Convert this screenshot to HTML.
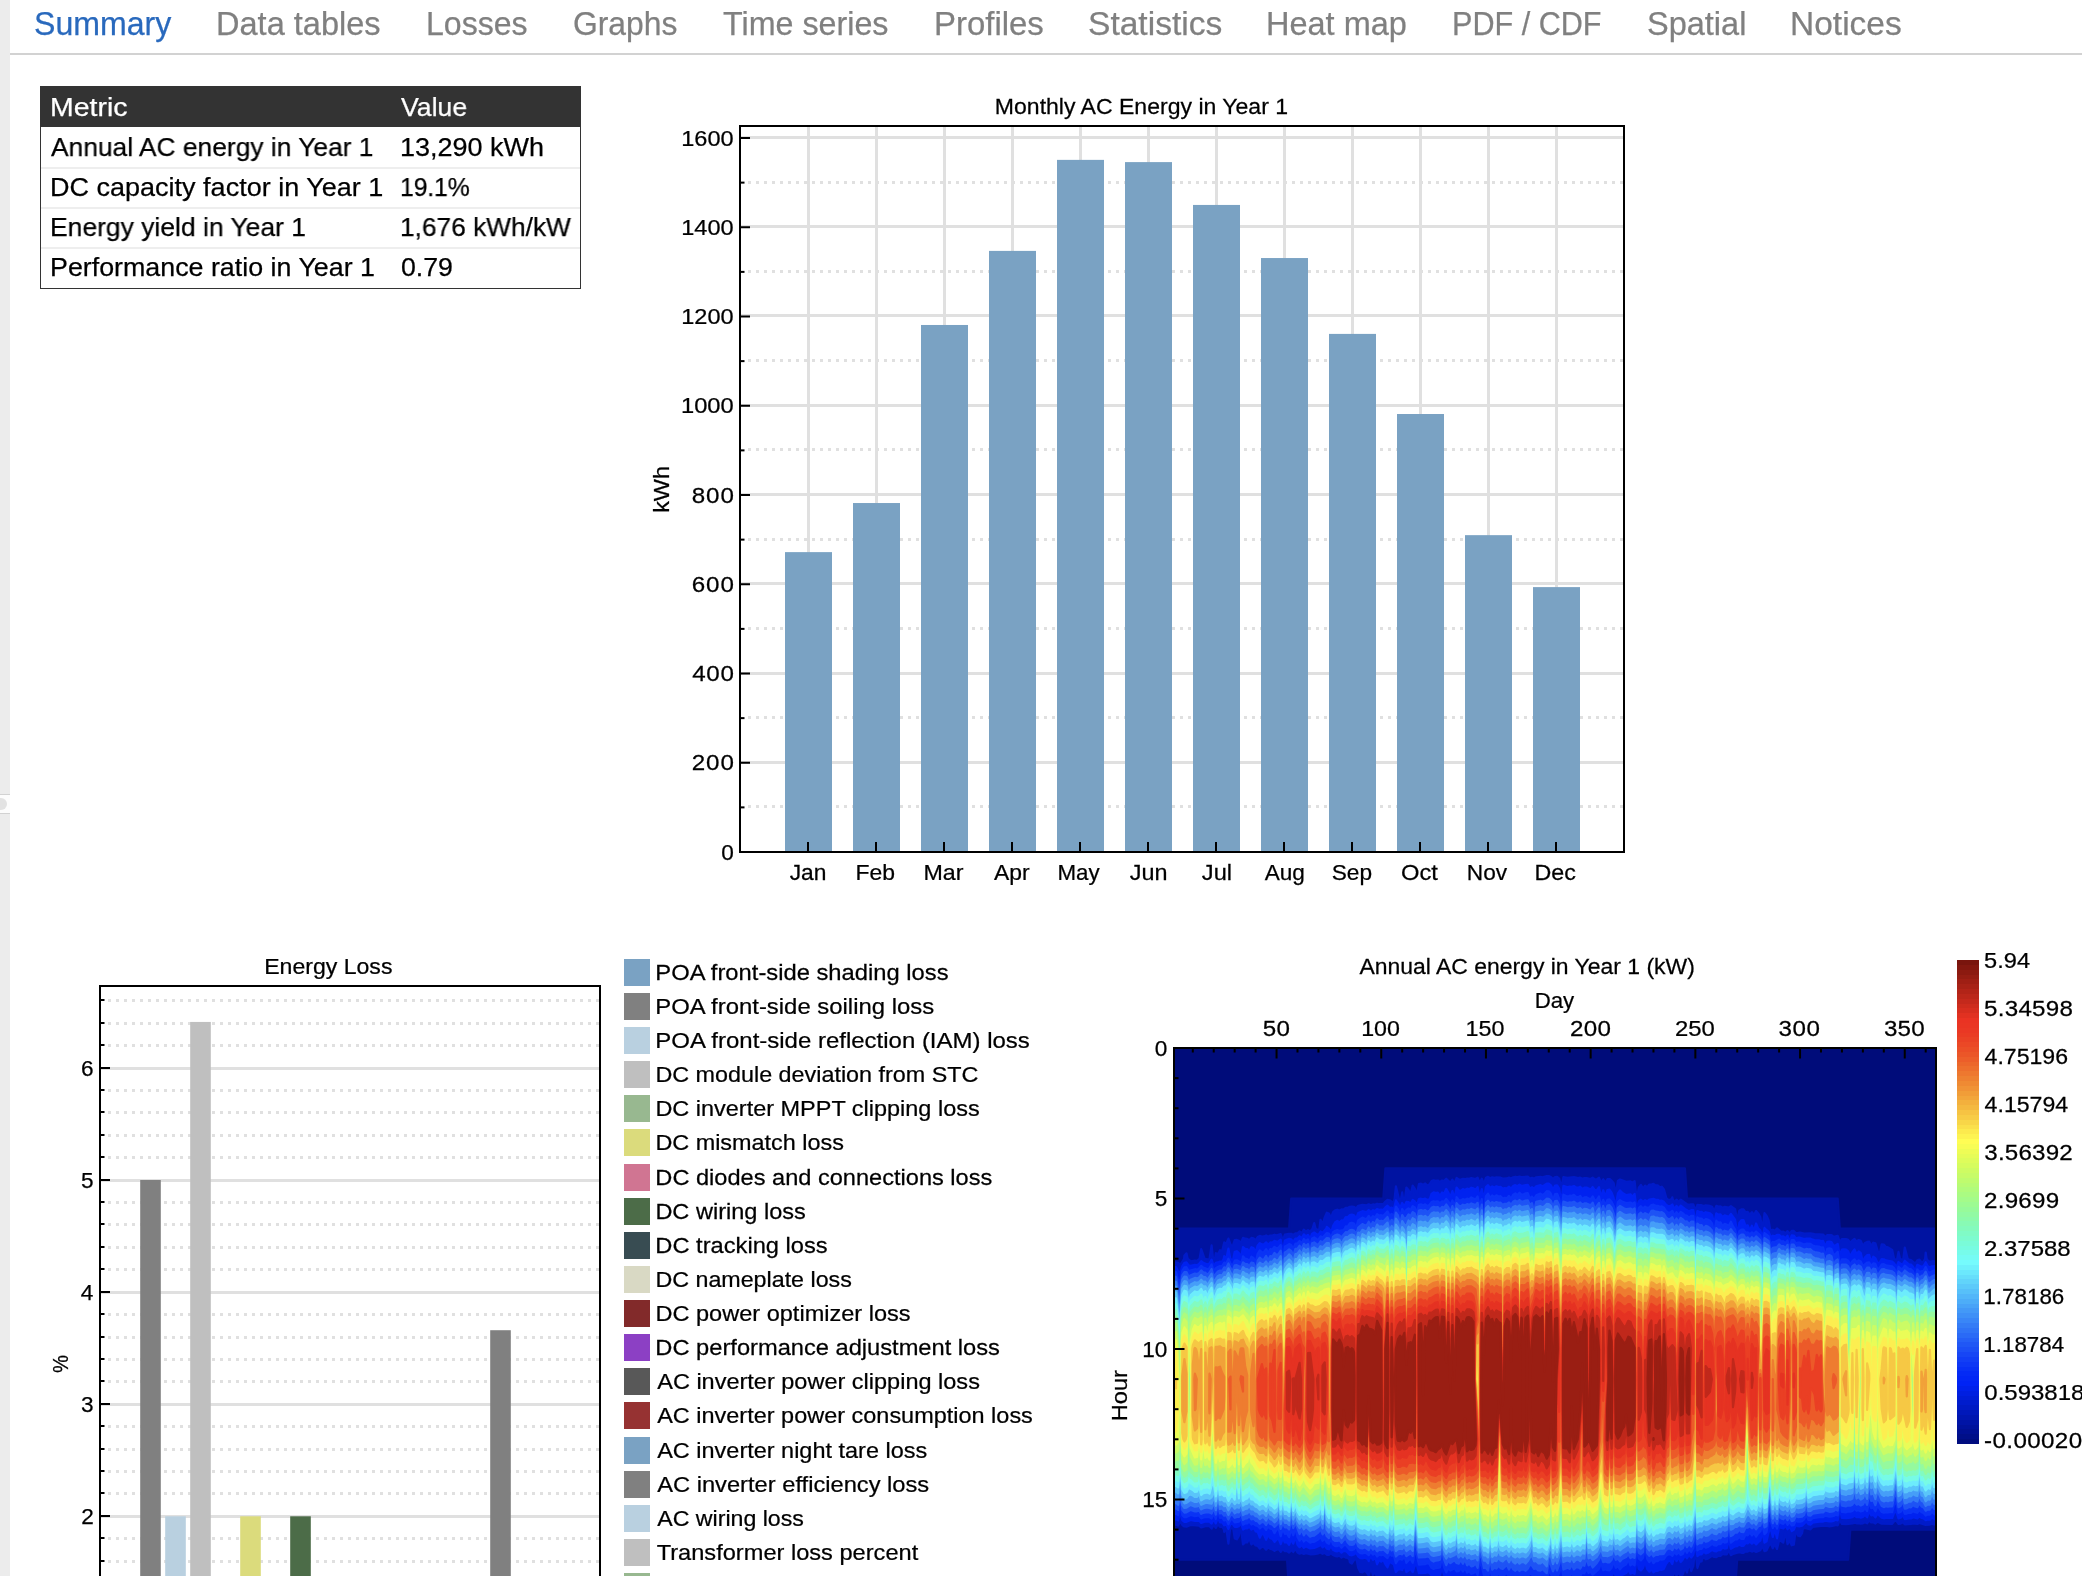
<!DOCTYPE html>
<html lang="en">
<head>
<meta charset="utf-8">
<title>Summary</title>
<style>
html,body{margin:0;padding:0;background:#fff}
body{width:2082px;height:1576px;overflow:hidden;position:relative;font-family:'Liberation Sans', 'DejaVu Sans', sans-serif;color:#000}
.strip{position:absolute;left:0;top:0;width:10px;height:1576px;background:#ececec}
.sash{position:absolute;left:0;top:794px;width:10px;height:18px;background:#fcfcfc;border-top:1px solid #d2d2d2;border-bottom:1px solid #d2d2d2;box-sizing:content-box;overflow:hidden}
.sash i{position:absolute;left:-5.8px;top:2.8px;width:12.5px;height:12.5px;border-radius:50%;background:#e2e2e2}
nav{position:absolute;left:10px;top:0;width:2072px;height:53px;border-bottom:2px solid #d2d2d2}
nav a{position:absolute;-webkit-text-stroke:.25px #808080;transform-origin:0 0;font-size:32.8px;line-height:1;color:#808080;white-space:pre;text-decoration:none}
nav a.on{color:#2969bd;-webkit-text-stroke-color:#2969bd}
table.m{position:absolute;left:40px;top:86px;width:541px;height:203px;border-collapse:separate;border-spacing:0;border:1px solid #333;box-sizing:border-box;table-layout:fixed;background:#fff}
table.m th,table.m td{padding:0;margin:0;font-weight:normal;text-align:left;line-height:0;font-size:0}
table.m th{background:#333;height:40px;box-shadow:0 -1px 0 #333,-1px 0 0 #333,1px 0 0 #333}
table.m td{height:38px;border-bottom:2px solid #eee}
table.m tr.r1 td{height:40px}
table.m tr.r4 td{height:39px;border-bottom:0}
table.m col.a{width:351px}
.c{position:absolute;-webkit-text-stroke:.25px #000;transform-origin:0 0;font-size:26.7px;line-height:1;white-space:pre}
.h{color:#fff;-webkit-text-stroke-color:#fff}
svg{position:absolute;left:0;top:0;will-change:transform}
nav,.c{will-change:transform}
svg text{font-family:'Liberation Sans', 'DejaVu Sans', sans-serif;white-space:pre;stroke:#000;stroke-width:.25px}
</style>
</head>
<body>
<div class="strip"><div class="sash"><i></i></div></div>
<nav>
<a class=on style="left:24.43px;top:7.83px;transform:scaleX(0.9787)">Summary</a>
<a style="left:206.07px;top:7.83px;transform:scaleX(0.9920)">Data tables</a>
<a style="left:415.91px;top:7.83px;transform:scaleX(0.9780)">Losses</a>
<a style="left:562.74px;top:7.83px;transform:scaleX(0.9705)">Graphs</a>
<a style="left:713.06px;top:7.83px;transform:scaleX(0.9832)">Time series</a>
<a style="left:923.54px;top:7.83px;transform:scaleX(1.0038)">Profiles</a>
<a style="left:1078.36px;top:7.83px;transform:scaleX(1.0233)">Statistics</a>
<a style="left:1255.78px;top:7.83px;transform:scaleX(0.9906)">Heat map</a>
<a style="left:1441.74px;top:7.83px;transform:scaleX(0.9325)">PDF / CDF</a>
<a style="left:1636.71px;top:7.83px;transform:scaleX(0.9912)">Spatial</a>
<a style="left:1779.79px;top:7.83px;transform:scaleX(1.0218)">Notices</a>
</nav>
<table class="m"><colgroup><col class="a"><col></colgroup>
<thead><tr class="r0"><th><span class="c h" style="left:8.5px;top:6.5px;transform:scaleX(1.0667)">Metric</span></th><th><span class="c h" style="left:359.55px;top:6.5px;transform:scaleX(0.9969)">Value</span></th></tr></thead>
<tbody><tr class="r1"><td><span class="c" style="left:9.9px;top:46.7px;transform:scaleX(0.9879)">Annual AC energy in Year 1</span></td><td><span class="c" style="left:358.58px;top:46.7px;transform:scaleX(1.0119)">13,290 kWh</span></td></tr>
<tr class="r2"><td><span class="c" style="left:8.62px;top:86.7px;transform:scaleX(1.0121)">DC capacity factor in Year 1</span></td><td><span class="c" style="left:358.74px;top:86.7px;letter-spacing:-0.2px;transform:scaleX(0.9300)">19.1%</span></td></tr>
<tr class="r3"><td><span class="c" style="left:8.67px;top:126.7px;transform:scaleX(0.9916)">Energy yield in Year 1</span></td><td><span class="c" style="left:358.63px;top:126.7px;transform:scaleX(0.9848)">1,676 kWh/kW</span></td></tr>
<tr class="r4"><td><span class="c" style="left:8.64px;top:166.7px;transform:scaleX(1.0047)">Performance ratio in Year 1</span></td><td><span class="c" style="left:359.5px;top:166.7px">0.79</span></td></tr>
</tbody></table>
<svg width="2082" height="1576" viewBox="0 0 2082 1576">
<g id="monthly">
<g fill="#e0e0e0"><rect x="741.0" y="761" width="882.0" height="3"/><rect x="741.0" y="672" width="882.0" height="3"/><rect x="741.0" y="582" width="882.0" height="3"/><rect x="741.0" y="493" width="882.0" height="3"/><rect x="741.0" y="404" width="882.0" height="3"/><rect x="741.0" y="314" width="882.0" height="3"/><rect x="741.0" y="225" width="882.0" height="3"/><rect x="741.0" y="136" width="882.0" height="3"/><rect x="807" y="127.0" width="3" height="724.0"/><rect x="875" y="127.0" width="3" height="724.0"/><rect x="943" y="127.0" width="3" height="724.0"/><rect x="1011" y="127.0" width="3" height="724.0"/><rect x="1079" y="127.0" width="3" height="724.0"/><rect x="1147" y="127.0" width="3" height="724.0"/><rect x="1215" y="127.0" width="3" height="724.0"/><rect x="1283" y="127.0" width="3" height="724.0"/><rect x="1351" y="127.0" width="3" height="724.0"/><rect x="1419" y="127.0" width="3" height="724.0"/><rect x="1487" y="127.0" width="3" height="724.0"/><rect x="1555" y="127.0" width="3" height="724.0"/></g>
<path d="M748 806.5H1623.0M748 717.5H1623.0M748 628.5H1623.0M748 539.5H1623.0M748 449.5H1623.0M748 360.5H1623.0M748 271.5H1623.0M748 182.5H1623.0" stroke="#e0e0e0" stroke-width="3" stroke-dasharray="3 5" fill="none"/>
<g fill="#7aa2c3"><rect x="785" y="552.12" width="47" height="299.88"/><rect x="853" y="503.03" width="47" height="348.97"/><rect x="921" y="324.98" width="47" height="527.02"/><rect x="989" y="250.9" width="47" height="601.1"/><rect x="1057" y="159.87" width="47" height="692.13"/><rect x="1125" y="162.1" width="47" height="689.9"/><rect x="1193" y="204.94" width="47" height="647.06"/><rect x="1261" y="258.04" width="47" height="593.96"/><rect x="1329" y="333.9" width="47" height="518.1"/><rect x="1397" y="414.01" width="47" height="437.99"/><rect x="1465" y="535.16" width="47" height="316.84"/><rect x="1533" y="587.11" width="47" height="264.89"/></g>
<g fill="#000"><rect x="739" y="125" width="2" height="728"/><rect x="1623" y="125" width="2" height="728"/><rect x="739" y="125" width="886" height="2"/><rect x="739" y="851" width="886" height="2"/><rect x="741" y="761.75" width="9" height="2"/><rect x="741" y="672.5" width="9" height="2"/><rect x="741" y="583.25" width="9" height="2"/><rect x="741" y="494" width="9" height="2"/><rect x="741" y="404.75" width="9" height="2"/><rect x="741" y="315.5" width="9" height="2"/><rect x="741" y="226.25" width="9" height="2"/><rect x="741" y="137" width="9" height="2"/><rect x="741" y="806.38" width="3.5" height="2"/><rect x="741" y="717.12" width="3.5" height="2"/><rect x="741" y="627.88" width="3.5" height="2"/><rect x="741" y="538.62" width="3.5" height="2"/><rect x="741" y="449.38" width="3.5" height="2"/><rect x="741" y="360.12" width="3.5" height="2"/><rect x="741" y="270.88" width="3.5" height="2"/><rect x="741" y="181.62" width="3.5" height="2"/><rect x="807" y="842" width="2" height="9"/><rect x="875" y="842" width="2" height="9"/><rect x="943" y="842" width="2" height="9"/><rect x="1011" y="842" width="2" height="9"/><rect x="1079" y="842" width="2" height="9"/><rect x="1147" y="842" width="2" height="9"/><rect x="1215" y="842" width="2" height="9"/><rect x="1283" y="842" width="2" height="9"/><rect x="1351" y="842" width="2" height="9"/><rect x="1419" y="842" width="2" height="9"/><rect x="1487" y="842" width="2" height="9"/><rect x="1555" y="842" width="2" height="9"/></g>
<g><text transform="translate(994.82 113.9) scale(1.0198 1)" font-size="22.6">Monthly AC Energy in Year 1</text><text transform="translate(721.15 859.6)" font-size="22.6">0</text><text transform="translate(691.73 770.35) scale(1.0700 1)" font-size="22.6" letter-spacing="0.86">200</text><text transform="translate(692.26 681.1) scale(1.0700 1)" font-size="22.6" letter-spacing="0.61">400</text><text transform="translate(691.73 591.85) scale(1.0700 1)" font-size="22.6" letter-spacing="0.86">600</text><text transform="translate(691.73 502.6) scale(1.0700 1)" font-size="22.6" letter-spacing="0.86">800</text><text transform="translate(680.96 413.35) scale(1.0492 1)" font-size="22.6">1000</text><text transform="translate(681.27 324.1) scale(1.0429 1)" font-size="22.6">1200</text><text transform="translate(681.27 234.85) scale(1.0429 1)" font-size="22.6">1400</text><text transform="translate(681.27 145.6) scale(1.0429 1)" font-size="22.6">1600</text><text transform="translate(789.65 879.9) scale(1.0101 1)" font-size="22.6">Jan</text><text transform="translate(855.42 879.9) scale(1.0152 1)" font-size="22.6">Feb</text><text transform="translate(923.4 879.9) scale(1.0286 1)" font-size="22.6">Mar</text><text transform="translate(993.9 879.9) scale(1.0129 1)" font-size="22.6">Apr</text><text transform="translate(1057.47 879.9) scale(0.9878 1)" font-size="22.6">May</text><text transform="translate(1129.84 879.9) scale(1.0360 1)" font-size="22.6">Jun</text><text transform="translate(1201.84 879.9) scale(1.0459 1)" font-size="22.6">Jul</text><text transform="translate(1264.7 879.9)" font-size="22.6">Aug</text><text transform="translate(1331.7 879.9) scale(1.0039 1)" font-size="22.6">Sep</text><text transform="translate(1400.95 879.9) scale(1.0500 1)" font-size="22.6">Oct</text><text transform="translate(1466.84 879.9) scale(1.0039 1)" font-size="22.6">Nov</text><text transform="translate(1534.5 879.9) scale(1.0305 1)" font-size="22.6">Dec</text><text transform="translate(669.2 512.85) rotate(-90) scale(1.0343 1)" font-size="22.6">kWh</text></g>
</g>
<g id="loss">
<g fill="#e0e0e0"><rect x="101.0" y="1067" width="498.0" height="3"/><rect x="101.0" y="1179" width="498.0" height="3"/><rect x="101.0" y="1291" width="498.0" height="3"/><rect x="101.0" y="1403" width="498.0" height="3"/><rect x="101.0" y="1515" width="498.0" height="3"/></g>
<path d="M108 1583.5H599.0M108 1561.5H599.0M108 1538.5H599.0M108 1493.5H599.0M108 1471.5H599.0M108 1449.5H599.0M108 1426.5H599.0M108 1381.5H599.0M108 1359.5H599.0M108 1337.5H599.0M108 1314.5H599.0M108 1269.5H599.0M108 1247.5H599.0M108 1224.5H599.0M108 1202.5H599.0M108 1157.5H599.0M108 1135.5H599.0M108 1112.5H599.0M108 1090.5H599.0M108 1045.5H599.0M108 1023.5H599.0M108 1000.5H599.0" stroke="#e0e0e0" stroke-width="3" stroke-dasharray="3 5" fill="none"/>
<rect x="140.2" y="1180" width="20.6" height="406" fill="#808080"/><rect x="165.2" y="1516.3" width="20.6" height="69.7" fill="#b9d0e0"/><rect x="190.2" y="1021.94" width="20.6" height="564.06" fill="#bfbfbf"/><rect x="240.2" y="1516.3" width="20.6" height="69.7" fill="#dbdb7c"/><rect x="290.2" y="1516.3" width="20.6" height="69.7" fill="#4c6c48"/><rect x="490.2" y="1330.21" width="20.6" height="255.79" fill="#808080"/>
<g fill="#000"><rect x="99" y="985" width="2" height="596"/><rect x="599" y="985" width="2" height="596"/><rect x="99" y="985" width="502" height="2"/><rect x="101" y="1067" width="9" height="2"/><rect x="101" y="1179" width="9" height="2"/><rect x="101" y="1291" width="9" height="2"/><rect x="101" y="1403" width="9" height="2"/><rect x="101" y="1515" width="9" height="2"/><rect x="101" y="1582" width="3.5" height="2"/><rect x="101" y="1560" width="3.5" height="2"/><rect x="101" y="1537" width="3.5" height="2"/><rect x="101" y="1492" width="3.5" height="2"/><rect x="101" y="1470" width="3.5" height="2"/><rect x="101" y="1448" width="3.5" height="2"/><rect x="101" y="1425" width="3.5" height="2"/><rect x="101" y="1380" width="3.5" height="2"/><rect x="101" y="1358" width="3.5" height="2"/><rect x="101" y="1336" width="3.5" height="2"/><rect x="101" y="1313" width="3.5" height="2"/><rect x="101" y="1268" width="3.5" height="2"/><rect x="101" y="1246" width="3.5" height="2"/><rect x="101" y="1223" width="3.5" height="2"/><rect x="101" y="1201" width="3.5" height="2"/><rect x="101" y="1156" width="3.5" height="2"/><rect x="101" y="1134" width="3.5" height="2"/><rect x="101" y="1111" width="3.5" height="2"/><rect x="101" y="1089" width="3.5" height="2"/><rect x="101" y="1044" width="3.5" height="2"/><rect x="101" y="1022" width="3.5" height="2"/><rect x="101" y="999" width="3.5" height="2"/></g>
<g><text transform="translate(264.21 974.2) scale(1.0211 1)" font-size="22.6">Energy Loss</text><text transform="translate(81.05 1075.8)" font-size="22.6">6</text><text transform="translate(81.05 1187.9)" font-size="22.6">5</text><text transform="translate(80.8 1300)" font-size="22.6">4</text><text transform="translate(81.05 1412.1)" font-size="22.6">3</text><text transform="translate(81.3 1524.2)" font-size="22.6">2</text><text transform="translate(67.5 1372.97) rotate(-90) scale(0.8973 1)" font-size="22.6">%</text></g>
</g>
<g id="legend">
<rect x="624" y="959" width="26" height="27" fill="#7aa2c3"/><rect x="624" y="993" width="26" height="27" fill="#808080"/><rect x="624" y="1027" width="26" height="27" fill="#b9d0e0"/><rect x="624" y="1061" width="26" height="27" fill="#bfbfbf"/><rect x="624" y="1095" width="26" height="27" fill="#98b890"/><rect x="624" y="1129" width="26" height="27" fill="#dbdb7c"/><rect x="624" y="1164" width="26" height="27" fill="#d07592"/><rect x="624" y="1198" width="26" height="27" fill="#4c6c48"/><rect x="624" y="1232" width="26" height="27" fill="#384c52"/><rect x="624" y="1266" width="26" height="27" fill="#d9d9c4"/><rect x="624" y="1300" width="26" height="27" fill="#822a2a"/><rect x="624" y="1334" width="26" height="27" fill="#8c40c4"/><rect x="624" y="1368" width="26" height="27" fill="#585858"/><rect x="624" y="1402" width="26" height="27" fill="#963232"/><rect x="624" y="1437" width="26" height="27" fill="#7aa2c3"/><rect x="624" y="1471" width="26" height="27" fill="#808080"/><rect x="624" y="1505" width="26" height="27" fill="#b9d0e0"/><rect x="624" y="1539" width="26" height="27" fill="#bfbfbf"/><rect x="624" y="1573" width="26" height="27" fill="#98b890"/>
<g><text transform="translate(655.36 979.9) scale(1.0516 1)" font-size="22.6">POA front-side shading loss</text><text transform="translate(655.35 1013.9) scale(1.0568 1)" font-size="22.6">POA front-side soiling loss</text><text transform="translate(655.34 1047.9) scale(1.0612 1)" font-size="22.6">POA front-side reflection (IAM) loss</text><text transform="translate(655.39 1081.9) scale(1.0332 1)" font-size="22.6">DC module deviation from STC</text><text transform="translate(655.38 1115.9) scale(1.0389 1)" font-size="22.6">DC inverter MPPT clipping loss</text><text transform="translate(655.39 1149.9) scale(1.0351 1)" font-size="22.6">DC mismatch loss</text><text transform="translate(655.37 1184.9) scale(1.0439 1)" font-size="22.6">DC diodes and connections loss</text><text transform="translate(655.38 1218.9) scale(1.0420 1)" font-size="22.6">DC wiring loss</text><text transform="translate(655.37 1252.9) scale(1.0481 1)" font-size="22.6">DC tracking loss</text><text transform="translate(655.4 1286.9) scale(1.0295 1)" font-size="22.6">DC nameplate loss</text><text transform="translate(655.38 1320.9) scale(1.0427 1)" font-size="22.6">DC power optimizer loss</text><text transform="translate(655.37 1354.9) scale(1.0481 1)" font-size="22.6">DC performance adjustment loss</text><text transform="translate(657.2 1388.9) scale(1.0410 1)" font-size="22.6">AC inverter power clipping loss</text><text transform="translate(657.2 1422.9) scale(1.0391 1)" font-size="22.6">AC inverter power consumption loss</text><text transform="translate(657.2 1457.9) scale(1.0392 1)" font-size="22.6">AC inverter night tare loss</text><text transform="translate(657.2 1491.9) scale(1.0485 1)" font-size="22.6">AC inverter efficiency loss</text><text transform="translate(657.2 1525.9) scale(1.0250 1)" font-size="22.6">AC wiring loss</text><text transform="translate(656.68 1559.9) scale(1.0450 1)" font-size="22.6">Transformer loss percent</text></g>
</g>
<g id="heatmap">
<clipPath id="hc"><rect x="1174.0" y="1048.0" width="762.0" height="528.0"/></clipPath>
<g clip-path="url(#hc)" stroke-width="2.2" stroke-linejoin="round"><rect x="1174.0" y="1048.0" width="762.0" height="528.0" fill="#000c7a" stroke="none"/>
<path fill="#0013a1" stroke="#0013a1" d="M1383.3 1198.5l2.1-30.1 299.5 0 2.1 30.1 150.7 0.1 2.1 30 96.4 0 0 301-85.9 0-2.1 30-111 0.1-2.1 30-71.2 0.1-2.1 30-259.6 0-2.1-30-111-0.1-2.1-30-113.1-0.1 0-331 115.2 0 2.1-30z"/>
<path fill="#001bc9" stroke="#001bc9" d="M1394.6 1198.5l1.3-12.2 3 12.2 1.2 1.9 1-1.9 1.1-6.1 0.9 6.1 1.2 2 0.7-2 1.4-11 2.1 2.5 2.1 4.7 2.1-9.1 2.1 3 2 6.4 2.1-10.9 2.1-0.4 2.1 1 2.1-1.2 2.1 2 2.1-1 2.1-3.4 2.1-0.8 2.1 0.5 2.1-0.3 2.1 1.6 2.1-1.6 2.1 0.5 2.1-2.3 4.2 4.1 2-3.1 2.1 3.9 2.1-5.6 2.1 1.4 2.1 0.4 2.1-1 2.1 0.4 2.1-0.7 2.1 0.4 2.1-0.8 4.2 0.9 2.1-1.3 2.1 5.3 2.1-4.3 2.1 5.1 2.1-6.1 2-0.9 2.1 1.4 2.1-0.8 2.1 0.5 2.1-0.5 4.2 0.3 2.1 0.8 4.2-0.1 2.1-0.9 2.1 1 2.1-1.3 2.1-0.5 2.1 0.6 2.1-0.8 2 0.7 6.3-0.6 2.1 1.9 2.1-0.7 2.1 0.8 2.1-1.3 4.2-0.5 2.1 0.5 4.2-1.3 2.1 0 2.1 0.9 2.1 2.2 2.1-2.1 2-0.1 2.1 1.7 2.1 8.9 2.1-10.3 4.2 0.6 6.3-0.6 4.2 0.9 2.1-0.5 2.1 1.1 2.1-0.6 2.1-0.1 4.1 1 2.1-1.3 2.1 1.6 2.1 0 2.1-1.6 2.1 5.1 2.1-3.5 2.1 3.4 2.1-3.5 2.1-0.2 2.1 1.6 2.1 2.7 2.1 10.4 2.1-12.8 2.1-1.4 6.2 2.3 4.2-0.4 2.1 1.2 2.1-1.5 2.1 17.5 2.1-10.9 2.1-2.8 2.1 3.6 2.1-2.9 2.1 1.9 2.1-3 2.1 0.1 2.1-0.7 2.1 1.4 2.1 0 2.1 2 2-0.6 2.1 2.7 2.6 9.1 1.6 1.1 2.1 0.3 1.8-1.4 0.3-1.2 0.2 1.2 1.9 3.9 2.1-2.8 2.1 2.2 2.1-2.1 6.3 4.5 2.1 0.7 2.1-0.6 2.1 0 2.1 6.3 2-5.8 2.1 0.4 2.1 0 2.1 0.8 2.1-0.7 4.2 0.6 2.1 0.9 2.1 4.3 2.1-5.2 2.1 0.7 2.1-0.2 2.1 1.3 2.1-0.8 4.2 0.7 2-1.4 4.2 2.9 2.1 10.8 2.1-9.2 2.1-1.4 2.1 0 2.1 3 2.1-0.4 2.1 2.7 2.1-2.5 2.1 2.8 2.1-3.9 2.1 2.4 2.1 3.7 2.1 12.2 2.1-16.1 2 2.5 2.1 4.5 1.4 8.4 0.7 1.6 2.1-0.5 2.1 1 2.1-2.3 4.2 3.5 2.1-0.2 2.1 1.5 2.1-2.1 2.1 2.7 2.1-2.9 2.1 0 2.1 2.4 4.1-0.6 4.2 0.9 6.3-0.2 4.2 0.7 8.4 0.4 2.1 2.7 2.1-2.2 4.2 0 2.1 1.8 4.1-1 2.1 6.4 2.1-3.1 2.1-0.1 2.1 0.1 2.1 0.8 2.1 2.8 2.1-2.3 2.1-1.4 2.1 2.6 2.1-1.6 2.1 0.8 2.1 5.2 2.1-3.1 2.1-1 2.1-0.2 2 4.3 2.1-3.3 2.1 0.6 2.1 7.1 2.1 4.1 2.1-10.2 2.1 0.3 2.1 2.3 2.1 0.5 4.2 2.6 1.9 8.7 2.3 1.4 0.8-1.4 1.3-6.8 1.5 6.8 2.7 1.2 0.6-1.2 1.5-11.2 2.9 11.2 1.2 1 2.1 0.4 4.2 3.6 2.1-3.5 2.1-0.6 2.1 2.6 2.1-0.7 1.5-2.8 0.6-6.2 0.9 6.2 1.2 1.9 2.1 1.1 2.1-0.5 4.2 0.1 0 263.2-2.1-0.1-2.1-0.8-2.1 1-4.2 0.3-6.3-1.9-2.1 1-4.2-0.5-2.1 0.5-6.2 0.3-2.1-2-2.1 1.4-2.1 0.3-2.1-3.2-2.1 0.2-2.1 2.8-10.5-0.1-4.2-2.1-2.1 1.9-2.1-1.3-2.1 0.2-2-2.1-2.1 3.1-2.1-1.1-2.1 1-2.1 0.3-2.1-0.4-2.1 0.1-2.1-0.7-2.1 0.8-6.3 0.8-4.2-0.2-2.1-4.1-2.1 5.4-2.1-0.4-2 0.8-4.2 0.6-2.1-0.4-6.3 0.1-8.4 1-2.1 2.3-6.3-1.3-1.5 1.6-0.6 3.6-2.1 3.1-2-0.6-2.1-6.2-2.1 15.3-2.1 0.5-2.1-4.8-2.1 3.7-2.1-13.1-2.1 11.5-2.1-1.6-2.1-0.4-2.1 8.4-2.1-5.1-2.1 4.4-2.1-5.3-2.1 3.1-2.1 4.4-2 0.7-2.1-5.3-2.1 4.3-4.2 1.8-2.1-1.2-2.1 0.8-2.1-1-2.1 1-2.1-0.3-2.1 1.5-2.1 0-2.1-0.7-6.3 1.8-2.1 1.3-2-5-2.1 4.1-2.1 0.2-2.1-0.5-2.1 2-2.1-0.2-2.1 1.4-2.1-0.2-2.1-1.2-4.2 2.9-2.1 0.6-2.1-2.1-1.8 2.5-0.3 1.8-2.1 0.3-2.1 6.2-0.9-8.3-1.1-4.9-1.4 4.9-0.7 6.4-2.1 5-2.1-8.2-2.1 9.6-2.1-4.6-2.1 6.6-2.1 1.4-2.1-3.2-2.1 2.8-2.1-3.5-2.1 4.9-2.1-1.8-2.1 0.5-2.1 1.3-2.1 2.4-2.1 1-2-0.2-2.1 0.7-2.1-0.1-2.1 0.8-2.1-1.5-2.1 1.2-2.1-1.3-2.1-3.5-2.1 3-2.1 1.2-2.1-0.8-2.1-6.1-2.1 8.5-2.1-0.5-2.1 0.4-2.1-2-2.1 1.7-2 0.4-2.1 1-2.1 1.8-2.1-2.6-2.1 1.6-2.1-2-4.2 4-4.2-0.9-2.1 1-2.1-3.3-2.1 4.8-2.1-1.5-4.2 3.3-2.1-2.6-2 1.6-2.1 0.6-4.2-1.1-1.3 1.9-0.8 4.2-2.1-2.7-2.1-0.4-2.1 4.3-2.1-5.5-2.1 3.6-2.1-2.2-4.2 4.6-1.1-5.9-1-2.2-1.5 2.2-2.7 7.2-2-1-2.1 2.3-4.2-7.4-2.1 10-2.1-2.8-2.1-4-2.1 3.8-2.1-1.3-2.1-3.1-2.1 0-2.1 2.9-2.1-4.8-2.1 4.4-2.1 2-2.1-2.2-2.1-0.5-2 3.1-2.1-4.3-2.1 3.2-2.1-2.3-2.1-4.9-2.1 4.5-1-4.8-1.1-1.5-2.6 1.5-1.6 4.8-4.2-4.1-2.1 3.2-2.1-3.1-2.1 4-1.1-4.8-1-1.6-0.7 1.6-1.4 6.9-2.1-6.3-2-0.6-2.1-4.3-2.1-0.4-2.1 4.9-2.1-3.5-2.1 1.7-2.1 0.4-2.1-2.3-2.1 1.1-2.1-2.5-2.1 1.8-2.1-2.2-2.1 1.3-2.1 2.3-2.1-4.5-2.1 1.4-2 0.5-2.1-1.8-2.1 2.9-4.2-6.8-2.1 3-2.1 0.4-2.1-0.2-2.1 0.8-4.2-2.1-2.1-0.3-8.4 0.5-2.1-4.2-2 0.5-2.1 3.1-2.1-1.5-4.2 1.5-2.1-3.2-2.1 2.3-2.1-1.1-2.1 0.4-2.1 1.2-2.1-3.8-4.2-1.3-2.1 2.8-2.1-1.5-2.1-2.3-2.1 1-2-1.1-2.1 2.3-2.1-4.8-2.1 2.6-2.1-7.2-2.1 7.9-2.1-3.1-2.1-1.7-2.1 1.7-2.1-0.4-2.1-4.3-1.6-8-0.5-0.8-1.8 0.8-2.4 3.8-2.1-1.3-0.4-2.5-1.7-1.9-2-0.2-2.1-1.3-2.1 1.3-2.1-2.1-2.1 0.9-2.1-0.3-2.1-1-2.1-2-2.1 1.8-2.1-0.1-2.1-1.9-2.1 0.9-2.1-1.3-2.1 0.8-4.2 0.8-4.1 0.2-4.2-1-2.1 0.7-2.1-1.3-2.1 1-2.1-1.2-2.1-3.7-2.1 3.2-2.1-2-2.1 2.6-2.1-1.6-2.1 0.1-2.1-2.1-2.1 2.9-2.1-2.8-2 0.5-2.1 1.3-2.1-1.6-2.1-0.3-2.1-1.8-2.1 2.5-2.1-2.4-2.1-0.7-2.1 2.1-2.1-2.9-2.1-0.3-2.1-2.9-2.1 1.9-2.1-6-2.1 3.9-2.1 0-2.1 2-2-15.9-1 1.1-1.1 6.3-2.1 3.4-2.1-0.9-1.3-8.8-0.8-1.2-2.1-0.1-0.5 1.3-1.6 14-2.1-14.7-1.4 0.7-0.7 2.4-0.2-2.4-1.9-3-2.1 0.2-2.1-2.5-2.1 3.6-2.1-3.1-2.1 3.8-2.1-2.4-4.1-0.1-4.2 1.4-2.1-1.8-8.4-0.7-4.2 1.6-2.1-0.1-2.1-1.5-2.1-3.5-2.1 4-2.1-0.9-2.1 0.1 0-262.7 4.2 0.8 2.1 2.3 3.9-6.4 0.3-3.1 2.1-2.3 1.2 5.4 3 2.6 4.2-0.7 2.1 0.2 2.6-2.1 1.6-9.6 3.4 9.6 2.8 0.7 2.1-0.4 2.1-13.7 1.5 13.4 0.6 1.8 1.3-1.8 0.8-5.6 2.1 1.1 2.1-4 2.1 1.1 2.1-8.9 2.1 1.2 2.1-5 2.1 5.8 2.1 2.3 2.1-6.5 2.1-0.3 2.1 0.9 2.1 2.2 2-5.2 2.1 0.9 2.1 0.1 2.1 1.4 2.1-2.3 2.1 0.5 2.1 2 2.1-3.4 2.1-1.1 2.1 0.6 2.1-0.1 2.1-1 2.1 1.3 2.1-1.2 2.1 0.1 2.1-0.9 2.1 0.5 4.1-1.1 2.1 6 2.1-5.5 4.2-0.8 2.1 0 2.1 1.1 2.1-1.6 2.1 0 2.1-1.9 2.1 1.8 2.1-3.6 2.1 1.9 2.1-1.4 2.1 1.5 2.4-3 1.7-5.5 1.4 5.5 2.8 1.6 1-1.6 1.1-8.8 2.1 4.9 2.1-7.3 2.1-4.7 2.1 0.9 2.1 4.2 2.1-5.6 2.1-1.8 2.1-0.7 2.1 0.9 2.1-1.2 2.1 0.2 2.1-1.8 2 0.1 2.1-1.1 2.1-0.2 2.1 0.2 2.1 1.6 2.1-2.6 4.2-0.9 4.2 0.4 2.1-1 2.1 1 2.1-0.9 2.1 0.4 2.1-1.1 2.1 0.5 4.1 0 2.1-2.7 2.1-1.6 2.1 0.4 2.1 1.3 2.1 0.2z"/>
<path fill="#0022f0" stroke="#0022f0" d="M1430 1198.5l1.5-4.7 2.1-1.5 2.1 0.8 2.1-0.5 2.1 3.2 2.1-3.3 2.1 1.1 2.1-4.7 2.1 3.6 2.1 4.7 2-6.2 2.1 7.7 2.1-11.2 2.1 2.8 2.1 0.8 2.1-2 2.1 0.9 2.1-1.4 2.1 0.8 2.1-1.7 2.1 0.6 2.1 1.4 2.1-2.6 2.1 10.5 2.1-8.6 2.1 10.6 2-12.6 2.1-1.8 2.1 2.9 2.1-1.7 2.1 1 2.1-1.1 2.1 0.8 2.1-0.2 2.1 1.6 2.1-0.5 2.1 0.3 2.1-1.6 2.1 1.9 2.1-2.6 2.1-0.9 2.1 1.1 2.1-1.6 2 1.4 4.2-1 2.1-0.1 2.1 3.7 2.1-1.4 2.1 1.6 2.1-2.5 4.2-1.2 2.1 1.2 4.2-2.7 2.1 0.1 2.1 1.6 2.1 4.5 2.1-4.2 2-0.3 2.1 3.4 2.1 13.5 2.1-16.3 4.2 1.3 2.1-0.6 2.1 0.2 2.1-0.8 2.1 1.4 2.1 0.3 2.1-1 2.1 2.2 2.1-1.2 2.1-0.1 4.1 2 2.1-2.6 2.1 3.2 2.1 0 2.1-3.1 2.1 10.2 2.1-7.1 2.1 6.7 2.1-6.8 2.1-0.5 2.1 3.1 2.1 5.5 2.1 7.6 2.1-12.4 2.1-2.9 2.1 2.1 4.1 2.6 4.2-0.9 2.1 2.5 2.1-3 2.1 15 2.1-7.4 2.1-1.7 2.1 2.1 2.1-1.7 2.1 1.2 2.1-1.8 4.2-0.7 2.1 1 2.1 0 2.1 1.1 2-0.3 2.1 1.2 2.1 2.8 2.1 1.5 2.1 0.1 2.1-1.7 2.1 4.5 2.1-3.1 2.1 2.6 2.1-2.8 4.2 3.2 4.2 2.5 2.1-1.3 2.1 0 2.1 12.5 2-11.6 2.1 1 2.1-0.2 2.1 1.7 2.1-1.3 4.2 1.2 2.1 1.7 2.1 8.6 2.1-10.4 2.1 1.4 2.1-0.3 2.1 2.5 2.1-1.5 4.2 1.3 2-2.7 4.2 5.7 2.1 12.7 1.2-3.8 0.9-5.7 2.1-2.8 2.1 0 2.1 6 2.1-0.8 1.4 3.3 0.7 0.7 0.8-0.7 1.3-2.9 1.2 2.9 0.9 0.8 0.6-0.8 1.5-5.1 2.2 5.1 2 1.8 2.1 6.5 2.1-9 0.3 0.7 3.8 2.9 2.1 5.8 2.1-1.6 2.1 0.7 2.1-1.6 2.1 0 2.1 1.9 2.1-0.3 2.1 1.8 2.1-2.5 2.1 5.8 2.1-6.1 2.1 0.1 2.1 2.9 2.1-0.7 2 0 4.2 1.3 2.1-0.5 4.2 0.2 2.1 1 2.1 0.4 4.2 0.3 2.1 0.6 2.1-0.1 2.1 5.6 2.1-4.6 2.1-0.4 2.1 0.6 2.1 3.7 2-0.5 2.1-1.5 2.1 11.9 2.1-6.1 2.1-0.2 2.1 0.3 2.1 1.6 2.1 5.4 2.1-4.5 2.1-2.8 2.1 5.1 2.1-3.2 2.1 1.8 1.3 5.6 0.8 1.6 1.5-1.6 0.6-1.5 2.1-2 2.1-0.4 1 3.9 1 1.6 1.4-1.6 0.7-2 2.1 1.4 2.1 4.6 2.1 0.2 2.1-3.8 2.1 0.2 2.1 1.1 6.3 1.2 2.1 2 2.1 3.7 2.1-5.3 2.1 1.9 2.1 0.6 2.1-3.8 4.1 3.7 2.1 0.2 2.1 2.1 2.1 4.3 2.1-6.2 4.2 1.9 2.1-0.6 2.1-3.9 2.1 4 2.1 1 2.1-0.9 4.2-0.3 0 253.4-2.1-0.2-2.1-1.6-2.1 2-2.1-0.1-2.1 0.7-2.1-1.7-2.1-0.5-2.1-1.7-2.1 2.1-4.2-1.1-2.1 1.2-2.1-0.2-4.1 0.8-2.1-4-2.1 2.7-2.1 0.6-2.1-6.4-2.1 0.4-2.1 5.6-6.3-0.1-2.1 0.4-2.1-0.5-4.2-4.2-2.1 3.8-2.1-2.5-2.1 0.4-2-4.3-2.1 6.3-2.1-2.3-2.1 2-2.1 0.6-2.1-0.8-2.1 0.3-2.1-1.5-2.1 1.6-2.1 0.4-4.2 0.6-4.2-0.3-2.1-8.7-2.1 11.2-2.1-0.7-2 1.2-2.1 0.4-2.1 0.2-4.2-0.8-2.1 0.9-2.1-0.1-8.4 1.1-2.1 2.1-2.1-0.5-2.1-2.8-4.2 4.3-2.1 0.6-2-0.1-2.1-1.2-2.1 4.9-2.1 1.1-0.4-1.4-1.7-2.3-2.1 2-2.1-3.8-2.1 3-4.2-1.4-2.1 11.2-2.1-9.2-2.1 7.9-2.1-8.8-1 1.4-1.1 3-2.1 8.8-2 1.3-2.1-10.6-2.1 8.6-2.1 1.5-2.1 2.2-2.1-2.6-2.1 1.8-2.1-2.1-2.1 2-2.1-0.5-2.1 2.9-2.1-0.1-2.1-1.3-2.1 1.7-2.1 0.2-4.2 2.4-2-9.1-2.1 8.5-2.1 0.4-2.1-1-2.1 2.5-2.1-0.3-2.1 1.6-2.1-0.2-2.1-1.4-4.2 3-2.1 0.6-2.1-2-2.1 3-2.1 0-2.1 1.7-2-11.3-2.1 10-2.1 2.7-2.1-2.7-2.1 3.5-2.1-2.8-2.1 4-2.1 2.5-0.9-2.3-1.2-1.4-1.4 1.4-0.7 1.5-0.5-1.5-1.6-1.8-1 1.8-1.1 4.4-2.1-3.6-2.1 0.8-2.1 2.8-2.1 4.8-2.1 0.9-2-0.4-2.1 1.5-2.1-0.1-2.1 1.5-2.1-3.1-2.1 2.5-2.1-2.6-2.1-7.4-2.1 6.3-2.1 2.5-2.1-1.7-2.1-11-2.1 16-2.1-1-2.1 0.9-2.1-4.1-2.1 3.5-4.1 1.9-2.1 2.1-2.1-2.8-2.1 1.6-2.1-4.2-2.1 4.2-2.1 2.2-2.1-0.1-2.1-0.8-2.1 0.9-2.1-5.3-2.1 5.5-2.1 0.1-4.2 3.7-2.1-3-2 1.6-2.1-1.9-2.1 2.2-2.1-0.8-2.1 3.4-2.1-1.1-2.1 0-2.1 1.6-2.1-2.8-2.1 2.2-2.1-0.8-4.2 1.5-2.1-7.9-2.1 5.5-2.1 3.1-2-1.6-2.1 2.2-4.2-5.1-2.1 6.6-4.2-3.3-2.1 1.5-2.1-0.5-2.1-1.3-4.2 0-2.1-1.6-2.1 2.3-2.1 1.2-2.1-1-2.1-0.2-2 1.4-2.1-1.9-2.1 1.4-2.1-1-2.1-2.3-2.1 2.2-2.1-3.4-4.2 3.3-4.2-1.9-2.1 1.6-2.1-1-2.1 1.5-2.1-5.4-2.1 6.2-2.1-2.2-2-0.1-2.1-6.5-2.1-2.3-2.1 8.8-2.1-3.7-2.1 1.9-2.1 0.5-2.1-2.5-2.1 1.3-2.1-3.6-2.1 2.7-2.1-2.8-2.1 2.1-2.1 1.3-2.1-3.8-2.1 1.4-2 0.7-2.1-2-2.1 3.5-2.1-4.5-2.1-6.6-2.1 6.7-2.1 0.5-2.1-0.1-2.1 0.9-2.1-1-2.1-2.5-2.1-0.6-2.1 0.7-6.3 0.2-2.1-8.6-2 0.9-2.1 6.6-2.1-3.3-4.2 3.3-2.1-6.8-2.1 4.7-2.1-1.2-2.1 0.9-2.1 2.4-2.1-7.8-4.2-2.5-2.1 5.6-2.1-3-2.1-4.6-2.1 1.9-2-2-2.1 4.6-1.2-4.6-0.9-1.5-2.1 1.6-2.1-3.4-1.8 3.3-0.3 1.5-0.6-1.5-1.5-1.3-2.1-0.8-2.1 0.8-2.1-0.2-2.1-1.7-2.1-3.9-2.1 1.9-2.1 0.8-2.1-0.3-2.1-2.3-2-1.5-2.1-0.3-2.1 1.8-2.1-2.5-2.1 1.1-2.1-0.2-2.1-1.2-2.1-4-2.1 3.4-2.1-0.7-2.1-3.1-2.1 1.8-2.1-2.7-2.1 1.7-4.2 1.7-4.1 0.4-4.2-2.1-2.1 1.5-2.1-2.8-2.1 2.2-2.1-2.5-2.1-7.9-2.1 6.9-2.1-4.3-2.1 5.5-2.1-2.6-2.1 0.1-2.1-4.1-2.1 5.8-2.1-5.6-2 1.1-2.1 2.4-2.1-3.1-2.1-0.7-2.1-3.5-2.1 5-2.1-4.8-2.1-1.3-2.1 4.1-2.1-5.8-2.1-0.5-0.7-1.8-1.4-1.2-2.1 1.1-2.1-2.9-2.1 1.7-2.1 0-2.1 1.2-2-6.1-2.1 2.8-2.1 0.8-2.1-0.1-2.1-3-2.1 0-2.1 5.1-2.1-4.8-2.1 1.1-2.1-3.2-2.1 0.3-2.1-5-2.1 6.1-2.1-4.3-2.1 4.4-2.1-2-4.1-0.1-4.2 1.4-2.1-2.3-4.2 0.2-4.2-0.8-4.2 1.8-2.1 0-2.1-1.7-2.1-7.5-2.1 7.8-2.1-1.2-2.1 0.1 0-252.3 2.1 0.1 2.1 4.3 2.1 1.6 2.1-6.8 2.1-3.4 2.1-0.4 2.1 2.9 2.1 0.6 4.2-1 2.1 0.3 2.1-1.3 2.1-2.7 2.1 1.6 4.1 1.7 2.1-1 2.1-3.9 2.1 6.2 2.1-2.9 2.1-0.5 2.1-0.9 2.1 0.3 1.6-3.1 0.5-2.6 2.1 2.5 2.1-9.9 1.9 10 2.3 1.8 0.7-1.8 1.4-6.9 2.1-0.6 2.1 1.8 2.1 4.3 2-10.2 2.1 1.8 2.1 0.1 2.1 2.8 2.1-4.6 2.1 0.9 2.1 4 2.1-6.7 2.1-2.3 2.1 1.3 2.1-0.2 2.1-1.9 2.1 2.6 2.1-2.5 2.1 0.1 2.1-1.7 2.1 1 2-0.6 2.1-1.6 2.1 12 2.1-11.1 4.2-1.6 2.1 0.5 2.1 2.4 2.1-3.3 2.1-0.1 2.1-2.2 2.1 2.2 2.1-4.1 2.1 2.1 2.1-1.6 2.1 3.8 2-5 2.1-1.1 2.1 1.6 2.1 1 2.1-3.6 2.1 1.2 3.7-4.1 0.5-1.7 2.1 1.7 2.1 2.8 1.4-2.8 0.7-2.7 2.1-3.7 2.1-1.4 2.1 1.8 2.1-2.2 2.1 0.3 2.1-3.6 2 0.2 2.1-2.2 2.1-0.5 2.1 0.6 2.1 3.1 2.1-5.2 4.2-1.9 4.2 0.8 2.1-1.9 2.1 2 2.1-1.9 2.1 0.9 2.1-2.2 2.1 1 2-0.3 2.1 0.4 2.1-2.6 2.1-1.8 2.1 2.4 2.1-0.3 2.1 1.7 2.1-9 2.1 3.1 2.1 4.7 2.1-5.2 2.1 3.5 2.1-4.6 2.1 0.3 2.1 1.6 2.1-3.8 2.1 1.5 2 3.8 2.1-6.3 2.1-0.3 2.1 0.7 2.1-0.8 2.1 1.3 2.1-0.6z"/>
<path fill="#0a33f5" stroke="#0a33f5" d="M1456.4 1198.5l0.2-1.4 2.1 2.9 2.1 0.5 2.1-1.4 2.1 0.6 2.1-1.1 2.1 0.7 2.1-1.9 4.2 2.1 2.1-3.1 2.1 10 2.1-7.4 2.1 27.5 1.7-28 0.3-2.2 2.1-2.7 2.1 4.3 2.1-2.5 2.1 1.5 2.1-1.6 2.1 1.2 2.1-0.3 2.1 2.3 2.1-0.7 2.1 0.5 2.1-2.5 2.1 2.8 2.1-3.9 2.1-1.3 2.1 1.7 2.1-2.4 2 2.1 2.1-0.4 2.1-1.1 2.1-0.2 2.1 5.5 2.1-2 2.1 2.5 2.1-3.9 4.2-1.7 2.1 1.7 2.1-1.6 2.1-2.4 2.1 0.1 2.1 2.5 2.1 6 2.1-5.6 2-0.4 2.1 4.9 2.1 12.2 2.1-16.2 4.2 2 2.1-1 2.1 0.2 2.1-1.1 2.1 2 2.1 0.6 2.1-1.5 2.1 3 2.1-1.5 2.1-0.2 4.1 2.2 2.1-3.1 2.1 4.2 2.1-0.6 2.1-3.5 2.1 9 2.1-5.5 2.1 5.2 2.1-5.3 2.1-0.4 2.1 2.3 2.1 4.3 2.1 8.7 2.1-12.7 2.1-1.9 2.1 1.5 4.1 1.4 4.2-0.5 2.1 1.3 2.1-1.5 2.1 16.6 2.1-11 2.1-1.7 2.1 2.2 2.1-1.8 2.1 1.3 2.1-0.5 2.1-2.3 2.1-0.4 2.1 1.1 2.1 0 2.1 1 2-0.4 2.1 1.3 2.1 3.2 2.1 1.7 2.1 0 2.1-1.8 2.1 4.8 2.1-3.4 2.1 3 2.1-3.4 2.1 1.4 2.1 2.1 2.1 0.4 2.1 2.1 2.1-1.9 2.1 0 2.1 17 2-15.6 2.1 1.4 2.1-0.2 2.1 2.5 2.1-2 2.1 0.6 2.1 1.2 2.1 2.6 2.1 9.8 2.1-12.5 2.1 2.1 2.1-0.5 2.1 3.9 2.1-2.4 4.2 2 2-4.1 2.1 4.7 2.1 3 2.1 9.5 2.1-7.7 2.1-1.6 2.1 0.1 2.1 3.2 2.1-0.6 2.1 2.1 2.1-2 2.1 1.8 2.1-2.7 4.2 3.8 2.1 9.2 2.1-11.3 4.1 3 2.1 8.2 2.1-2.6 2.1 0.2 4.2-2.4 2.1 1.9 2.1-0.3 2.1 2 2.1-2.9 2.1 8.8 2.1-9.1 2.1 0.1 2.1 3.4 2.1-0.9 2 0.1 4.2 1.7 2.1-0.7 4.2 0.2 2.1 1.6 2.1 0.6 4.2 0.5 2.1 0.9 2.1-0.2 2.1 8.6 2.1-7.1 2.1-0.5 2.1 0.8 2.1 5.7 2-0.8 2.1-2.3 2.1 13.9 2.1-6.2 4.2 0 2.1 1.3 2.1 3.8 2.1-3.5 2.1-1.7 2.1 2.9 2.1-1.8 2.1 1.1 2.1 4.7 4.2-3.7 2.1-0.1 2 3.7 2.1-2.8 2.1 0.5 2.1 5.5 2.1-1.3 2.1-3.7 2.1-0.2 2.1 1.2 6.3 1.1 2.1 1.9 2.1 6.3 2.1-7.9 2.1 1.9 2.1 0.5 2.1-3.5 4.1 3.5 2.1 0.1 2.1 2 2.1 7.2 2.1-9.1 2.1 2.6 4.2-1.2 2.1-3.8 2.1 4.9 2.1 0.9 2.1-1.4 2.1-0.7 2.1 0 0 243.7-2.1-0.2-2.1-2.4-2.1 2.9-2.1-0.2-2.1 1.1-2.1-2.5-2.1-0.8-2.1-2.5-2.1 3.1-2.1-0.5-2.1-1.1-2.1 1.7-2.1-0.3-2.1 1-2 0.2-2.1-6-2.1 4.2-2.1 0.8-2.1-9.6-2.1 0.6-2.1 8.4-2.1-0.2-2.1 0.5-2.1-0.4-2.1 0.6-2.1-0.7-4.2-6.4-2.1 5.7-2.1-3.8-2.1 0.6-2-6.3-2.1 9.3-2.1-3.4-2.1 3.1-2.1 0.7-2.1-1.2-2.1 0.5-2.1-2.2-2.1 2.3-2.1 0.8-2.1-0.2-2.1 0.8-4.2-0.5-2-12.3-0.1-7.7 0 7.7-2.1 16-2.1-1-2 1.5-2.1 0.5-2.1 0.1-4.2-1-2.1 1.5-2.1-0.1-8.4 1.1-2.1 2.1-2.1-0.3-2.1-5.5-2.1 4.8-2.1 1.9-2.1 0.6-2 0-2.1-1.2-2.1 4.6-2.1 0.4-2.1-3.6-2.1 2.9-2.1-3.7-2.1 2.8-2.1-0.8-2.1-1.8-2.1 7.4-2.1-5.3-2.1 4.6-2.1-7-2.1-1.1-2.1 12.3-2 2-2.1-9.4-2.1 6.5-2.1 2.2-2.1 3.2-2.1-3.8-2.1 2.6-2.1-3.1-2.1 3-2.1-0.8-2.1 4.4-2.1-0.1-2.1-2-2.1 2.5-2.1 0-4.2 3.1-2-13.1-2.1 12.7-2.1 0.5-2.1-1.3-2.1 2.8-2.1-0.3-2.1 1.9-2.1-0.4-2.1-1.4-4.2 3.1-2.1 0.6-2.1-2-2.1 3.2-2.1-0.2-2.1 1.7-2-15.5-2.1 13.2-2.1 4-2.1-2.8-2.1 3.6-2.1-3.9-2.1 5.1-2.1 1.1-2.1-2.9-2.1 2.3-2.1-2.4-2.1 3.8-2.1-1.7-2.1 0.3-2.1 1.4-2.1 3.2-2.1 0.5-2-0.4-2.1 1.9-2.1-0.2-2.1 2.3-2.1-4.2-2.1 3.2-2.1-3.2-2.1-12.1-2.1 11.2-2.1 2.3-2.1-1.7-2.1-10-2.1 16.7-2.1-1.5-2.1 1.4-2.1-5.9-2.1 4.9-4.1 2.6-2.1 2.4-2.1-3.2-2.1 1.8-2.1-6.6-2.1 6.6-2.1 2.4-2.1-0.1-2.1-0.9-2.1 0.9-2.1-7.5-2.1 6.2-6.3 5.9-2.1-3.4-2 1.6-2.1-4.3-2.1 4.7-2.1-0.9-2.1 3.6-2.1-1.3-2.1 0.1-2.1 1.9-2.1-3.9-2.1 3.3-2.1-1-4.2 1.6-2.1-11.7-2.1 7.9-2.1 4.7-2-3.2-2.1 3.9-2.1-4.5-2.1-3.2-2.1 9.4-4.2-3.8-2.1 1.7-2.1-0.4-2.1-1.7-2.1 0.2-4.2-2.8-2.1 3.1-2.1 1.6-2.1-1.1-2.1-0.1-2 1.4-2.1-2-2.1 1.7-2.1-1.2-2.1-3.1-2.1 3.1-2.1-3.9-4.2 3.6-2.1-0.9-2.1-1.7-2.1 2.2-2.1-0.9-2.1 1.8-2.1-7.9-2.1 8.7-2.1-2.5-2 0.1-2.1-8.8-2.1-4.1-2.1 12.7-2.1-4-2.1 2.2-2.1 0.5-2.1-2.7-2.1 1.5-2.1-4.7-2.1 3.6-2.1-3.4-2.1 3-2.1 0.3-2.1-3.2-4.1 2.4-2.1-2.3-2.1 4.1-2.1-5.1-2.1-9.7-2.1 9.8-2.1 0.6-2.1 0.1-2.1 0.9-2.1-1.1-2.1-3.9-2.1-0.9-2.1 1.1-6.3 0.4-2.1-9.3-2-5.3-1.3 9.7-0.8 3.1-2.1-4-1.6 0.9-2.6 3.2-0.8-3.2-1.3-3-2.1 3-2.1-0.7-2.1 0.6-2.1 3.6-2.1-7.9-2.1 0.5-2.1-1.9-2.1 4.2-4.2-3.5-2.1 0.7-2-0.7-2.1 1.9-2.1-3.4-2.1 1.6-2.1-3.4-2.1 3.9-2.1-1.7-2.1-0.9-2.1 0.8-2.1-0.3-2.1-1.6-2.1-5.3-2.1 3.1-2.1 0.8-2.1-0.3-4.1-4.9-2.1 0.6-2.1 2.3-2.1-2.8-2.1 1.1-2.1 0-2.1-1.4-2.1-6-2.1 5.1-2.1-1.3-2.1-4.3-2.1 2.7-2.1-4.2-2.1 2.6-4.2 2.6-2.1 0-2 0.7-4.2-3.3-2.1 2.3-2.1-4.2-2.1 3.2-2.1-3.7-2.1-9.2-2.1 7.6-2.1-6.4-2.1 8.3-2.1-3.7-2.1 0.3-2.1-5.3-2.1 7.8-2.1-7.9-2.1 1.2-2 3.6-2.1-4.1-2.1-0.4-2.1-2.3-2.1 3.4-2.1-2.8-2.1-0.6-2.1 2-2.1-2.6-2.1-0.3-2.1-1.9-2.1 0.9-2.1-3.2-2.1 2.1-2.1 0.1-2.1 1.2-2-6.5-2.1 3.4-4.2 0.8-2.1-3.1-2.1 0.2-2.1 4.8-2.1-4.7-2.1 0.9-2.1-3-2.1 0.4-2.1-7.5-2.1 8.7-2.1-5.5-2.1 5-2.1-1.5-2.1-0.3-4.1 0.6-2.1 1-2.1-2.9-4.2 0.6-4.2-1.1-4.2 2.1-2.1 0.1-2.1-2.1-2.1-11.4-2.1 11.5-2.1-1.5-2.1 0.2 0-242 2.1 0.1 2.1 8.1 2.1 0.8 2.1-10.1 2.1-3.4 2.1-0.2 2.1 3.8 6.3-1.8 2.1 0.4 2.1-1.2 2.1-2.6 2.1 1.7 2.1 0.7 2 1.5 2.1-1.7 2.1-3.7 2.1 6.9 2.1-3 2.1-1.3 2.1-0.9 2.1 0.4 2.1-3.8 2.1 0.7 2.1-4.6 2.1 4.9 2.1 2.3 2.1-5.3 2.1-0.3 2.1 1 2.1 1.5 1.6-4.1 0.4-2.4 1.9 2.4 2.3 0.3 2.1 1.8 1.4-2.1 0.7-2.1 2.1 1.3 2.1 4.5 2.1-8.6 2.1-3.4 2.1 1.9 2.1-0.3 2.1-2.9 2.1 3.9 2.1-3.8 2.1 0.3 2.1-2.7 2.1 1.7 2-1 2.1-2.4 2.1 16.6 2.1-15.2 2.1-0.9 2.1-1.5 2.1 1 2.1 3.6 2.1-5 2.1-0.2 2.1-2.6 2.1 2.8 2.1-4.7 2.1 2.2 2.1-1.8 2.1 6.2 2-7.1 2.1-1.1 2.1 1.6 2.1 0.9 2.1-3.6 2.1 1.2 4.2-4.5 2.1 0.5 2.1 4.2 2.1-5.6 2.1-1.4 2.1-0.7 2.1 0.9 4.2-0.9 1.1-1.4 1-2.2 2 0.3 2.1-3.3 2.1-0.7 2.1 0.8 2.1 4.7 2.1-7.8 4.2-2.8 2.1 0.9 2.1 0.3 2.1-2.9 2.1 3 2.1-2.8 2.1 1.4 2.1-3.4 2.1 1.5 2-0.4 2.1 0.5 4.2-4.4 2.1 4.5 2.1-2 2.1 3.2 2.1-10.5 2.1 3 2.1 6.5 2.1-7 2.1 3.5 2.1-2.6 2.1-1.6 2.1 1.7 2.1-3.9 2.1 1.4 2 5.7 2.1-8.4 2.1-0.4 2.1 0.8 2.1-0.9 2.1 1.6 2.1-0.9 2.1-2.9 2.1-0.9 2.1 0.5 2.1-0.3 2.1 2 2.1-2.1 2.1 0.6 2.1-3 2.1 2.5 2.1 3.8 2-4.8 2.1 5.4z"/>
<path fill="#1e53f5" stroke="#1e53f5" d="M1358 1228.6l0.2-1 4.2-3.6 2.1 1.1 2.1 0.5 2.1-3.9 2.1 4 2.1-3.7 2.1 1.8 2.1-4.5 2.1 1.9 2-0.5 2.1 0.7 4.2-4.4 2.1 6.5 2.1-3.7 2.1 4.8 2.1-12.1 2.1 3 2.1 8.2 2.1-8.7 2.1 3.6 2.1-0.8 2.1-3.4 2.1 1.8 2.1-4.1 2.1 1.4 2 7.5 2.1-10.5 2.1-0.4 2.1 1 2.1-1 2.1 1.7 2.1-1 2.1-3 2.1-1 2.1 0.5 2.1-0.3 2.1 2.5 2.1-2.6 2.1 0.7 2.1-3.1 2.1 2.6 2.1 5.5 2-6.5 2.1 6.9 2.1-9.8 2.1 2.4 2.1 0.7 2.1-1.6 2.1 0.7 2.1-1.3 2.1 0.7 2.1-1.4 4.2 1.7 2.1-2.3 2.1 12.1 2.1-10.3 2.1 29.3 2.1-31.2 2-2 2.1 3.1 2.1-1.7 2.1 1.1 2.1-1.2 2.1 0.8 2.1-0.1 2.1 2 2.1-0.9 2.1 0.1 2.1-1.5 2.1 2.2 2.1-3 2.1-1 2.1 1.3 2.1-1.9 2 1.7 2.1-0.4 2.1-0.8 2.1-0.2 2.1 4.6 2.1-1.7 2.1 8.5 2.1-9.8 4.2-1.2 2.1 1.2 2.1-1.1 2.1-2.1 2.1 0.1 2.1 2 2.1 5.9 2.1-5.5 2-0.3 2.1 4.3 2.1 14.4 2.1-18 4.2 1.4 2.1-0.7 2.1 0.2 2.1-0.8 2.1 1.5 2.1 0.5 2.1-1.2 2.1 2.1 2.1-1.2 2.1 0 4.1 1.8 2.1-2.5 2.1 6.2 4.2-6 2.1 10.1 2.1-7.2 2.1 6.6 2.1-6.8 2.1-0.4 2.1 2.5 2.1 5.9 2.1 10.1 2.1-15.8 2.1-1.9 4.2 2.5 2 0.5 4.2-0.5 2.1 1.4 2.1-1.5 2.1 20.6 2.1-14.6 2.1-1.7 2.1 2.2 2.1-1.7 4.2 2.1 2.1-4.4 2.1-0.3 2.1 1.1 2.1 0.1 2.1 0.8 2-0.4 2.1 1.4 2.1 3.7 2.1 1.8 2.1-0.2 2.1-1.8 2.1 5 2.1-3.6 2.1 3.5 2.1-4.2 2.1 1.5 2.1 2.4 2.1-0.3 2.1 2.9 2.1-2.6 2.1 0 2.1 19.7 2-17.9 2.1 1.9 2.1-0.2 2.1 3.4 2.1-2.8 2.1 0.8 2.1 1.6 2.1 2.3 2.1 10.2 2.1-12.5 2.1 1.8 2.1-0.3 2.1 2.7 2.1-1.7 4.2 1.4 2-3 2.1 3.3 2.1 2 2.1 10.9 2.1-9.1 2.1-1.6 2.1 0 2.1 3.6 2.1-0.9 2.1 2.3 2.1-2.4 2.1 1.9 2.1-2.7 4.2 3.8 2.1 11.9 2.1-14 4.1 2.8 2.1 10.6 2.1-3.7 4.2-0.6 2.1-2.9 2.1 1.9 2.1-0.2 2.1 2.2 2.1-3.4 2.1 11.9 2.1-12.2 2.1 0.2 2.1 3.9 2.1-1.1 2 0.2 4.2 2.1 2.1-0.9 2.1 0.4 2.1-0.1 2.1 2.1 2.1 0.8 4.2 0.7 2.1 1.2 2.1-0.3 2.1 9.7 2.1-7.6 2.1-0.8 2.1 1.1 2.1 9.2 2-4.4 2.1-1.6 2.1 15.2 2.1-9.9 4.2-0.1 2.1 1.9 2.1 4.9 2.1-5.1 2.1-1.7 2.1 2.7 2.1-1.8 2.1 1.2 2.1 5.4 2.1-0.8 2.1-3.5 2.1-0.1 2 4.4 2.1-3.4 2.1 0.4 2.1 6.8 4.2-6.4 2.1-0.4 2.1 1.1 6.3 1.2 2.1 1.8 2.1 8.7 2.1-10.4 2.1 1.9 2.1 0.4 2.1-3.2 4.1 3.3 2.1 0 2.1 1.9 2.1 10 2.1-11.9 2.1 4.3 2.1-2.2 2.1-0.6 2.1-3.7 2.1 5.8 2.1 0.7 2.1-1.7 2.1-1 2.1-0.1 0 233.9-2.1-0.3-2.1-3.2-2.1 3.9-2.1-0.2-2.1 1.3-2.1-3.3-2.1-0.9-2.1-3.5-2.1 4.2-2.1-0.7-2.1-1.5-2.1 2.3-2.1-0.3-2.1 1.3-2 0.3-2.1-8.1-2.1 5.6-2.1 1.1-2.1-12.4-2.1 1.8-2.1 9.7-2.1-0.1-2.1 0.6-2.1-0.5-2.1 0.8-2.1-1-4.2-8.3-2.1 7.4-2.1-5-2.1 0.7-2-9.5-1 8.1-1.1 5.4-2.1-4.5-2.1 4.1-2.1 1-2.1-1.6-2.1 0.7-2.1-2.9-2.1 3-2.1 1-2.1-0.4-2.1 1-4.2-0.7-1-6.1-1.1-49.9-0.6 49.9-1.5 11.2-2.1-1.4-2 1.9-2.1 0.5-2.1 0.1-4.2-1.3-2.1 2-2.1-0.1-8.4 1.2-2.1 2-2.1-0.1-2.1-8-2.1 7.3-2.1 1.8-2.1 0.4-2 0.1-2.1-1.1-2.1 4.5-2.1 0.6-2.1-4.6-2.1 3.7-2.1-3.4-2.1 2.5-2.1-0.8-2.1-3.1-2.1 8.4-2.1-6-2.1 5.5-2.1-9.4-2.1-6.4-2.1 18.7-2 1.2-2.1-8.5-2.1 6.8-2.1 0.6-2.1 3-2.1-2.7-2.1 1.7-2.1-2.2-2.1 1.5-2.1-0.1-2.1 4.6-2.1-0.1-2.1-2.6-2.1 3.2-2.1-0.2-2.1 2.4-2.1 1.3-2-14-2.1 13.9-2.1 0.6-2.1-1.6-2.1 3.2-2.1-0.4-2.1 2.2-2.1-0.5-2.1-1.6-4.2 3.3-2.1 0.6-2.1-2.1-2.1 3.4-2.1-0.3-2.1 1.7-2-19-2.1 15.8-2.1 5.2-2.1-2.9-2.1 3.6-2.1-5-2.1 6.2-2.1 1.1-2.1-3.4-2.1 2.6-2.1-2.3-2.1 3.7-2.1-1.8-2.1 0.3-2.1 1.5-2.1 3.7-2.1 0.4-2-0.4-2.1 1.2-2.1-0.1-2.1 1.6-2.1-3.4-2.1 2.7-2.1-2.6-2.1-21.1-2.1 20.2-2.1 2-2.1-1.4-2.1-13.3-2.1 18.4-2.1-1.1-2.1 1.1-2.1-3.8-2.1 2.9-4.1 2-2.1 2.3-2.1-2.8-2.1 1.2-2.1-5.9-2.1 6-2.1 2.5-2.1-0.1-2.1-0.9-2.1 0.8-2.1-7.1-2.1 4.5-2.1 3.3-4.2 4.6-2.1-3.9-2 1.7-2.1-7.5-2.1 8-2.1-1.1-2.1 4-2.1-1.6-2.1 0.2-2.1 2.2-2.1-5-2.1 4.4-2.1-1.2-4.2 1.8-2.1-13.7-2.1 8.5-2.1 6.2-2-4.8-2.1 5.6-2.1-6.2-2.1-4.1-2.1 12.2-4.2-4.3-2.1 1.8-2.1-0.2-2.1-2.1-2.1 0.4-2.1-3.2-2.1-0.8-2.1 3.9-2.1 2.1-2.1-1.2-2.1-0.2-2 1.6-2.1-2.3-2.1 2.1-2.1-1.4-2.1-3.9-2.1 4-2.1-4.5-4.2 3.9-2.1-0.8-2.1-2.4-2.1 2.9-2.1-0.9-2.1 2.1-2.1-10.3-2.1 11.1-2.1-2.7-2 0.1-2.1-9.7-2.1-4.4-2.1 13.9-2.1-4.3-2.1 2.4-2.1 0.5-2.1-2.9-2.1 1.8-2.1-5.8-2.1 4.3-2.1-4-2.1 3.9-2.1-0.7-2.1-2.6-4.1 2.8-2.1-2.6-2.1 4.6-2.1-5.5-2.1-11.1-2.1 11.1-2.1 0.8-2.1 0.1-2.1 1-2.1-1.3-2.1-3.2-2.1-0.6-2.1 0.7-6.3 0.3-2.1-9.2-2-16.3-2.1 24.1-2.1-2.7-4.2 2.8-2.1-4.7-2.1 2.9-2.1-0.6-2.1 0.6-2.1 2.1-2.1-8.1-2.1 2.1-2.1-3.5-2.1 6.1-4.2-3.6-2.1 0.7-2-0.6-2.1 1.8-2.1-3.4-2.1 1.7-2.1-3.6-2.1 4.1-2.1-1.6-2.1-1-2.1 0.9-2.1-0.4-2.1-1.6-2.1-6.7-2.1 4.3-2.1 0.8-2.1-0.2-2.1-2.2-2-4-2.1 1.6-2.1 2.8-2.1-3.2-2.1 1.3-2.1 0-2.1-1.4-2.1-8.2-2.1 6.8-2.1-1.9-2.1-5.5-2.1 3.6-2.1-5.4-2.1 3.3-4.2 3.4-2.1 0.1-2 0.9-4.2-4.5-2.1 3.2-2.1-5.7-2.1 4.4-4.2-11.1-2.1 5.2-2.1-8.2-2.1 9.5-2.1-2.3-2.1 0.1-2.1-4.7-2.1 6.3-2.1-8.6-2 4.7-2.1 1.9-2.1-2.3-2.1-0.6-2.1-3-2.1 4.1-2.1-2.7-2.1-0.5-2.1 1.9-2.1-2.6-2.1-0.4-2.1-2-2.1 0.7-2.1-3.5-2.1 2.4-2.1 0.2-2.1 1.3-2-6.8-2.1 3.9-2.1 0-2.1 0.8-2.1-3-2.1 0.3-2.1 4.5-2.1-4.6-2.1 0.7-2.1-2.7-2.1 0.5-2.1-10-2.1 11.1-2.1-6.6-2.1 5.6-2.1-1.1-2.1-0.4-4.1 0.7-2.1 1.1-2.1-3.4-2.1 0.8-2.1 0.1-4.2-1.5-4.2 2.5-2.1 0.2-2.1-2.5-2.1-15.4-2.1 15.3-2.1-1.7-2.1 0.2 0-231.7 2.1 0.1 2.1 11.8 2.1 0.1 2.1-13.4 2.1-3.4 2.1 0 2.1 4.6 2.1-1.4 4.2-1.6 2.1 0.4 2.1-1.1 2.1-2.5 2.1 1.9 2.1 0.4 2 2.1 2.1-2.3 2.1-3.5 2.1 7.5 4.2-5 2.1-1 2.1 0.5 2.1-3.6 2.1 0.6 2.1-4.5 2.1 4.6 2.1 3.1 2.1-5.9 2.1-0.2 4.2 2.2 2-5 2.1 1.5 2.1 0.2 2.1 2.2 2.1-3.6 2.1 0.5 2.1 7.5 2.1-9.9 2.1-3.1 2.1 1.9 2.1-0.2 2.1-3.4 2.1 4.5 2.1-4.3 2.1 0.3 2.1-3.5 2.1 2.2 2-1.3 2.1-3.2 2.1 19 2.1-17.2 2.1-1.1 2.1-2 2.1 1.5 2.1 4.8 2.1-6.7 2.1-0.3 2.1-2.9 2.1 3.3 2.1-5.2 2.1 2.2 2.1-1.9 2.1 8.5 2-9.3 2.1-0.9 2.1 1.5 2.1 0.9 2.1-3.6 2.1 1.1 4.2-4.3 2.1 0.3 2.1 5.7 2.1-7.4 2.1-1.3 2.1-0.7 2.1 0.7 2.1 1.9 4.2-5 2 0.2 2.1-2 2.1-0.5 2.1 0.6 2.1 3.7z"/>
<path fill="#3278f6" stroke="#3278f6" d="M1368.1 1228.6l0.6-1.1 2.1 3.7 2.1-3.3 2.1 1.8 2.1-5.1 2.1 2.3 2-0.6 2.1 0.8 4.2-4.5 2.1 8.2 2.1-4.9 2.1 5.5 2.1-12.9 2.1 3.1 2.1 8.7 2.1-9.2 2.1 3.5 2.1 1.2 2.1-5.3 2.1 1.8 2.1-4.1 2.1 1.3 2 9.3 2.1-12.5 2.1-0.5 2.1 1.1 2.1-1 2.1 1.9 2.1-1.2 2.1-3.1 2.1-1.1 2.1 0.5 2.1-0.4 2.1 3 2.1-3 2.1 0.7 2.1-3.1 2.1 2.7 2.1 7.1 2-8.1 2.1 8.4 2.1-11.6 2.1 2.7 2.1 0.8 2.1-1.8 2.1 0.7 2.1-1.4 2.1 0.8 2.1-1.5 4.2 1.9 2.1-2.4 2.1 14.9 2.1-13 2.1 29.3 2-31.4 2.1-2.1 2.1 3.3 2.1-1.9 2.1 1.3 2.1-1.4 2.1 1 2.1-0.2 2.1 2.7 2.1-1.5 2.1 0.1 2.1-1.6 2.1 2.7 2.1-3.7 2.1-1 2.1 1.3 2.1-1.8 2 1.7 6.3-1.4 2.1 5.4 2.1-2 2.1 15.2 2.1-17.1 4.2-1.1 2.1 1.2 2.1-1 2.1-2.4 2.1 0.3 2.1 1.8 2.1 7.7 2.1-7 2-0.4 2.1 5.4 2.1 16.6 2.1-21.1 2.1 0.4 2.1 1 2.1-0.8 2.1 0.3 2.1-0.9 2.1 1.6 2.1 0.7 2.1-1.3 2.1 2.2 2.1-1.5 2.1 0.1 4.1 1.9 2.1-2.7 2.1 9.1 2.1-5.9 2.1-2.9 2.1 12.1 2.1-8.8 2.1 8 2.1-8.4 2.1-0.5 2.1 2.8 4.2 16.9 2.1-16.8 2.1-1.9 4.2 2.7 2 0.4 4.2-0.6 2.1 1.6 2.1-1.6 2.1 22.9 2.1-16.4 2.1-1.7 2.1 2.3 2.1-1.8 2.1 1.4 2.1 2.1 2.1-6.4 2.1-0.3 2.1 1.2 2.1 0 2.1 0.8 2-0.5 2.1 1.5 2.1 4.2 2.1 1.9 2.1-0.4 2.1-1.8 2.1 5.3 2.1-3.9 2.1 3.9 2.1-4.9 2.1 1.6 2.1 2.7 2.1-1 2.1 3 2.1-2.6 2.1 0 2.1 22.4 2-20.3 2.1 1.7 2.1-0.3 2.1 2.6 2.1-2 2.1 0.7 2.1 1.1 2.1 2.3 2.1 12.5 2.1-14.8 2.1 1.7 2.1-0.4 2.1 2.9 2.1-1.9 2.1 1 2.1 0.4 2-3 2.1 3.1 2.1 2.2 2.1 12.3 2.1-10.5 2.1-1.7 2.1 0 2.1 3.9 2.1-1.1 2.1 2.5 2.1-2.8 2.1 1.9 2.1-2.6 4.2 3.7 2.1 15.3 2.1-17.4 4.1 2.7 2.1 13.1 2.1-4.9 2.1-0.6 2.1 0.2 2.1-4.3 2.1 1.9 2.1-0.2 2.1 2.4 2.1-3.8 2.1 12.5 2.1-12.9 2.1 0.3 2.1 4.4 2.1-1.2 2 0.2 2.1 0.9 2.1 1.6 2.1-1.2 2.1 0.6 2.1-0.1 2.1 2.6 2.1 1 4.2 0.8 2.1 1 2.1-0.2 2.1 10.4 2.1-8.5 2.1-0.6 2.1 0.9 2.1 15.1 2-11.4 2.1-1.4 2.1 19.2 2.1-13.6 2.1-0.4 2.1 0.2 2.1 2.5 2.1 5.9 2.1-6.7 2.1-1.6 2.1 2.6 2.1-1.9 2.1 1.4 2.1 6.1 2.1-0.1 2.1-5 2.1 0 2 5 2.1-3.9 2.1 0.4 2.1 8.1 4.2-7.9 2.1-0.6 2.1 1 4.2 0.5 2.1 0.7 2.1 1.7 2.1 11.2 2.1-12.8 2.1 1.8 2.1 0.3 2.1-3 4.1 3.2 2.1-0.1 2.1 1.8 1.6 8.6 0.5 6.9 0.4-6.9 1.7-10.4 2.1 5.9 2.1-3.8 2.1-0.6 2.1-3.6 2.1 6.7 2.1 0.6 2.1-2.2 2.1-1.3 2.1-0.1 0 224.1-2.1-0.4-2.1-4-2.1 5-2.1-0.4-2.1 1.7-2.1-4.1-2.1-1.2-2.1-5.6-2.1 6.5-2.1-0.9-2.1-1.7-2.1 2.7-2.1-0.4-2.1 1.6-2 0.4-2.1-9.9-2.1 6.8-2.1 1.4-2.1-15-2.1 4-2.1 9.9-2.1-0.2-2.1 0.8-2.1-0.7-2.1 1-2.1-1.2-4.2-9.6-2.1 8.5-2.1-5.9-2.1 1.2-2-13.8-2.1 18.2-2.1-5.6-2.1 5.2-2.1 1.1-2.1-2.6-2.1 1.6-2.1-10.7-2.1 10.8-2.1 1.1-2.1-0.5-2.1 1.1-4.2-0.8-1.6-30.1-0.5-34.7-0.4 34.7-0.9 30.1-0.8 6.3-2.1-1.7-2 2.3-2.1 0.5-2.1 0.1-4.2-1.6-2.1 2.6-4.2 0.1-6.3 1-2.1 1.9-2.1 0.1-2.1-10.6-2.1 9.9-2.1 1.6-4.1 0.6-2.1-1.1-2.1 4.4-2.1 0.7-2.1-5.4-2.1 4.5-2.1-3.2-2.1 2.2-2.1-0.8-2.1-4.3-2.1 9.3-2.1-6.7-2.1 6.4-2.1-11.9-2.1-8.6-2.1 23.4-2 1-2.1-9.5-2.1 7.9-2.1-0.5-2.1 4.1-2.1-2.7-2.1 1.8-2.1-2.6-2.1-0.2-2.1 1.6-2.1 4.1-2.1-0.1-2.1-1.8-2.1 2.2-2.1-0.1-2.1 2-2.1 1-2-14.9-2.1 15.1-2.1 0.7-2.1-1.7-2.1 3.4-2.1-0.5-2.1 2.4-2.1-0.5-2.1-1.8-4.2 3.5-2.1 0.5-2.1-2-2.1 3.6-2.1-0.5-2.1 1.8-2-22-2.1 17.7-2.1 6.4-2.1-2.9-2.1 3.7-2.1-6.2-2.1 7.4-2.1 1.1-2.1-4-2.1 2.9-2.1-2.3-2.1 3.7-2.1-1.9-2.1 0.4-2.1 1.5-2.1 4.2-2.1 0.2-2-0.4-2.1 1.4-2.1-0.2-2.1 1.8-2.1-4-2.1 3.1-2.1-3-2.1-20.8-2.1 19.8-2.1 2.1-2.1-1.4-2.1-16.5-2.1 21.9-2.1-0.9-2.1 1.1-2.1-3.7-2.1 2.5-4.1 2.3-2.1 1.8-2.1-2.3-2.1 1.2-2.1-7.4-2.1 7.5-4.2 1.7-2.1-0.7-2.1 0.4-2.1-7.5-2.1 4.7-2.1 3.6-4.2 3.3-2.1-2.9-2 1.1-2.1-16.3-2.1 16.7-2.1-0.8-2.1 3.3-2.1-1.7-2.1 0.3-2.1 2.3-2.1-4.9-2.1 4.5-2.1-1.4-4.2 1.8-2.1-13.9-2.1 8.7-2.1 6.4-2-5.5-2.1 6.4-2.1-8.1-2.1 0.1-1 3.5-1.1 6.6-4.2-4.8-2.1 2-2.1-0.2-2.1-2.3-2.1 0.4-2.1-5.8-2.1 1.8-2.1 3.7-2.1 2.5-2.1-1.4-2.1-0.1-2 1.6-2.1-2.4-2.1 2.3-2.1-1.5-2.1-4-2.1 4.2-2.1-4.2-2.6 1.6-1.6 1.8-2.1-0.9-2.1-2.9-2.1 3.5-2.1-1-2.1 2.4-2.1-11-2.1 11.8-2.1-2.9-2 0.2-4.2-14.5-2.1 14.2-2.1-3.3-2.1 1.7-2.1 0.5-2.1-2.1-2.1 1.3-2.1-4.6-2.1 3.5-2.1-2.4-2.1 2.5-2.1-4.8-2.1 2.5-4.1 1.9-2.1-1.8-2.1 3.3-2.1-3.9-2.1-15-2.1 15-6.3 1.3-2.1-0.8-2.1-3.1-2.1-0.8-2.1 0.7-6.3 0.4-2.1-11.1-2-15.2-2.1 24.7-2.1-2.7-4.2 2.9-2.1-4.8-2.1 3-2.1-0.6-2.1 0.6-2.1 1.9-2.1-9.6-2.1 3.7-2.1-5.1-2.1 8.1-4.2-3.8-2.1 0.7-2-0.6-2.1 1.9-2.1-3.5-2.1 1.8-2.1-3.7-2.1 4.2-4.2-2.6-2.1 1-2.1-0.5-2.1-1.7-2.1-8-2.1 5.5-2.1 0.8-2.1-0.2-2.1-2.1-2-5.3-4.2 5.9-2.1-3.5-2.1 1.3-2.1 0.2-2.1-1.6-2.1-9.3-2.1 7.6-2.3-3.1-1.9-17.7-2.1 16.5-2.1-5.5-2.1 3.9-4.2 2.8-2.1 0.1-2 1.1-4.2-4-2.1 2.5-2.1-4.1-2.1 3-2.1-3.4-2.1-6.5-2.1 5.6-2.1-12.9-2.1 14.1-2.1-2.3-2.1 0.1-2.1-6.2-2.1 7.4-2.1-11.8-2 8.2-2.1 1.8-2.1-2.3-2.1-0.7-2.1-3.6-2.1 4.8-2.1-2.7-2.1-0.5-2.1 1.8-2.1-2.5-2.1-0.4-2.1-2.2-2.1 0.5-2.1-3.7-2.1 2.7-2.1 0.3-2.1 1.3-2-7.1-2.1 4.4-2.1-0.4-2.1 1.3-2.1-3.1-2.1 0.6-2.1 4.2-2.1-4.6-2.1 0.6-2.1-2.5-2.1 0.5-2.1-11.6-2.1 12.8-2.1-7.8-2.1 6.2-4.2-1.1-4.1 0.7-2.1 1.2-2.1-4-2.1 1.1-2.1 0.2-4.2-1.8-4.2 2.8-2.1 0.3-2.1-2.9-0.9-5.6-1.2-14-1.2 14-0.9 5.3-2.1-2-2.1 0.3 0-221.3 2.1 0.1 2.1 14.4 2.1 2.1 0.7-9.6 1.4-8.9 2.1-3.3 2.1 0.2 2.1 5.5 2.1-2.5 4.2-1.9 2.1 0.5 2.1-1 2.1-2.4 2.1 2.1 2.1 0.1 2 2.7 4.2-6.2 2.1 8.2 4.2-5.9 2.1-0.9 2.1 0.5 2.1-3.4 2.1 0.5 2.1-4.4 4.2 8.3 2.1-6.6 2.1-0.2 4.2 2 2-4.7 2.1 1.7 2.1 0.3 2.1 2.4 2.1-3.8 2.1 0.3 2.1 10.9 2.1-13.6 2.1-2.6 2.1 1.4 2.1-0.1 2.1-2.5 2.1 4.3 2.1-4.2 2.1 0.3 2.1-3 2.1 1.9 2-1 2.1-3.7 2.1 21.4 2.1-19.1 2.1-1.4 2.1-2.6 2.1 2 2.1 5.8 2.1-8.1 2.1-0.4 2.1-3.2 2.1 3.8 2.1-5.8 2.1 2.3 2.1-2.1 2.1 10.5 2-11 2.1-0.9 2.1 1.6 2.1 0.8 2.1-3.6 2.1 1.1 4.2-4.2 2.1 0.2 2.1 7.1 2.1-9.3 2.1-1.2 2.1-0.6 2.1 0.6 2.1 4.3 2.1-4.4 2.1-2.7 2 0.2 2.1-2 2.1-0.6 2.1 0.7 2.1 4.7 2.1-7.5 2.1 0.7 2.1-3.4 4.2 2z"/>
<path fill="#469ef8" stroke="#469ef8" d="M1387.3 1228.6l0.2-0.3 2.1 8.8 2.1-5.9 2.1 6.2 2.1-12.8 2.1 3 2.1 7.3 2.1-7.8 2.1 3.1 2.1 14.6 1.4-16.2 0.7-2 2.1 1.9 2.1-4.3 2.1 1.2 2 9.8 2.1-13.2 2.1-0.4 2.1 1.1 2.1-1 2.1 2 2.1-1.4 2.1-3.1 2.1-1.1 2.1 0.4 2.1-0.4 2.1 3.5 2.1-3.5 2.1 0.7 2.1-3.1 2.1 2.8 2.1 8.7 2-9.6 2.1 9.7 2.1-13.2 2.1 2.8 2.1 1 2.1-2 2.1 0.7 2.1-1.4 2.1 0.7 2.1-1.5 4.2 2 2.1-2.5 2.1 17.6 2.1-15.5 2.1 29.3 2-31.6 2.1-2.3 2.1 3.5 2.1-1.9 2.1 1.4 2.1-1.5 2.1 1 2.1-0.1 2.1 3.3 2.1-2.1 2.1 0 2.1-1.5 2.1 3.1 2.1-4.3 2.1-1.1 2.1 1.4 2.1-1.7 2 1.6 6.3-1.5 2.1 6.4 2.1-2.4 2.1 18.1 2.1-20.6 4.2-0.9 2.1 1 2.1-0.9 2.1-2.5 2.1 0.4 2.1 1.6 2.1 9.4 2.1-8.5 2-0.4 2.1 6.4 2.1 17.1 2.1-22.5 2.1 0.3 2.1 1.2 2.1-0.9 2.1 0.3 2.1-0.9 2.1 1.8 2.1 0.9 2.1-1.6 2.1 2.3 2.1-1.6 2.1 0.2 4.1 2 2.1-3.1 2.1 12.1 2.1-8.5 2.1-3.1 2.1 14 2.1-10.4 2.1 9.5 2.1-10 2.1-0.5 2.1 3.1 2.1 9 2.1 6.3 2.1-15.5 2.1-1.9 4.2 2.9 2 0.4 4.2-0.7 2.1 1.8 2.1-1.7 2.1 25.2 2.1-18.1 2.1-1.7 2.1 2.3 2.1-1.9 2.1 1.4 2.1 4.1 2.1-9.1 2.1-0.2 2.1 1.3 2.1 0 2.1 0.7 2-0.6 2.1 1.5 2.1 4.5 2.1 1.6 2.1-0.5 2.1-1.4 2.1 4.3 2.1-3.2 2.1 3.4 2.1-4.4 2.1 1.3 2.1 2.3 2.1-1 2.1 2.7 2.1-2.4 2.1 0.1 2.1 25.8 2-23.7 2.1 1.7 2.1-0.4 2.1 2.6 2.1-2 2.1 0.7 2.1 1.1 2.1 2.4 2.1 14.9 2.1-17.3 2.1 1.8 2.1-0.4 2.1 3 2.1-2.2 2.1 1.1 2.1 0.3 2-3 2.1 3.1 2.1 2.2 2.1 13.9 2.1-12 2.1-1.8 2.1 0.1 2.1 4.2 2.1-1.5 2.1 2.7 2.1-3.1 2.1 2 2.1-2.6 2.1 1.5 2.1 2.2 1.3 8.8 0.8 14.6 0.7-14.6 1.4-10.9 4.1 2.4 2.1 16.1 2.1-6.4 2.1-1.1 2.1 0.9 2.1-5.8 2.1 1.9 2.1-0.3 2.1 2.7 2.1-4.2 2.1 12.1 2.1-12.5 2.1 0.3 2.1 4.9 2.1-1.4 2 0.3 4.2 2.7 2.1-1.2 2.1 0.6 2.1-0.1 2.1 2.5 2.1 0.8 4.2 0.5 2.1 0.9 2.1-0.1 2.1 12.5 2.1-10.3 2.1-0.5 2.1 0.8 2.1 21.9 2-18.4 2.1-1.2 2.1 24.1 2.1-18.2 2.1-0.5 2.1 0.2 2.1 3.2 2.1 6.9 2.1-8.3 2.1-1.6 2.1 2.5 2.1-2 2.1 1.5 2.1 6.9 2.1 0.6 2.1-6.4 2.1 0.1 2 5.5 2.1-4.4 2.1 0.4 2.1 9.3 2.1-5.7 2.1-3.5 2.1-1 2.1 1 4.2 0.5 2.1 0.8 2.1 1.5 1.2 6.3 0.9 9.3 0.8-9.3 1.3-7.9 2.1 1.8 2.1 0.2 2.1-2.7 4.1 3 2.1-0.3 2.1 1.8 0.8 4.1 1.3 18.9 1.2-18.9 0.9-5.9 2.1 8 2.1-5.9 2.1-0.5 2.1-3.5 2.1 7.7 2.1 0.4 2.1-2.7 2.1-1.6 2.1-0.2 0 214.3-2.1-0.4-2.1-5.5-2.1 6.7-2.1-0.5-2.1 2.1-2.1-4.9-2.1-0.9-2.1-9.7-2.1 10.2-2.1-0.6-2.1-1.4-2.1 2.3-2.1-0.4-2.1 1.7-2 0.4-2.1-11.8-2.1 8.6-2.1 1.4-2.1-17.8-2.1 6.3-2.1 10.3-2.1-0.2-2.1 0.8-2.1-0.6-2.1 0.9-2.1-1.4-2.1-4.2-2.1-6.9-2.1 9.9-2.1-6.9-2.1 1.7-2-18.3-2.1 23.4-2.1-7.2-2.1 7.1-2.1 1-2.1-5.5-2.1 4.5-2.1-22.4-2.1 22.3-2.1 0.9-2.1-0.3-2.1 1.3-4.2-0.9-1.3-24.6-0.8-42.2-0.6 42.2-1.5 31.5-2.1-1.9-2 2.6-2.1 0.4-2.1 0.2-2.1-0.6-2.1-1.3-2.1 3.2-4.2 0.1-6.3 1-2.1 1.8-2.1 0.4-2.1-12.5-2.1 11.6-2.1 1.6-4.1 0.6-2.1-1.1-2.1 4.3-2.1 0.8-2.1-6.3-2.1 5.3-2.1-3-2.1 2.1-2.1-1-2.1-5.5-2.1 10.3-2.1-7.4-2.1 7.4-2.1-14.4-2.1-5.4-2.1 22.5-2 1-2.1-10.6-2.1 9.1-2.1-1.7-2.1 5.2-2.1-2.6-2.1 1.8-2.1-3-2.1-2-2.1 3.4-2.1 4.5-2.1-0.1-2.1-1.9-2.1 1.9-2.1 0.2-2.1 2-2.1 0.3-2-16.7-2.1 17.4-2.1 0.6-2.1-1.7-2.1 3-2.1-0.5-2.1 2.3-2.1-0.6-2.1-1.5-4.2 3.1-2.1 0.5-2.1-1.8-2.1 3.5-2.1-0.5-2.1 1.7-2-24.9-2.1 19.9-2.1 7.4-2.1-3-2.1 3.8-2.1-7.3-2.1 8.5-2.1 1.1-2.1-4.5-2.1 3-2.1-2.2-2.1 3.7-2.1-1.9-2.1 0.3-2.1 1.6-2.1 4.8-2.1 0-2-0.5-2.1 1.5-2.1-0.2-2.1 2-2.1-4.7-2.1 3.7-2.1-3.5-2.1-18.7-2.1 17.6-2.1 2.2-2.1-1.4-2.1-19.3-2.1 25.1-2.1-0.8-2.1 1.1-2.1-3.6-2.1 2.1-4.1 2.6-2.1 1.8-2.1-2.2-2.1 1.1-2.1-9-2.1 9.2-2.1-0.4-2.1 2-2.1-0.6-2.1 0.1-2.1-8.5-4.2 9.7-4.2 3.3-2.1-2.9-2 1-2.1-24.6-2.1 25.2-2.1-0.9-2.1 2.9-2.1-1.4-2.1 0.3-2.1 1.8-2.1-4.9-2.1 4.6-2.1-1-4.2 1.2-2.1-15.7-2.1 10.4-2.1 6.2-2-5.4-2.1 6.1-2.1-11.1-2.1 5.4-2.1 7.3-4.2-3.5-2.1 1.3-2.1 0-2.1-1.7-2.1 0.4-2.1-12.8-2.1 8.5-2.1 3.7-2.1 2-2.1-0.9-2.1-0.1-2 1.1-2.1-1.7-2.1 1.7-2.1-1.1-2.1-3.7-2.1 3.9-2.1-3.5-4.2 2.8-2.1-0.6-2.1-5-2.1 5.3-2.1-0.6-2.1 1.8-2.1-13-2.1 13.6-2.1-2.1-2 0.2-2.1-7.3-2.1-9.6-2.1 16.6-2.1-3.1-2.1 1.7-2.1 0.5-2.1-2.1-2.1 1.3-2.1-5.2-2.1 4-2.1-2.1-2.1 2.4-2.1-11.5-2.1 9-4.1 2-2.1-1.8-2.1 3.4-2.1-3.9-2.1-19.1-2.1 19.1-6.3 1.3-2.1-0.9-2.1-3.1-2.1-1-2.1 0.7-6.3 0.5-2.6-17.7-1.5-7.5-2.1 23.3-2.1-2.7-4.2 3-2.1-4.8-2.1 3-2.1-0.6-2.1 0.7-2.1 1.7-2.1-11.1-2.1 5.3-2.1-6.7-2.1 10-4.2-3.9-2.1 0.7-2-0.5-2.1 1.8-2.1-3.5-2.1 1.8-2.1-3.7-2.1 4.3-4.2-2.6-2.1 1-2.1-0.5-2.1-1.7-2.1-9.2-2.1 6.4-2.1 1-2.1-0.3-2.1-2-2-6-4.2 6.8-2.1-3.8-2.1 1.4-2.1 0.2-2.1-1.6-2.1-10.3-2.1 8.5-2.1-2.9-2.1-26.5-2.1 25.7-2.1-7-2.1 5.4-4.2 2.6-4.1 1.3-4.2-3.8-2.1 2.2-2.1-3.8-2.1 3-2.1-3.4-2.1-6.7-2.1 5.9-2.1-17.5-2.1 18.6-2.1-2.3-2.1 0.2-2.1-7.7-2.1 8.5-2.1-15-2 11.6-2.1 1.9-2.1-2.4-2.1-0.7-2.1-4.4-2.1 5.6-2.1-2.7-2.1-0.4-2.1 1.7-2.1-2.5-2.1-0.5-2.1-2.3-2.1 0.3-2.1-4-2.1 3.1-2.1 0.3-2.1 1.5-2-7.5-2.1 4.9-2.1-0.8-2.1 1.7-2.1-3-2.1 0.7-2.1 3.9-2.1-4.6-2.1 0.5-2.1-2.3-2.1 0.7-2.1-12-2.1 13.2-2.1-9.3-2.1 7.1-4.2-0.8-2 0.2-4.2 1.8-2.1-4.4-2.1 1.4-2.1 0.2-4.2-2.1-4.2 3-2.1 0.4-2.2-3.8-2-23.2-2.1 23.3-2.1-2.4-2.1 0.4 0-210.9 2.1 0.1 2.1 17.2 2.1 3.9 1.5-19.1 0.6-4.3 2.1-3.3 2.1 0.3 2.1 6.4 2.1-3.4 4.2-2.3 2.1 0.6 2.1-0.9 2.1-2.2 2.1 2.2 2.1-0.2 2 3.4 4.2-6.8 2.1 8.9 2.1-2.8 2.1-3.9 2.1-0.9 2.1 0.5 2.1-3 2.1 0.2 2.1-4.2 4.2 8.8 2.1-7.2 2.1-0.1 4.2 1.8 2-4.5 2.1 1.8 2.1 0.4 2.1 2.7 2.1-4 2.1 0 2.1 14.4 2.1-17.2 2.1-2.6 2.1 1.2 2.1 0 2.1-2.3 2.1 5 2.1-5 2.1 0.3 2.1-2.9 2.1 1.8 2-0.7 2.1-3.5 2.1 24 2.1-21.5 4.2-4.3 2.1 2 2.1 7.1 2.1-9.4 2.1-0.4 2.1-3.6 2.1 4.3 2.1-6.3 2.1 2.5 2.1-2.3 2.1 9.6 2-10 2.1-0.7 2.1 1.5 2.1 0.8 2.1-3.7 2.1 1.1 4.2-4.1 2.1 0.1 2.1 8.6 2.1-11.1 2.1-1.1 2.1-0.6 2.1 0.5 2.1 6.7 2.1-6.5 2.1-2.8 2 0.2 2.1-1.9 2.1-0.6 2.1 0.7 2.1 5.7 2.1-8.7 2.1 3.9 2.1-6.8 2.1 1 2.1 2.3 2.1-5.3 2.1 3.4 2.1-3 2.1 1.7 2.1-4.7 2.1 2.1 2-0.4 2.1 0.7z"/>
<path fill="#5ac5fa" stroke="#5ac5fa" d="M1418.8 1228.6l0.1-0.8 2.1-0.5 2.1 1.2 2.1-1 2.1 2 2.1-1.4 2.1-3.2 2.1-1.2 2.1 0.4 2.1-0.4 2.1 4 2.1-4 2.1 0.7 2.1-3.1 2.1 2.9 2.1 9.6 2-10.5 2.1 10.3 2.1-14 2.1 3 2.1 1.1 2.1-2.2 2.1 0.7 2.1-1.5 2.1 0.8 2.1-1.6 4.2 2.2 2.1-2.6 2.1 19.8 2.1-17.7 2.1 29.4 2-31.8 2.1-2.4 2.1 3.7 2.1-2 2.1 1.5 2.1-1.7 2.1 1.1 2.1-0.1 2.1 3.9 2.1-2.5 2.1-0.1 2.1-1.6 2.1 3.6 2.1-4.9 2.1-1.2 2.1 1.5 2.1-1.7 2 1.6 6.3-1.6 2.1 7.3 2.1-2.7 2.1 19 2.1-22 4.2-0.9 2.1 1 2.1-0.8 2.1-2.7 2.1 0.4 2.1 1.5 2.1 11.2 2.1-10 2-0.6 2.1 7.6 2.1 17.3 2.1-23.7 2.1 0.3 2.1 1.2 2.1-0.9 2.1 0.4 2.1-1 2.1 2 2.1 1 2.1-1.7 2.1 2.3 2.1-1.8 2.1 0.3 4.1 2.1 2.1-3.3 1.6 9.5 0.5 11.5 0.9-11.5 1.2-5.7 2.1-3.2 2.1 16.3 2.1-12.4 2.1 10.2 2.1-10.8 2.1-0.6 2.1 3.4 2.1 9.8 2.1 4 2.1-14.1 2.1-1.9 4.2 3 2 0.4 4.2-0.7 2.1 1.8 2.1-1.6 2.1 27.4 2.1-20.9 2.1-1.3 2.1 2.1 2.1-1.7 2.1 1.2 2.1 8.4 2.1-13.3 2.1-0.1 2.1 1.2 4.2 0.5 2-0.4 2.1 1.2 2.1 4.2 2.1 1.5 2.1-0.5 2.1-1.3 2.1 4.1 2.1-3 2.1 3.6 2.1-4.9 2.1 1.3 2.1 2.4 2.1-1.1 2.1 2.5 2.1-2.2 2.1 0 1.7 21.3 0.4 9.6 0.4-9.6 1.6-18.9 2.1 1.6 2.1-0.4 2.1 2.7 2.1-2 2.1 0.7 2.1 1 2.1 2.5 2.1 16.1 2.1-18.5 2.1 1.8 2.1-0.5 2.1 3.2 2.1-2.4 2.1 1.1 2.1 0.3 2-3 2.1 3 2.1 2.3 2.1 13.4 2.1-11.6 2.1-1.7 2.1 0 2.1 4.5 2.1-1.7 2.1 2.9 2.1-3.5 2.1 2 2.1-2.5 2.1 1.4 2.1 2.2 0.5 4 1.6 27.6 1.3-27.6 0.8-6.1 4.1 2.3 2.1 19.1 2.1-7.8 2.1-1.4 2.1 1.5 2.1-7.7 2.1 2 2.1-0.3 2.1 3.2 2.1-5 2.1 11.9 2.1-12.3 2.1 0.4 2.1 5.1 2.1-1.2 2 0.4 4.2 2.3 2.1-1.1 4.2 0.6 2.1 2.3 2.1 0.8 2.1-0.1 4.2 1.3 2.1-0.1 2.1 14.7 2.1-12.1 2.1-0.4 2.1 0.8 2.1 20.6 2-17.4 2.1-1 1.5 14.8 0.6 15.6 1-15.6 1.1-8.6 2.1-0.6 2.1 0.1 2.1 3.9 2.1 8.5 2.1-10.5 2.1-1.5 2.1 2.4 2.1-2.1 2.1 1.7 2.1 7.5 2.1 2 2.1-8.5 2.1 0.2 2 6.4 2.1-5.2 2.1 0.3 2.1 12.3 1.9-8.3 2.3-4 2.1-1.2 2.1 1 2.1 0.4 2.1-0.1 2.1 1 2.1 1.3 2.1 19.9 2.1-21.5 2.1 1.8 2.1 0 2.1-2.3 2 1.1 2.1 1.7 2.1-0.4 2.1 1.8 2.1 29.9 2.1-31.7 2.1 11.1 2.1-8.8 2.1-0.6 2.1-3.6 2.1 9.8 2.1-1.5 4.2-4.2 2.1-0.3 0 203.3-2.1 0.2-2.1-6.7-2.1 8-2.1-0.7-2.1 2.6-2.1-5.1-2.1-0.6-2.1-13.9-2.1 14-2.1-0.3-2.1-1.1-2.1 1.9-2.1-0.5-2.1 1.7-2 0.1-2.1-13.3-2.1 10.5-2.1 1.3-2.1-20.6-4.2 19.3-2.1-0.1-2.1 0.8-2.1-0.7-2.1 1-2.1-1.7-2.1-4-2.1-8.7-2.1 11.4-2.1-8-2.1 2.2-2-18.4-2.1 24.3-2.1-8.8-2.1 8.9-2.1 1-2.1-8.5-2.1 7.5-1.7-18.3-0.4-35.4-0.5 35.4-1.6 18.1-2.1 0.6-2.1 0-2.1 1.4-4.2-1.1-1-19-1.1-49.7-0.8 49.7-1.3 26.4-2.1-1.8-2 2.6-4.2 0.5-2.1-0.6-2.1-1.7-2.1 4.2-4.2 0-6.3 1.1-2.1 1.8-2.1 0.5-2.1-14.1-2.1 13.2-2.1 1.4-4.1 0.6-2.1-1-2.1 4.2-2.1 0.9-2.1-7.1-2.1 6.1-2.1-2.8-2.1 1.8-2.1-1-2.1-6.4-2.1 10.9-2.1-8.2-2.1 8.4-1.4-9.8-0.7-7.8-2.1-1.4-2.1 21.7-2 0.8-2.1-11.6-2.1 10.2-2.1-2.8-2.1 6.3-2.1-2.6-2.1 1.8-4.2-7.1-4.2 10-2.1-0.1-2.1-2-2.1 1.7-2.1 0.5-2.1 2-2.1-0.5-2-18.4-2.1 19.8-2.1 0.6-2.1-1.9-2.1 2.9-2.1-0.5-2.1 2.4-2.1-0.7-2.1-1.4-4.2 3-2.1 0.4-2.1-1.5-2.1 3.2-2.1-0.6-2.1 1.5-2-28-2.1 22.5-2.1 8-2.1-2.7-2.1 3.5-2.1-7.8-2.1 8.9-2.1 1.1-2.1-4.8-2.1 3.1-2.1-2.1-2.1 3.7-2.1-2.1-2.1 0.3-2.1 1.7-2.1 5.3-4.1-0.6-2.1 1.5-2.1-0.3-2.1 2.3-2.1-5.4-2.1 4.2-2.1-3.9-2.1-16.5-2.1 15.3-2.1 2.3-2.1-1.3-2.1-22.2-2.1 28.2-2.1-0.5-2.1 1.1-2.1-3.6-8.3 6.4-2.1-2.2-2.1 1.1-2.1-10.5-2.1 10.7-2.1-1.5-2.1 3.2-2.1-0.7-2.1 0-2.1-9.7-4.2 11.2-4.2 3.5-2.1-3.1-2 0.9-2.1-24.4-2.1 25.1-2.1-0.9-2.1 2.9-2.1-1.6-2.1 0.5-2.1 1.9-2.1-5.5-2.1 5.3-2.1-1.1-4.2 1.2-2.1-18.3-2.1 12.1-2.1 7.2-2-6.5-2.1 7.2-2.1-15.5-2.1 10.7-2.1 6.4-4.2-3.6-2.1 1.4-2.1 0.1-2.1-1.9-2.1 0.5-2.1-20.3-2.1 15.2-2.1 4.2-2.1 2.3-2.1-1-2.1 0-2 1-2.1-1.7-2.1 1.9-2.1-1.2-2.1-4.3-2.1 4.5-2.1-3.7-4.2 2.9-2.1-0.6-2.1-7.4-2.1 7.7-2.1-0.6-2.1 2-2.1-16.1-2.1 16.6-2.1-2.2-2 0.3-2.1-7.4-2.1-12.3-2.1 19.3-2.1-3.1-2.1 1.7-2.1 0.5-2.1-2.2-2.1 1.5-2.1-5.9-2.1 4.4-2.1-1.7-2.1 2.3-2.1-18.2-2.1 15.6-2.1 0.7-2 1.3-2.1-1.9-2.1 3.6-2.1-3.9-2.1-20.1-2.1 20-6.3 1.3-2.1-0.8-2.1-3.3-2.1-1.1-4.2 1.1-4.2 0.3-2.1-15.1-2-9.2-2.1 22-2.1-2.7-2.1 1.3-2.1 1.9-2.1-4.8-2.1 2.9-2.1-0.5-2.1 0.7-2.1 1.6-2.1-13.6-0.5 2.8-1.6 5-2.1-8.1-2.1 11.7-4.2-4-2.1 0.7-2-0.5-2.1 1.8-2.1-3.5-2.1 1.9-2.1-3.9-2.1 4.5-4.2-2.6-2.1 1.1-2.1-0.6-2.1-1.7-2.1-10-2.1 7.1-2.1 0.9-2.1-0.2-2.1-1.8-2-6.5-4.2 7.5-2.1-3.5-2.1 1.1-2.1 0.4-2.1-1.4-2.1-12.1-2.1 9.9-2.1-3.6-2.1-24.6-2.1 24.5-2.1-8.4-2.1 6.9-4.2 2.3-4.1 1.7-4.2-3.8-2.1 1.9-2.1-3.4-2.1 3-2.1-3.4-2.1-7-2.1 6.3-1.7-15.7-0.4-6.7-0.3 6.7-1.8 16.7-2.1-2.3-2.1 0.1-2.1-9.1-2.1 9.5-2.1-16.7-2 13.6-2.1 1.9-2.1-2.4-2.1-0.8-2.1-5.1-2.1 6.3-2.1-2.6-2.1-0.3-2.1 1.5-2.1-2.4-2.1-0.6-2.1-2.4-2.1 0.1-2.1-4.2-2.1 3.3-2.1 0.5-2.1 1.5-1.6-6.1-0.4-31.1-0.7 31.1-1.4 3.6-2.1-1.1-2.1 2.2-2.1-3.1-2.1 0.9-2.1 3.6-2.1-4.5-2.1 0.4-2.1-2.1-2.1 0.8-2.1-12.4-2.1 13.5-2.1-11-2.1 7.1-2.1 1.4-2.1-0.9-2 0.3-2.1 0.8-2.1 1.3-2.1-6.6-2.1 3.1-2.1 0.2-2.1-1.6-2.1-1-2.1 0.8-2.1 2.8-2.1 0.6-2.1-3.8-2.1-28.5-2.1 27.1-2.1-1.9-2.1 0.3 0-199.5 2.1 0 2.1 19.3 2.1 5.8 2.1-28.2 2.1-3.4 2.1 0.5 2.1 8.7 2.1-5.8 4.2-2.6 2.1 0.6 2.1-0.8 2.1-2.1 2.1 2.3 2.1-0.3 2 4.2 2.1-4.5 2.1-3 2.1 10.4 4.2-8.4 2.1-0.8 2.1 0.5 2.1-2.8 2.1 0.1 2.1-4.1 2.1 3.7 2.1 5.7 2.1-7.9 2.1-0.1 4.2 1.6 2-4.2 2.1 2 2.1 0.5 2.1 3 2.1-4.4 2.1-0.1 1.6 11.1 0.5 11.2 0.4-11.2 1.7-14.2 2.1-2.5 2.1 1 2.1 0.2 2.1-2.2 2.1 5.6 2.1-5.8 2.1 0.4 2.1-2.9 2.1 1.7 2-0.4 2.1-3.4 2.1 25.5 2.1-22.5 2.1-3.1 2.1-2.2 2.1 2 2.1 9.1 2.1-11.3 2.1-0.5 2.1-3.3 2.1 4.3 2.1-6.3 2.1 2.6 2.1-2.6 2.1 8.9 2-9 2.1-0.7 2.1 1.5 2.1 0.7 2.1-3.6 2.1 1 4.2-3.9 2.1 0 2.1 10 2.1-13 4.2-1.5 2.1 0.4 2.1 9.1 2.1-8.5 2.1-2.9 2 0.1 2.1-1.8 2.1-0.7 2.1 0.8 2.1 6.7 2.1-10 2.1 7.2 2.1-10.2 2.1 1 2.1 3.6 2.1-6.4 2.1 3.2 2.1-2.9 2.1 1.7 2.1-4.8 2.1 2.2 2-0.4 2.1 0.8 2.1-1.4 2.1-2.3 2.1 10.5 2.1-7.5 2.1 7.4 2.1-13 2.1 2.4 2.1 6.7 2.1-7.1 2.1 2.5 1.9 23.9 0.2 12.8 0.1-12.8 2-26.7 2.1 1.5 2.1-3.5 2.1 0.9 2 10.7z"/>
<path fill="#6decfc" stroke="#6decfc" d="M1445 1228.6l1.2-1.7 2.1 2.9 2.1 10.4 2-11.2 2.1 10.7 2.1-14.6 2.1 3.1 2.1 1.2 2.1-2.3 2.1 0.7 2.1-1.6 2.1 0.8 2.1-1.6 4.2 2.3 2.1-2.6 2.1 22 2.1-19.8 2.1 29.4 2-32 2.1-2.6 2.1 4 2.1-2.1 2.1 1.6 2.1-1.8 2.1 1.2 2.1-0.2 2.1 4.6 2.1-3.1 2.1-0.2 2.1-1.6 2.1 4.1 2.1-5.5 2.1-1.3 2.1 1.6 2.1-1.7 2 1.6 6.3-1.7 2.1 8.2 2.1-3 2.1 20 2.1-23.6 4.2-0.7 2.1 0.9 2.1-0.7 2.1-3 2.1 0.6 2.1 1.3 2.1 12.7 2.1-11.3 2-0.6 2.1 8.6 2.1 17.7 2.1-25 2.1 0.2 2.1 1.4 2.1-1.1 2.1 0.6 2.1-1.1 2.1 2.1 2.1 1.3 2.1-2 2.1 2.5 2.1-2.1 2.1 0.5 2.1 1.4 2 0.8 2.1-3.6 0.7 4 1.4 29.1 2.1-29 2.1-3.4 2.1 18.6 2.1-14.5 2.1 10.9 2.1-11.5 2.1-0.7 2.1 3.4 2.1 10.8 2.1 1.8 2.1-13.1 2.1-1.7 4.2 2.8 2 0.3 4.2-0.7 2.1 1.7 2.1-1.4 2.1 31 2.1-24.6 2.1-1.1 2.1 2.2 2.1-1.9 2.1 1.2 2.1 13 2.1-18.4 2.1 0 2.1 1.1 6.2 0.3 2.1 0.9 2.1 4.4 2.1 1.6 4.2-1.9 2.1 4.1 2.1-2.9 2.1 3.7 2.1-5.3 2.1 1.3 2.1 2.5 2.1-1.1 2.1 2.2 2.1-2.1 2.1 0.1 1.3 16.4 0.8 19.4 0.8-19.4 1.2-13.8 2.1 1.6 2.1-0.4 2.1 2.6 2.1-1.9 2.1 0.7 2.1 0.9 2.1 2.6 2.1 16.6 2.1-19 2.1 1.8 2.1-0.5 2.1 3.2 2.1-2.5 2.1 1.2 2.1 0.2 2-3.1 4.2 5.4 2.1 12.8 2.1-11 2.1-1.8 2.1 0.1 2.1 4.8 2.1-2.1 2.1 3.3 2.1-4 2.1 2.1 2.1-2.5 2.1 1.2 1.3 1.5 0.8 1.2 2.1 34.3 2.1-36.7 2 0.8 2.1 1.4 2.1 21.9 2.1-9.1 2.1-1.8 2.1 2.1 2.1-9.1 2.1 1.7 2.1-0.1 2.1 3.7 2.1-5.6 2.1 11.3 2.1-11.6 2.1 0.3 2.1 5.1 2.1-1 2 0.3 4.2 2.1 2.1-1 4.2 0.6 2.1 2.2 2.1 0.7 2.1-0.2 4.2 1.2 2.1 0 2.1 16.7 2.1-13.8 2.1-0.3 2.1 0.8 2.1 19.3 2-16.4 2.1-0.8 1 9.9 1.1 26.9 2.1-30.3 2.1-0.7 2.1 0.1 1.9 4 0.2 54.9 0.5-24.8 1.6-18.8 2.1-13.3 2.1-1.5 2.1 2.2 2.1-2.1 2.1 1.8 2.1 7.7 2.1 5.1 2.1-11.7 2.1 0.3 2 8.4 2.1-6.9 2.1 0.4 2.1 14.8 2.1-10.9 2.1-4.2 1.6-1.4 0.5-0.3 4.2 1.9 2.1-0.5 4.2 2.8 2.1 23.4 2.1-25.5 2.1 2.4 2.1-0.1 2.1-2.6 2 1.1 2.1 2.1 2.1 0.2 2.1 1 2.1 29.2 2.1-31.1 2.1 13.6 2.1-11.2 2.1-0.3 2.1-4.2 2.1 11.5 2.1-3.5 2.1-1.9 2.1-1.3 2.1-0.3 0 191.3-2.1 0.7-2.1-7.8-2.1 9.3-2.1-0.9-2.1 2.7-2.1-5-2.1-0.2-2.1-18.7-2.1 18.4-2.1 0.1-2.1-1-2.1 1.6-2.1-0.6-2.1 1.7-2-0.3-2.1-14.6-2.1 12.3-2.1 1.2-1.6-16-0.5-9.9-1.3 9.9-2.9 14.7-2.1-0.2-2.1 0.9-2.1-0.7-2.1 1-2.1-2-2.1-3.8-2.1-10.5-2.1 12.8-2.1-9-2.1 2.7-2-18.2-2.1 24.8-2.1-10.3-2.1 10.8-2.1 1-2.1-11.5-2.1 10.5-1.2-13-0.9-44.3-1 44.3-1.1 12.5-4.2 0.6-2.1 1.6-4.2-1.2-0.7-13.5-1.4-57.2-1.1 57.2-1 21.3-2.1-1.6-2 2.4-4.2 0.2-2.1-0.5-2.1-2-2.1 4.9-4.2 0-2.1 0.6-4.2 0.5-2.1 1.8-2.1 0.8-2.1-15.5-2.1 14.5-2.1 1.4-4.1 0.7-2.1-1.1-2.1 4.3-2.1 1-2.1-8.4-2.1 7.3-2.1-2.6-2.1 1.6-2.1-1-2.1-6.5-2.1 10.7-2.1-9.3-2.1 9.7-2.1-20.8-2.1 2.5-2.1 21-2 0.7-2.1-13.1-2.1 11.8-2.1-4-2.1 7.4-2.1-2.6-2.1 1.9-2.1-3.7-2.1-5.6-2.1 6.9-2.1 5.2-2.1-0.1-2.1-2-4.2 2.2-2.1 2-2.1-1.2-2-17.9-2.1 19.8-2.1 0.7-2.1-2.1-2.1 2.9-2.1-0.5-2.1 2.4-4.2-2-4.2 2.9-2.1 0.3-2.1-1.3-2.1 3.2-2.1-0.7-2.1 1.3-1.7-22.6-0.3-10.6-0.6 10.6-1.5 16.3-2.1 9-2.1-2.5-2.1 3.2-2.1-8.6-2.1 9.7-2.1 1-2.1-5.1-2.1 3.2-2.1-1.7-2.1 3.2-2.1-2.1-2.1 0.4-2.1 1.6-2.1 5.6-4.1-0.8-2.1 1.6-2.1-0.3-2.1 2.5-2.1-6.1-2.1 4.8-2.1-4.4-2.1-14.4-2.1 13.2-2.1 2.3-2.1-1.3-2.1-24.9-2.1 31.3-2.1-0.4-2.1 1.1-2.1-3.5-2.1 1.3-2 2.1-2.1 1-2.1 1.9-2.1-2.1-2.1 1-2.1-12.3-2.1 12.6-2.1-2.8-2.1 4.5-4.2-0.9-2.1-10.9-2.1 5.3-2.1 7.4-4.2 3.6-2.1-3.2-2 0.8-2.1-24.3-2.1 25.1-2.1-1-2.1 3-2.1-1.7-2.1 0.6-2.1 2-2.1-6.2-2.1 6.1-2.1-1.2-4.2 1.2-2.1-21.8-2.1 14.6-2.1 8.4-2-7.8-2.1 8.5-2.1-21.3-2.1 17.3-2.1 5.6-4.2-3.7-2.1 1.3-2.1 0.3-2.1-2.1-2.1 0.6-2.1-20.3-2.1 14.4-2.1 4.7-2.1 2.5-2.1-0.9-2.1-0.1-2 1-2.1-1.7-2.1 2-2.1-1.3-2.1-4.7-2.1 5.1-2.1-3.9-4.2 2.9-2.1-0.6-2.1-9.9-2.1 10.2-2.1-0.5-2.1 2-2.1-18.4-2.1 18.9-2.1-2.3-2 0.3-2.1-7.4-1.4-8.6-0.7-7.3-2.1 22.9-2.1-3.2-2.1 1.9-2.1 0.4-2.1-2.2-2.1 1.5-2.1-6.5-2.1 4.9-2.1-1.4-2.1 2.2-1.5-13.2-0.6-16.9-0.6 16.9-1.5 10.5-2.1 0.5-2 1.5-2.1-1.9-2.1 3.8-2.1-4.1-2.1-20.5-2.1 20.5-6.3 1.3-2.1-0.8-2.1-3.4-2.1-1.2-4.2 1.1-4.2 0.3-2.1-17.1-2-6.1-2.1 20.6-2.1-2.6-2.1 1.2-2.1 2-2.1-4.8-2.1 2.9-2.1-0.4-2.1 0.7-2.1 1.4-0.9-5.4-1.2-13-2.1 12.8-2.1-9.4-2.1 13.2-4.2-4.1-2.1 0.7-2-0.4-2.1 1.8-2.1-3.4-2.1 1.8-2.1-3.6-2.1 4.2-4.2-2.4-2.1 1-2.1-0.6-2.1-1.5-2.1-11.1-2.1 8.2-2.1 0.8-2.1-0.2-2.1-1.6-2-7.3-4.2 8.4-2.1-3.5-2.1 1.1-2.1 0.5-2.1-1.3-2.1-13.9-2.1 11.3-2.1-4.2-2.1-22.8-2.1 23.4-2.1-9.8-2.1 8.4-8.3 4.1-4.2-3.9-2.1 1.5-2.1-3-2.1 3-2.1-3.4-2.1-7.2-2.1 6.6-1.3-11.3-0.8-15.9-0.8 15.9-1.3 12.3-2.1-2.3-2.1 0.1-2.1-10.7-2.1 10.7-2.1-16.5-2 13.7-2.1 1.8-2.1-2.4-2.1-0.9-2.1-5.8-2.1 7.1-2.1-2.6-2.1-0.3-2.1 1.5-2.1-2.4-2.1-0.7-2.1-2.5-2.1-0.1-2.1-5.2-2.1 4.2-2.1 0.7-2.1 1.6-0.3-1.3-1.7-41.1-2.1 40-2.1-23.8-2.1 25-2.1-3.5-2.1 1.2-2.1 3.6-2.1-5.3-2.1 0.6-2.1-2.1-2.1 0.9-2.1-12.1-2.1 13.5-2.1-12.4-2.1 1.6-2.1 8-2.1-1.2-4.1 0.7-2.1 1.9-2.1-8.3-2.1 4.9-2.1 0.2-2.1-1.8-4.2-2.2-2.1 4.5-2.1 0.7-2.1-3.6-1.5-20-0.6-15.7-0.6 15.7-1.5 17.9-2.1-1.5-2.1 0.2 0-187.6 2.1-0.1 2.1 20.9 2.1 11 0.4-11.3 1.7-24 2.1-4.2 2.1 0.9 2.1 10.8 2.1-7.4 4.2-3.6 2.1 0.9 2.1-0.9 2.1-2.5 2.1 4.1 2.1-1.8 2 5.4 2.1-5.7 2.1-3.2 2.1 12.2 4.2-10.2 2.1-1 2.1 0.7 2.1-2.7 2.1-0.1 2.1-3.9 2.1 3.5 2.1 7.1 2.1-9.2 2.1 0 2.1 1 2.1 0.3 2-3.9 2.1 2.1 2.1 0.7 2.1 3.2 2.1-4.6 2.1-0.4 0.9 6.3 1.2 25.1 1-25.1 1.1-9.5 2.1-2.5 2.1 0.9 2.1 0.3 2.1-2.1 2.1 6.3 2.1-6.6 2.1 0.5 2.1-3 2.1 1.7 2-0.1 2.1-3.4 2.1 25.9 2.1-22.4 2.1-4.2 2.1-2 2.1 2 2.1 10.9 2.1-13.1 2.1-0.5 2.1-3.2 2.1 4.4 2.1-6.3 2.1 2.9 2.1-3 2.1 8 2-7.9 2.1-0.5 2.1 1.4 2.1 0.6 2.1-3.5 2.1 0.8 4.2-3.7 2.1-0.2 2.1 11.6 2.1-15 4.2-1.3 2.1 0.2 2.1 10.3 2.1-9.3 2.1-2.9 2 0.1 2.1-1.8 2.1-0.7 2.1 0.8 2.1 7.7 2.1-11.2 2.1 10.4 2.1-13.6 2.1 1.1 2.1 4.9 2.1-7.7 2.1 3.1 2.1-2.8 2.1 1.8 2.1-5 2.1 2.2 2-0.2 2.1 0.7 2.1-1.2 2.1-2.4 2.1 12.2 2.1-9.1 2.1 8.7 2.1-13.7 2.1 2 2.1 6.4 2.1-6.8 2.1 2.3 1.5 19.2 0.6 31.8 0.5-31.8 1.6-21.7 2.1 1.4 2.1-3.3 2.1 0.7 2 12.2 2.1-15.2 2.1-0.5 2.1 1.1 2.1-0.9 2.1 1.9 2.1-1.5 2.1-2.6 2.1-1.1 2.1 0.3 2.1-0.3 2.1 3.8 2.1-3.8 2.1 0.6z"/>
<path fill="#77fbe6" stroke="#77fbe6" d="M1487.2 1228.6l0.8-1.1 2.1 3.9 2.1-2 2.1 1.7 2.1-1.9 2.1 1.2 2.1-0.1 2.1 5.2 2.1-3.8 2.1-0.3 2.1-1.5 2.1 4.4 2.1-5.9 2.1-1.3 2.1 1.7 2.1-1.7 2 1.6 6.3-1.8 2.1 8.8 2.1-3.3 2.1 21.2 2.1-25 2.1-0.1 2.1-0.5 2.1 0.7 2.1-0.5 2.1-3.2 2.1 0.6 2.1 1.2 2.1 14.2 2.1-12.5 2-0.7 2.1 9.4 2.1 18.3 2.1-26.3 2.1 0.1 2.1 1.4 2.1-1.1 2.1 0.6 2.1-1.1 2.1 2.2 2.1 1.3 2.1-1.9 2.1 2.2 2.1-2.1 2.1 0.6 2.1 1.4 2 0.6 2.1-3.4 2.1 38.6 0.4-9.9 1.7-24.9 2.1-3 2.1 21 2.1-17.1 2.1 12 2.1-12.8 2.1-0.5 2.1 3.3 2.1 12.3 2.1-0.5 2.1-12.4 2.1-1.5 4.2 2.8 2 0.2 4.2-0.7 2.1 1.7 2.1-1.2 1.6 21.3 0.5 14.4 0.7-14.4 1.4-15 2.1-0.9 2.1 2.4 2.1-2.1 2.1 1.2 2.1 15.6 2.1-21.6 2.1 0.1 2.1 1.2 8.3 1 2.1 4.7 2.1 1.6 4.2-1.9 2.1 3.9 2.1-2.8 2.1 4 2.1-5.7 2.1 1.2 2.1 2.6 2.1-1.2 2.1 2.1 2.1-2 2.1 0 0.9 11.6 1.2 29.3 1.3-29.3 0.7-8.7 2.1 1.6 2.1-0.5 2.1 2.7 2.1-2 4.2 1.6 2.1 2.7 2.1 17 2.1-19.4 2.1 1.7 2.1-0.4 2.1 3.3 2.1-2.8 2.1 1.3 2.1 0.2 2-3.1 4.2 5.4 2.1 12.2 2.1-10.3 2.1-1.9 2.1 0 2.1 5.4 2.1-2.5 2.1 3.6 2.1-4.5 2.1 2.3 2.1-2.6 2.1 1.2 2.1 4.3 2.1 34.5 2.1-38.4 2 0.7 2.1 1.4 2.1 24.7 2.1-10.6 2.1-2.1 2.1 2.7 2.1-10.5 2.1 1.3 2.1 0 2.1 4.2 2.1-6.1 2.1 10.7 2.1-10.9 2.1 0.3 2.1 4.9 2.1-0.7 2 0.2 4.2 1.8 2.1-0.8 2.1 0.2 2.1 0.4 2.1 2.1 2.1 0.7 2.1-0.5 4.2 1.2 2.1 0 2.1 18.4 2.1-15.1 2.1-0.1 2.1 0.7 2.1 17.9 2-15.3 2.1-0.6 1.9 35.1 0.2 13.4 0.3-13.4 1.8-27.9 2.1-0.9 2.1 0.1 1.5 28.7 0.6 33.6 1.2-33.6 0.9-10.8 2.1-15.4 2.1-1.8 2.1 2.7 2.1-2.7 2.1 6.1 2.1 3.3 2.1 8 2.1-13.6 2.1 0.4 2 9.2 2.1-7.5 2.1 0.3 2.1 16.4 2.1-12.8 2.1-4 2.1-2.2 2.1 1.1 2.1 1.8 2.1-1.5 4.2 2.7 1.7 20.3 0.4 9.4 0.3-9.4 1.8-22.4 2.1 2.4 2.1-0.3 2.1-2.1 2 0.8 2.1 2.1 2.1 1 2.1-0.3 2.1 28.5 2.1-30.1 2.1 15.6 2.1-13.4 2.1 0 2.1-4.1 2.1 12.3 2.1-5.4 2.1-1.5 4.2-1 0 96.8-0.4 11.4 0.4 13.6 0 57.5-2.1 1.3-2.1-8.9-2.1 10.5-2.1-1.1-2.1 2.8-2.1-4.8-2.1 0.1-1.3-10.8-0.8-14.9-0.8 14.9-1.3 10.1-2.1 0.4-2.1-0.8-2.1 1.4-2.1-0.7-2.1 1.6-2-0.6-2.1-15.7-2.1 13.7-2.1 1.2-1.1-10.6-1-20.9-2.1 18.6-2.1 11.5-2.1-0.1-2.1 0.9-2.1-0.7-2.1 1-2.1-2.3-2.1-3.6-0.9-4.4-1.2-10.2-1 10.2-1.1 6.4-2.1-9.6-2.1 2.6-2-18-2.1 25.5-1.4-6.9-0.7-6.6-0.7 6.6-1.4 7.7-2.1 0.9-1.5-8.6-0.6-11.8-0.7 11.8-1.4 7.6-0.7-7.6-1.4-53.2-1.5 53.2-0.6 6.9-4.2 0.7-2.1 1.6-2.1-0.9-2.1-0.4-2.1-78.3-1.3 70.4-0.8 16.1-2.1-1.3-2 2.1-4.2 0-2.1-0.4-2.1-2.3-2.1 5.7-4.2-0.1-2.1 0.7-4.2 0.2-2.1 1.7-2.1 1-2.1-16.5-2.1 15.6-2.1 1.2-4.1 0.4-2.1-0.7-2.1 4.4-2.1 1.3-2.1-9.6-2.1 8.3-2.1-2.6-2.1 1.5-2.1-1.2-2.1-6-2.1 10.4-2.1-10.6-2.1 11.3-2.1-24.2-2.1 6.6-2.1 20.1-2 0.6-2.1-14.7-2.1 13.5-1.1-2.4-1-8.7-0.6 8.7-1.5 5.8-2.1-2.6-2.1 1.9-2.5-5.1-1.2-30.1-0.5-27.2-1.4 57.3-2.8 8-2.1-0.2-2.1-2-4.2 2.2-2.1 2-2.1-1.9-2-17.1-2.1 19.5-2.1 0.8-2.1-2.3-2.1 2.9-2.1-0.6-2.1 2.5-4.2-2-4.2 2.8-2.1 0.3-2.1-1.1-2.1 3.1-2.1-0.8-2.1 1.3-1.3-17.4-0.7-21.2-1.2 21.2-0.9 10.3-2.1 9.9-2.1-2.2-2.1 3-2.1-9.5-2.1 10.5-2.1 0.9-2.1-5.4-2.1 3.4-2.1-1.6-2.1 3-2.1-2.2-2.1 0.6-2.1 1.5-2.1 5.9-4.1-1-2.1 1.5-2.1-0.2-2.1 2.6-2.1-6.6-2.1 5.1-2.1-4.6-2.1-12.4-2.1 11.2-2.1 2.2-2.1-1.1-2.1-28.7-2.1 35.1-2.1-0.2-2.1 1.1-2.1-3.3-2.1 0.5-2 2.6-2.1 1.1-2.1 2-2.1-2.1-2.1 0.9-2.1-14.3-2.1 14.7-2.1-4-2.1 5.7-4.2-1.1-2.1-12.6-2.1 5.7-2.1 9-4.2 3.7-2.1-3.4-2 0.9-2.1-24.2-2.1 25-2.1-1-2.1 2.9-2.1-1.7-2.1 0.7-2.1 2.1-2.1-6.9-2.1 6.9-2.1-1.3-4.2 1.2-1.2-11.7-0.9-14.4-1.5 14.4-2.7 13-2-8.9-2.1 9.6-1.5-13.7-0.6-19.6-0.7 19.6-1.4 10.6-2.1 4.7-4.2-3.7-2.1 1.3-2.1 0.4-2.1-2.3-2.1 0.7-2.1-19.5-2.1 12.8-2.1 5.2-2.1 2.8-2.1-1-2.1 0-2 0.9-2.1-1.7-2.1 2.2-2.1-1.4-2.1-5.2-2.1 5.6-2.1-4.1-4.2 2.9-2.1-0.5-1.9-10.7-0.2-7-0.2 7-1.9 10.9-2.1-0.4-2.1 2.2-2.1-18.2-2.1 18.6-2.1-2.4-2 0.4-2.1-7.6-0.6-3.5-1.5-16.2-1 16.2-1.1 10.6-2.1-3.2-2.1 1.9-2.1 0.4-2.1-2.2-2.1 1.6-2.1-7.2-2.1 5.4-2.1-1.1-2.1 2.1-0.9-8.3-1.2-31-1.3 31-0.8 5.5-2.1 0.4-2 1.6-2.1-1.9-2.1 3.9-2.1-4.1-2.1-21.1-2.1 21-6.3 1.3-2.1-0.8-2.1-3.4-2.1-1.4-4.2 1.3-4.2 0.2-2.1-19.1-2-3.1-2.1 19.3-2.1-2.4-2.1 1.1-2.1 2.1-2.1-4.4-2.1 2.5-2.1-0.3-4.2 1.8-2.1-23.2-2.1 18.1-2.1-11.1-2.1 14.9-4.2-3.9-2.1 0.7-2-0.4-2.1 1.7-2.1-3.3-2.1 1.8-2.1-3.5-2.1 3.7-2.1-0.7-2.1-1.2-2.1 1-2.1-0.7-2.1-1.5-2.1-12.2-2.1 9.2-2.1 0.8-2.1-0.2-2.1-1.3-2-8.2-4.2 9.4-2.1-3.5-4.2 1.6-2.1-1.2-2.1-15.7-2.1 12.6-2.1-4.8-2.1-20.9-2.1 22.2-2.1-11.4-2.1 10.1-4.2 1.8-4.1 2.4-4.2-4-2.1 1.3-2.1-2.7-2.1 3-2.1-3.4-2.1-7.4-2.1 7-0.8-7-1.3-25-1.3 25-0.8 7.8-2.1-2.2-2.1 0.1-2.1-13.3-2.1 12.9-2.1-16.3-2 13.7-2.1 1.9-2.1-2.4-2.1-1.1-2.1-7.4-2.1 8.8-2.1-2.6-2.1-0.3-2.1 1.5-2.1-2.6-2.1-1-2.1-3-2.1-0.3-2.1-5.6-2.1 4.6-2.1 0.8-2.1 2-1.4-26.1-0.6-21-0.7 21-1.4 23.5-1.8-23.5-0.3-34.8-0.4 34.8-1.7 24.8-2.1-3.5-2.1 1.4-2.1 3.5-2.1-6.1-2.1 1.1-2.1-1.8-2.1 1-2.1-11.7-2.1 13-2.1-13.3-2.1-4-2.1 14.6-2.1-1.5-2 0.7-2.1-0.3-2.1 2.2-2.1-9.9-2.1 6.8-2.1 0.2-2.1-2-2.1-1.3-2.1-2.9-2.1 6.2-2.1 0.9-2.1-3.5-1.1-14.6-1-28.3-1.1 28.3-1 11.7-2.1-1.1-2.1 0.2 0-175.8 2.1-0.1 4.2 39.3 0.8-24.7 1.3-18.4 2.1-4.1 2.1 1.1 2.1 12.3 2.1-9 4.2-4.1 2.1 1 2.1-0.8 2.1-2.3 2.1 6.1 2.1-3.9 2 5.9 2.1-6.4 2.1-3.1 2.1 13.2 2.1-7.2 2.1-4 2.1-1 2.1 0.8 2.1-2.9 2.1 0.3 2.1-4.9 2.1 3.5 2.1 8.5 2.1-10.7 2.1 0.1 2.1 1.2 2.1 0 2-3.8 2.1 2.3 2.1 0.8 2.1 4.3 2.1-5.7 2.1-0.6 2.1 36.9 1.5-35.5 0.6-4.9 2.1-2.4 4.2 1.1 2.1-2 2.1 7 2.1-7.4 2.1 0.6 2.1-3 2.1 1.6 2 0.2 2.1-3.3 2.1 26.2 2.1-22.3 2.1-5.1 2.1-2 2.1 2.1 2.1 12.7 2.1-14.8 2.1-0.6 2.1-3.1 2.1 4.5 2.1-6.2 2.1 3.2 2.1-3.5 2.1 7.2 2-6.9 2.1-0.3 2.1 1.2 2.1 0.5 2.1-3.2 2.1 0.6 4.2-3.4 2.1-0.3 2.1 13 2.1-17 4.2-1.2 2.1 0.1 2.1 11.2 2.1-9.8 2.1-3.1 2 0.1 2.1-1.8 2.1-0.7 2.1 0.9 2.1 9.1 2.1-12.9 2.1 12.3 2.1-15.6 2.1 1.1 2.1 6.2 2.1-8.9 2.1 3 2.1-2.6 2.1 1.8 2.1-5.1 2.1 2.2 2-0.2 2.1 0.8 2.1-1.1 2.1-2.6 2.1 14 2.1-10.7 2.1 10 2.1-14.5 2.1 1.7 2.1 6 2.1-6.4 2.1 2 1.2 14.6 0.9 36.1 0.9-36.1 1.2-16.7 2.1 1.3 2.1-3.1 2.1 0.4 2 13.8 2.1-16.8 2.1-0.4 2.1 1 2.1-0.8 2.1 1.9 2.1-1.6 2.1-2.5 2.1-1 2.1 0.2 2.1-0.4 2.1 4.2 2.1-4.2 2.1 0.6 2.1-0.9 2.1 1 2.1 11.9 2-12.6 2.1 11.8 2.1-15.4 2.1 2.9 2.1 1.2 2.1-2.2 2.1 0.6 2.1-1.4 2.1 0.6 2.1-1.4 4.2 2.1 2.1-2.3 2.1 24.3 2.1-22.3 2.1 28.7 2-31.1zM1860.8 1338.4l-0.4 40.7 0.4 6.8 0.2-6.8zM1188.6 1386.6l0 32.2 0.3-9.6z"/>
<path fill="#82fbc1" stroke="#82fbc1" d="M1351.1 1258.7l0.8-0.3 2.1 0.9 2.1 10.5 2.1-14.6 2.1 13.6 2.1-17 2.1 1.2 2.1 7 2.1-9.7 2.1 2.9 2.1-2.5 2.1 1.9 2.1-5.3 2.1 2.2 2 0 2.1 0.7 2.1-0.9 2.1-2.7 2.1 16.5 2.1-13.2 2.1 11.8 2.1-15.7 2.1 1.5 2.1 5.6 2.1-6.1 2.1 1.8 0.8 9.9 1.3 40.5 1.2-40.5 0.9-11.7 2.1 1.2 2.1-2.9 2.1 0.2 2 15.8 2.1-18.8 2.1-0.5 2.1 1 2.1-0.8 2.1 2 4.2-4.1 2.1-1 4.2-0.3 2.1 4.6 2.1-4.6 2.1 0.6 2.1 1.6 2.1-1.4 2.1 13.4 2-14 2.1 12.9 2.1-16.5 2.1 2.8 2.1 1.4 2.1-2.3 2.1 0.6 2.1-1.5 2.1 0.6 2.1-1.2 4.2 2 2.1-2 2.1 27.7 2.1-25.9 2.1 27.5 2.1-29.9 2-2.5 2.1 3.8 2.1-1.9 2.1 1.7 2.1-2 2.1 1.2 2.1-0.1 2.1 6.2 2.1-4.7 2.1-0.5 2.1-1.2 2.1 4.7 2.1-6.4 2.1-1.2 2.1 1.6 2.1 0.1 4.1-0.5 4.2-1.4 2.1 9.6 2.1-3.6 2.1 21.5 2.1-26 2.1 0.1 2.1-0.4 2.1 0.5 2.1-0.2 2.1-3.3 4.2 1.5 2.1 15.9 2.1-14 2-0.7 2.1 10.4 2.1 19.8 2.1-28.7 2.1-0.1 2.1 1.5 2.1-1.1 2.1 0.7 2.1-1.1 2.1 2.2 2.1 1.5 2.1-2.1 2.1 2 2.1-2.1 2.1 0.7 2.1 1.4 2 0.5 2.1-3.5 1.5 23.7 0.6 20.5 0.7-20.5 1.4-19.8 2.1-2.8 2.1 24.9 2.1-21 2.1 13.2 2.1-14.1 2.1-0.6 2.1 3.5 2.1 13.8 2.1-2.8 2.1-11.8 2.1-1.4 4.2 2.8 2 0.2 2.1-0.7 2.1-0.1 2.1 1.8 2.1-1.1 1.2 16 0.9 24.5 1.2-24.5 0.9-9.7 2.1-0.7 2.1 2.6 2.1-2.3 2.1 1.2 2.1 14.1 2.1-20.6 2.1 0.2 2.1 1.2 4.2 0.1 4.1 0.6 2.1 5.1 2.1 1.6 4.2-1.9 2.1 3.8 2.1-2.7 2.1 4.1 2.1-6.1 2.1 1.2 2.1 2.7 2.1-1.3 2.1 1.9 2.1-1.9 2.1 0.1 2.1 48 2-44.8 2.1 1.5 2.1-0.6 2.1 2.7 2.1-1.9 4.4 1.8 1.9 2.8 2.1 17.2 2.1-20 2.1 2 2.1-0.5 2.1 3.7 2.1-3 2.1 1.3 2.1 0 2-3.3 4.2 5.6 2.1 11.4 2.1-9.5 2.1-2 2.1 0.1 2.1 5.7 2.1-2.8 2.1 3.8 2.1-4.9 2.1 2.4 2.1-2.5 2.1 1.1 2.1 5.8 2.1 34.7 2.1-40 2 0.6 2.1 1.4 1.7 19 0.4 10.4 2.1-14.1 2.1-2.5 2.1 3.4 2.1-12 2.1 1.1 2.1 0 2.1 4.7 2.1-6.7 2.1 10.1 2.1-10.1 2.1 0.3 2.1 4.7 2.1-0.4 2 0.2 4.2 1.5 2.1-0.8 2.1 0.2 2.1 0.5 2.1 2 2.1 0.6 2.1-0.6 4.2 1.1 2.1 0.1 2.1 19.9 2.1-16.2 2.1-0.1 2.1 0.7 2.1 16.6 2-14.3 2.1-0.4 1.6 30.2 0.5 42 0.8-42 1.3-21.3 2.1-1.1 2.1 0.1 1.2 22.3 0.4 30.1 0.5 7.7 0.8-7.7 1.3-32.9 2.1-16.9 2.1-1.7 2.1 2.4 2.1-2.7 2.1 11.7 2.1-3.3 2.1 11.1 2.1-15.5 2.1 0.5 2 10 2.1-8.2 2.1 0.2 2.1 19.6 2.1-16.2 2.1-4 2.1-2.5 2.1 1.1 2.1 2.6 2.1-2.4 4.2 2.6 1.2 14.4 0.9 23 0.8-23 1.3-16.5 2.1 2.4 2.1-0.4 2.1-1.8 2 0.6 4.2 4 2.1-1.8 2.1 27.8 2.1-29 2.1 18.9 2.1-17 2.1 0.3 2.1-4 2.1 13.3 2.1-7.4 2.1-1 4.2-0.4 0 82.9-0.6 19.4 0.6 23.1 0 41.8-2.1 1.9-2.1-10.9-2.1 12.7-2.1-1.4-2.1 2.9-2.1-4.7-2.1 0.5-0.7-5.7-1.4-26.9-1.5 26.9-0.6 4.6-2.1 0.7-2.1-0.6-2.1 1.1-2.1-0.8-2.1 1.6-2-0.9-2.1-16.7-2.1 15.1-2.1 1.1-0.6-5.2-1.5-34.6-0.1 4.5-2 22.4-2.1 11.4-2.1-0.1-2.1 0.9-2.1-0.6-2.1 0.9-2.1-2.5-2.1-3.8-2.1-18.4-2.1 20.5-2.1-9.8-2.1 0.2-2-15.9-2.1 26.2-2.1-17.5-2.1 18.6-2.1 0.8-0.6-3.2-1.5-28.7-1.7 28.7-0.4 2.2-2.1-63.9-2.1 63.1-2.1-0.1-2.1 0.8-2.1 1.7-2.1-1-2.1-0.4-2.1-89.9-1.6 87.5-0.5 11-2.1-1.2-2 2-6.3-0.6-2.1-2.6-2.1 6.5-4.2-0.3-2.1 0.8-4.2 0.1-4.2 2.8-2.1-17.6-2.1 16.6-2.1 1-4.1 0.3-2.1-0.4-2.1 4.3-2.1 1.1-2.1-10.1-2.1 9.1-2.1-2.4-2.1 1.3-2.1-1.2-2.1-5.6-2.1 9.4-2.1-11.1-2.1 12.2-2.1-27.4-2.1 11.1-2.1 19.1-2 0.5-2.1-16.2-2.1 15-2.1-24.9-1.9 27.5-0.2 1-2.1-2.7-2.1 2.1-2.1-4.9-1.3-25.6-0.8-33.5-0.5 3.4-0.4 30.1-1.2 25.6-0.9 4.5-1.2 3.2-2.1-0.2-2.1-2-2.1 0.8-4.2 3.3-2.1-2.6-2-16.2-2.1 19.3-2.1 0.8-2.1-2.5-2.1 2.8-2.1-0.5-2.1 2.5-4.2-1.9-4.2 2.6-2.1 0.3-2.1-1-2.1 3.2-2.1-0.9-2.1 1.1-0.9-12.1-1.1-32.2-1.8 32.2-0.3 4.2-2.1 11-2.1-2.1-2.1 2.9-2.1-10.5-2.1 11.4-2.1 0.9-2.1-5.8-2.1 3.5-2.1-1.3-2.1 2.7-2.1-2.3-2.1 0.7-2.1 1.6-2.1 6.3-4.1-1.2-2.1 1.4-2.1-0.3-2.1 2.8-2.1-7.1-2.1 5.5-2.1-4.9-2.1-10.5-2.1 9.3-2.1 2-2.1-0.9-1.5-19.3-0.6-14.4-0.5 14.4-1.6 25.6-2.1 0-2.1 1.1-2.1-2.8-2.1-4.2-2 6.7-2.1 1.1-2.1 2.2-2.1-2.2-2.1 0.9-2.1-16.2-2.1 16.7-2.1-25.6-2.1 27.4-4.2-1.6-2.1-14-2.1 5.4-2.1 11.3-4.2 3.8-2.1-3.5-2 0.8-2.1-24-2.1 25-2.1-1.1-2.1 2.9-2.1-1.9-2.1 0.8-2.1 2.3-2.1-7.7-2.1 7.8-2.1-1.4-4.2 1.1-0.7-6.6-1.4-23.7-2.1 20.8-2.1 11-2-9.6-2.1 10.3-1-8.8-1.1-32.5-1.2 32.5-0.9 6.6-2.1 3.9-4.2-3.9-2.1 1.3-2.1 0.6-2.1-2.4-2.1 0.7-2.1-18.6-2.3 11.8-1.9 5-2.1 3-2.1-0.9-2.1 0-2 0.8-2.1-1.6-2.1 2.3-2.1-1.5-2.1-5.8-2.1 6.2-2.1-4.2-4.2 2.9-2.1-0.5-1-5.7-1.1-35.2-1.1 35.2-1 5.9-2.1-0.4-2.1 2.3-2.1-18-2.1 18.4-2.1-2.4-2 0.4-2.1-7.7-2.1-23.5-2.1 30.5-2.1-3.2-2.1 2-2.1 0.4-2.1-2.2-2.1 1.6-2.1-8.1-2.1 6.2-2.1-0.9-2.1 2.1-2.1-38.5-2.1 35.5-2.1 0.4-2 1.8-2.1-2.1-2.1 4.1-2.1-4.1-2.1-21.7-2.1 21.6-6.3 1.3-2.1-0.8-2.1-3.5-2.1-1.5-4.2 1.4-4.2 0.2-2.1-21.2-2 0-2.1 18.1-2.1-2.2-2.1 1-2.1 2.1-2.1-4.1-2.1 2.3-2.1-0.2-4.2 1.4-2.1-27.9-2.1 23.3-2.1-12.8-2.1 16.7-4.2-3.9-2.1 0.6-2-0.2-2.1 1.5-2.1-3.1-2.1 1.7-2.1-3.4-2.1 3.1-2.1 0-2.1-1.3-2.1 1-2.1-0.8-2.1-1.4-2.1-13.4-2.1 10.2-2.1 0.8-2.1-0.2-2.1-1.1-2-9.1-2.1 6-2.1 4.5-2.1-3.5-4.2 1.6-2.1-1-2.1-18.6-2.1 15-2.1-5.5-2.1-19-2.1 21-2.1-13.8-2.1 12.6-4.2 1.6-4.1 2.8-4.2-4.1-2.1 1-2.1-2.3-2.1 2.9-2.1-3.4-2.1-7.4-2.1 7.1-2.1-34.8-2.1 35.6-2.1-2.2-2.1 0.1-2.1-15.9-2.1 15.1-2.1-16-2 13.4-2.1 2.1-2.1-2.8-2.1-1.3-2.1-8.5-2.1 10.2-2.1-3.1-2.1-0.1-2.1 1.4-2.1-2.6-2.1-1.3-2.1-3-2.1-0.6-2.1-5.8-2.1 5-2.1 0.8-2.1 2.1-1.1-20.5-0.9-30.5-1.1 30.5-1 18.1-1.4-18.1-0.3-30.1-0.4-8.6-0.5 8.6-0.3 30.1-1.3 19.5-2.1-3.6-2.1 1.6-2.1 3.2-2.1-6.6-2.1 1.4-2.1-1.4-2.1 1.1-2.1-11.4-2.1 12.6-4.2-26.2-0.4 9.8-1.7 13.7-2.1-1.6-2 0.8-2.1-0.8-2.1 2.6-2.1-11.5-2.1 8.6-2.1 0.2-2.1-2.2-2.1-1.4-2.1-4.8-2.1 7.9-2.1 1.1-2.1-3.5-0.7-9.1-1.1-30.1-0.3-52.3-0.3 52.3-1.3 30.1-0.5 5.6-2.1-0.7-2.1 0.1 0-163.9 2.1-0.2 3.8 38.7 0.4 29.5 0.2-29.5 1-30.1 0.9-12.7 2.1-4.1 2.1 1.3 2.1 13.8 2.1-10.6 4.2-4.6 2.1 1.1 2.1-0.6 2.1-2.2 2.1 8.1 2.1-6.1 2 6.6 2.1-7.1 2.1-2.9 2.1 14 2.1-8.9 2.1-3.4 2.1-0.9 2.1 0.8 2.1-2.5 2.1 1.1 2.1-6 2.1 3.4 2.1 9.3 2.1-11.3 2.1 0.1 2.1 1.3 2.1-0.3 2-4 2.1 2.9 2.1 1.1 2.1 4.6 2.1-6.2 2.1-1 2.1 39.7 2.1-43.9 2.1-2.6 4.2 1.1 2.1-1.9 2.1 8.7 2.1-9.3 2.1 0.8 2.1-3.1 2.1 1.6 2 0.5 2.1-3.3 2.1 26.6 2.1-22.2 2.1-6.2 2.1-1.8 2.1 2.1 2.1 13.8 2.1-15.9 2.1-0.6 2.1-2.9 2.1 4.5 2.1-6.2 2.1 3.5 2.1-3.9 2.1 6.3 2-5.8 2.1-0.1 2.1 1.1 2.1 0.4 2.1-3 2.1 0.4 4.2-3.2 2.1-0.3 2.1 14.3 2.1-18.9 4.2-1 2.1 0 2.1 12 2.1-10.3 2.1-3.1 2 0 2.1-1.7zM1860.8 1327.8l-0.5 21.2-0.1 30.1 0.6 12.7 0.5-12.7 0-30.1zM1913.1 1389.7l-0.5 19.5 0.5 8.5 0.4-8.5zM1188.6 1369.3l-0.4 39.9 0.4 22.8 0.7-22.8-0.1-30.1z"/>
<path fill="#95fa9e" stroke="#95fa9e" d="M1362 1258.7l0.4-2.5 2.1 1.2 2.1 6.9 2.1-9.5 2.1 2.8 2.1-2.4 2.1 1.9 2.1-5.4 2.1 2.3 2 0 2.1 0.8 2.1-0.8 2.1-2.9 1.1 7.6 1 12.1 2.1-16.2 2.1 14.1 2.1-17.5 2.1 1.2 2.1 5.2 2.1-5.7 2.1 1.5 2.1 50.1 2.1-51.5 2.1 1.2 2.1-2.8 2.1 0 1.1 8.3 0.9 10.6 0.8-10.6 1.3-11.4 2.1-0.5 2.1 1.1 2.1-0.8 2.1 2 4.2-4 2.1-1.1 4.2-0.3 2.1 4.9 2.1-5 2.1 0.6 2.1 4.1 2.1-3.7 2.1 15 2-15.6 2.1 14 2.1-17.6 2.1 2.8 2.1 1.5 2.1-2.4 2.1 0.5 2.1-1.4 2.1 0.5 2.1-1.1 4.2 2 2.1-1.8 1.4 17.7 0.7 14.3 0.6-14.3 1.5-16 2.1 26.3 2-28.7 2.1-2.5 2.1 3.8 2.1-1.9 2.1 1.8 2.1-2 2.1 1.1 2.1 0 2.1 7.1 2.1-5.7 4.2-1.6 2.1 5.1 2.1-6.9 2.1-1.2 2.1 1.6 2.1 2.3 2-2.3 4.2-0.9 2.1-0.8 2.1 10.3 2.1-3.9 2.1 19.4 2.1-24.5 8.4 0.4 2.1-3.5 4.2 1.3 2.1 17.6 2.1-15.5 2-0.7 2.1 11.4 2.1 22 2.1-31.8 2.1-0.2 2.1 1.5 2.1-1.2 2.1 0.8 2.1-1.1 4.2 4 2.1-2.2 2.1 1.8 2.1-2.2 4.2 2.3 2 0.3 2.1-3.5 1.2 18.6 0.9 30.5 1.1-30.5 1-14.6 2.1-2.7 1.6 17.3 0.5 19.9 0.7-19.9 1.4-13.3 2.1 14.4 2.1-15.5 2.1-0.6 2.1 3.6 2.1 16.1 2.1-5.9 2.1-11.2 2.1-1.3 4.2 2.8 2 0.1 2.1-0.7 2.1-0.1 2.1 1.9 2.1-1 0.8 10.7 1.3 35.7 2.1-40 2.1-0.5 2.1 2.6 2.1-2.4 2.1 1.1 2.1 12.7 2.1-19.7 2.1 0.3 2.1 1.2 4.2 0 2 0.9 2.1-0.3 2.1 5.3 2.1 1.6 4.2-1.9 2.1 3.8 2.1-2.7 2.1 4.8 2.1-7 2.1 1.3 2.1 2.6 2.1-1.3 2.1 1.7 2.1-1.7 2.1 0.1 1.5 31.9 0.6 23.3 0.6-23.3 1.4-28.2 2.1 1.7 2.1-0.8 2.1 4.2 2.1-3.2 4.2 1.6 2.1 3.1 2.1 17 2.1-19.7 2.1 2 2.1-0.6 2.1 3.6 2.1-2.5 2.1 0.7 2.1-0.1 2-3.1 4.2 5.2 2.1 10.6 2.1-8.7 2.1-2 2.1 0.1 2.1 6 2.1-3.1 2.1 4 2.1-5.2 2.1 2.4 2.1-2.4 2.1 1 2.1 7.3 0.5 9.1-0.8 30.1 0.3 10.3 2.1-14.7 2.1-41.5 2 0.5 2.1 1.3 1.2 14 0.9 20.2 2.1-17.1 2.1-3.3 2.1 4.7 2.1-14.2 2.1 0.8 2.1 0.1 2.1 5.3 2.1-7.3 2.1 9.5 2.1-9.5 2.1 0.4 2.1 4.5 4.1 0 2.1 0.9 2.1 0.4 2.1-0.7 2.1 0 2.1 0.7 2.1 1.8 2.1 0.6 2.1-0.7 4.2 1 2.1 0.1 2.1 21.6 2.1-16.9 2.1 0 2.1 0.9 2.1 14.4 2-12 2.1-0.1 1.3 24 0.6 60.2-0.3 30.1-1.6 66-2.1-0.9-2 1.7-6.3-0.7-2.1-2.9-2.1 7.3-2.1 0.1-2.1-0.5-2.1 0.8-4.2-0.1-4.2 2.9-2.1-17.3-2.1 16.3-2.1 0.9-6.2-0.1-2.1 4.3-2.1 1-2.1-10.7-2.1 9.9-2.1-2.2-2.1 1-2.1-1.2-2.1-5.2-2.1 8.5-2.1-11.7-2.1 13.1-1.6-20.1-0.5-12.4-1 12.4-1.1 5.1-2.1 17.7-2 0.3-2.1-17-2.1 16.1-1.8-22.2-0.3-43.2-0.4 43.2-1.7 25.7-2.1-2.7-2.1 2.1-2.1-5.3-1-19.8-1.1-37.6-1.1 7.5-0.2 30.1-0.8 17.3-2.1 10.9-2.1-0.2-2.1-2.4-2.1 0.6-4.2 4.2-2.1-3.9-2-14.8-2.1 19-2.1 0.9-2.1-2.9-2.1 3-2.1-0.6-2.1 2.6-4.2-1.9-4.2 2.6-2.1 0.2-2.1-0.8-2.1 3.2-2.1-1.1-2.1 1-1.7-36.9-0.3-15.9-0.5 15.9-1.6 27.9-2.1 12.3-2.1-1.9-2.1 2.7-2.1-11.5-2.1 12.4-2.1 0.9-2.1-6.3-2.1 3.7-2.1-1.1-2.1 2.6-2.1-2.6-2.1 0.9-2.1 1.6-2.1 6.7-4.1-1.4-2.1 1.4-2.1-0.3-2.1 2.9-2.1-7.6-2.1 6-2.1-5.3-2.1-8.7-2.1 7.5-2.1 1.9-2.1-0.7-1.1-13.9-1-25-0.8 25-1.3 20-2.1 0.3-2.1 1-2.1-2.3-2.1-8.9-2 10.8-2.1 1-2.1 2.1-2.1-1.9-2.1 0.7-2.1-18-2.1 18.6-2.1-32.3-2.1 33.9-2.1-0.8-2.1-2-2.1-14.2-2.1 5.2-2.1 13.2-4.2 4.3-2.1-4.1-2 0.8-2.1-23.6-2.1 24.8-2.1-1.4-2.1 3.4-2.1-2.3-2.1 1.1-2.1 2.5-2.1-9.5-2.1 9.7-2.1-1.5-4.2 1.1-2.1-34.7-2.1 22.9-2.1 13.4-2-9.5-2.1 10.2-2.1-42.6-1.8 38.7-0.3 2.6-2.1 3.1-4.2-4-2.1 1.3-2.1 0.7-2.1-2.6-2.1 0.8-2.1-17.8-4.2 15.6-2.1 3.4-2.1-1-2.1 0.1-2 0.7-2.1-1.6-2.1 2.4-2.1-1.5-2.1-7.1-2.1 7.6-2.1-4.7-4.2 3.2-2.1-0.5-1.6-30.8-0.5-22.3-0.4 22.3-1.5 30.1-0.2 0.9-2.1-0.4-2.1 2.5-2.1-17.8-2.1 18.1-2.1-2.5-2 0.5-2.1-7.6-2.1-28-2.1 34.8-2.1-3.5-2.1 2.2-2.1 0.5-2.1-2.5-2.1 1.9-2.1-9.2-2.1 6.9-2.1-0.7-2.1 2.3-2.1-37.6-2.1 34.3-2.1 0.2-2 2-2.1-2-2.1 4.4-2.1-4.3-2.1-22-2.1 21.8-6.3 1.4-2.1-0.8-2.1-3.3-2.1-1.6-2.1 0.4-2.1 1-4.2 0.1-2.1-23.9-0.3 1.4-1.7 2.3-2.1 16.9-2.1-1.9-2.1 0.9-2.1 2-2.1-3.7-2.1 2.1-2.1-0.1-4.2 1-1.5-19.5-0.6-12.7-0.6 12.7-1.5 15.3-2.1-14.4-2.1 18.5-4.2-3.9-2.1 0.6-2-0.2-2.1 1.5-2.1-3.1-2.1 1.7-2.1-3.3-2.1 2.6-2.1 0.5-2.1-1.3-2.1 1-4.2-2.2-2.1-15-2.1 11.7-2.1 0.8-2.1-0.2-2.1-1-2-9.8-2.1 6.6-2.1 4.7-2.1-3.4-4.2 1.7-2.1-1-1.1-8.4-1-13.3-2.1 17.7-2.1-6.6-2.1-16.6-2.1 19.8-2.1-16.2-2.1 14.9-4.2 1.4-4.1 3.2-4.2-4.1-2.1 0.7-2.1-2.2-2.1 3.1-2.1-3.6-2.1-7.2-2.1 7-2.1-34.8-2.1 35.5-2.1-2.5-2.1 0.1-2.1-17.9-2.1 16.3-2.1-14.8-2 12.7-2.1 2-2.1-2.8-2.1-1.4-2.1-9.3-2.1 11-2.1-2.9-2.1-0.1-2.1 1.3-2.1-2.6-2.1-1.5-2.1-3-2.1-0.8-2.1-6.1-2.1 5.3-2.1 0.9-2.1 2.1-2-49.3-2.1 47.2-1-12.7-0.4-30.1-0.7-12.5-0.7 12.5-0.4 30.1-1 14.1-2.1-3.5-2.1 1.8-2.1 2.7-2.1-7-2.1 1.8-2.1-1.1-2.1 1.1-2.1-11-2.1 12.2-1.6-11.1-2.6-25.3-1 25.3-1.1 8.5-2.1-1.9-2 1-2.1-1.3-2.1 2.9-2.1-14.4-0.7 5.2-1.4 6.6-2.1 0.2-2.1-2.4-2.1-1.6-1.1-2.8-0.8-30.1 0.9-30.1 0.3-30.1-1.4-22.7-0.6 52.8 0.4 30.1-0.5 30.1-1.4 5.8-2.1 1.3-2.1-3.4-1.5-33.8-0.3-60.2 0.2-30.1 1.1-30.1 0.5-7.1 2.1-4 2.1 1.5 1.4 9.6 0.7 17.2 0.8-17.2 1.3-6.5 4.2-5 2.1 1.1 2.1-0.5 2.1-2.1 2.1 10.2 2.1-8.3 2 7.2 2.1-7.8 2.1-2.6 2.1 14.9 2.1-10.7 2.1-2.7 2.1-0.9 2.1 0.8 2.1-2.2 2.1 2 2.1-6.8 2.1 2.9 2.1 10.1 2.1-11.8 2.1 0.2 2.1 1.3 2.1-0.7 2-3.5 2.1 3.1 2.1 1.2 2.1 4.8 2.1-6.3 2.1-1.4 2.1 42.2 2.1-46.9 2.1-2.8 4.2 1.3 2.1-2.2 2.1 10.3 2.1-11.1 2.1 1 2.1-3.5 4.1 2.5 2.1-3.5 2.1 27 2.7-24.4 1.5-4.9 2.1-1.7 2.1 2.2 2.1 14.7 2.1-16.8 2.1-0.7 2.1-2.7 2.1 4.7 2.1-6.2 2.1 3.7 2.1-4.3 2.1 5.4 2-4.6 2.1 0 2.1 1 2.1 0.2 2.1-2.8 2.1 0.3 4.2-2.9 2.1-0.3 2.1 15.5 2.1-20.8 6.3-1 2.1 12.9 2.1-10.7 2.1-3.2 2 0 2.1-1.5 2.1-0.8 2.1 0.9 2.1 11.7 2.1-16.2 2.1 14.7zM1785.4 1324.9l-0.4 24.1 0.4 10 0.3-10zM1798 1362.5l-0.4 16.6 0.4 20.3 0.3-20.3zM1823.1 1342.4l0 10.8 0.3-4.2zM1203.3 1352.8l-0.4 26.3 0.4 24.4 0.3-24.4zM1226.3 1369.8l-0.3 9.3 0.3 34.3zM1173.9 1318.9l0-2.3 2.1-0.3 3.1 32.7 0.7 30.1 0 30.1-0.3 30.1-1.4 29.2-4.2-0.2zM1841 1318.9l0.9-14.8 2.1-1.2 2.1 0 0.8 16 0.6 30.1 0.7 11.9 1.2-11.9 1.4-30.1 1.6-13.2 2.1-1.5 2.1 2.1 2.1-2.7 1.9 15.3-0.6 30.1-0.1 30.1 0.9 18.5 0.7-18.5 0-30.1-0.5-30.1 1.9-7.9 1.4 7.9 0.7 9.8 0.6-9.8 1.5-11.2 2.1 0.6 2 10.7 2.1-8.8 2.1 0.2 1.1 8.5 1 17.1 1.3-17.1 0.8-5.5 2.1-3.8 2.1-2.8 2.1 1 2.1 3.5 2.1-3.4 2.1 1.6 2.1 0.9 0.7 8.5 1.2 30.1 0.2 24.4 0.2-24.4 1-30.1 0.9-10.5 2.1 2.3 2.1-0.6 2.1-1.4 2 0.4 2.1 2 2.1 2.9 2.1-3.2 2.1 27.1 2.1-28 1.1 9 1 15.5 1.1-15.5 1-7.3 2.1 0.5 2.1-3.8 2.1 15.3 0.6-4.7 1.5-5.8 2.1-0.6 2.1 0.5 2.1-0.3 0 69.2-0.8 27.3 0.6 30.1-1 30.1-0.9 1-2.1-13.8-2.1 15.7-2.1-1.6-2.1 3.1-2.1-4.7-2.1 0.9-2.1-40.1-2.1 38.3-2.1 1.4-2.1-0.6-2.1 0.9-2.1-1-2.1 1.7-2-1.2-2.1-17.6-2.1 16-2.1 1.4-1.7-29.9-0.4-39.7-0.6 39.7-1.5 16.9-2.1 10.9-2.1-0.1-2.1 1.1-2.1-0.7-2.1 1.2-2.1-3.8-2.1-4.3-2.1-20.6-2.1 22.6-2.1-8.3-2.1-2.3-2-13.9-2.1 25.6-2.1-20-2.1 21.9-2.1 0.6-2.1-38.1-2.1 37.2-2.1-64.4-2.1 63.1-2.1-0.9-2.1 1.8-2.1 2.5-2.1-1.4-2.1-0.7-1.8-86.1 0.1-30.1zM1913.1 1378.3l-0.9 30.9 0.9 13.8 0.7-13.8z"/>
<path fill="#adfb7f" stroke="#adfb7f" d="M1376.1 1258.7l1-2.6 2.1 2.3 2 0.2 2.1 0.9 2.1-0.7 2.1-3.1 2.1 22.7 2.1-19 2.1 16.3 2.1-19.3 2.1 0.9 2.1 5.2 2.1-5.7 2.1 1.3 2.1 49.7 2.1-50.8 2.1 1.1 2.1-2.6 2.1-0.2 2 21.9 2.1-25 2.1-0.6 2.1 1.1 2.1-0.7 2.1 2 4.2-4 2.1-1.1 4.2-0.4 2.1 5.3 2.1-5.4 2.1 0.6 2.1 6.6 2.1-6.1 2.1 17.7 2-18.2 2.1 16.1 2.1-19.7 2.1 2.8 2.1 1.5 2.1-2.4 2.1 0.5 2.1-1.4 2.1 0.5 2.1-1 4.2 1.9 2.1-1.5 1 12.4 1.1 23.8 1.1-23.8 1-10.9 2.1 25.1 2-27.4 2.1-2.5 2.1 3.7 2.1-1.8 2.1 1.8 2.1-2.1 2.1 1.2 2.1 0 2.1 8 2.1-6.6 4.2-1.6 2.1 5.5 2.1-7.4 2.1-1.2 2.1 1.6 2.1 4.5 2-4.4 4.2-0.8 2.1-1 2.1 11.1 2.1-4.2 2.1 17.3 2.1-22.9 2.1 0.4 4.2-0.2 2.1 0.5 2.1-3.6 2.1 0.9 2.1 0 2.1 19.7 2.1-17.3 2-0.7 2.1 12.5 2.1 24.2 2.1-35 2.1-0.4 2.1 1.6 2.1-1.2 2.1 0.9 2.1-1.1 4.2 4.2 2.1-2.3 2.1 1.6 2.1-2.4 4.2 2.6 2 0.2 2.1-3.6 0.9 13.5 1.2 35 2.1-44.5 2.1-2.5 1.1 12 1 35.5 1.2-35.5 0.9-8 2.1 16.8 2.1-18 2.1-0.7 2.1 3.7 2.1 19.1 4.2-20.3 2.1-1 4.2 2.8 2 0 2.1-0.8 2.1 0 2.1 1.9 2.1-0.9 1.7 35.5 0.4 18.1 0.5-18.1 1.6-28.8 2.1-0.4 2.1 4.9 2.1-4.7 2.1 1.4 2.1 10.7 2.1-18.7 2.1 0.4 2.1 1.2 4.2-0.2 2 1.3 2.1-0.7 2.1 6.1 2.1 1.9 2.1-1.5 2.1-0.8 2.1 4.3 2.1-2.1 2.1 4.6 2.1-8.5 2.1 1.5 2.1 3.4 2.1-1.8 2.1 1.8 2.1-1.8 2.1 0.1 1.2 26.4 0.9 41 0.9-41 1.1-22.1 2.1 1.6 2.1-0.9 2.1 5.2 2.1-4.2 4.2 1.5 2.1 3.1 2.1 16.9 2.1-19.6 2.1 1.9 2.1-0.6 2.1 3.6 2.1-2 4.2-0.2 2-2.8 4.2 4.7 2.1 9.8 2.1-7.9 2.1-2 2.1 0.1 2.1 6.3 2.1-3.4 2.1 4.2 2.1-5.5 2.1 2.4 2.1-2.3 2.1 0.9 2.1 8.9 0.1 2.4-0.6 30.1 0.5 21.6 2.1-19.1 2.1-43.2 2 0.4 2.1 1.2 0.8 9 1.3 30 2.1-19.5 2.1-3.1 2.1 5 2.1-17 4.2 0.7 1.5 3.9 0.4 30.1-0.4 30.1 0.6 15.3 0.5-15.3-0.3-30.1 0.3-30.1 1.6-6 2.1 9.5 2.1-9.3 2.1 0.4 2.1 4.4 4.1 0.1 2.1 1 2.1 0.1 4.2-0.7 2.1 0.9 2.1 2.1 2.1 0.7 2.1-1.1 4.2 1.2 2.1 4.1 2.1 18.5 2.1-16.7 2.1 0.1 2.1 0.8 2.1 11.8 2-9.7 2.1 0.1 1 17.8 0.6 30.1 0.1 30.1-1.7 91-2.1-0.8-2 1.6-6.3-0.9-2.1-4.1-2.1 9-2.1 0.2-2.1-0.7-2.1 0.9-4.2-0.3-4.2 2.9-2.1-16.8-2.1 15.8-2.1 0.7-4.1-0.2-2.1 0.3-2.1 4.1-2.1 1-2.1-11.4-2.1 10.7-2.1-1.8-2.1 0.7-2.1-1.3-2.1-4.7-2.1 7.5-2.1-12.3-2.1 14-1.1-14.8-1-22.9-1.8 22.9-2.4 17.4-2 0.2-2.1-18.1-2.1 17.3-1.4-16.8-0.7-55.3-0.7 55.3-1.4 20.1-2.1-2.5-2.1 2-2.1-5.6-2.1-55.6-1.7 11.5 0 30.1-0.4 9-2.1 13.6-2.1-0.3-2.1-2.3-2.1 0.1-4.2 4.6-2.1-4.8-2-13-2.1 17.9-2.1 1.2-2.1-3.5-2.1 3.3-2.1-0.7-2.1 3.2-2.1-1.4-2.1-0.9-4.2 3-2.1 0.2-2.1-0.7-2.1 3.4-2.1-1.1-2.1 0.9-1.4-31.7-0.6-29.6-0.9 29.6-1.2 20.7-2.1 14.4-2.1-1.6-2.1 2.5-2.1-13.6-2.1 14.4-2.1 0.9-2.1-6.7-2.1 3.9-2.1-0.9-2.1 2.3-2.1-2.7-4.2 2.6-2.1 7.2-4.1-1.6-2.1 1.4-2.1-0.4-2.1 3.1-2.1-8.2-2.1 6.4-4.2-12.4-2.1 5.6-2.1 1.7-2.1-0.5-0.6-8.4-1.5-37.7-1.2 37.7-0.9 14.3-4.2 1.6-2.1-1.8-2.1-13.6-2 14.9-2.1 0.9-2.1 1.9-2.1-1.6-2.1 0.6-2.1-20.1-2.1 20.7-1.3-17.8-0.8-19.1-0.8 19.1-1.3 19.3-2.1-0.8-2.1-3.2-2.1-14.4-2.1 4.9-2.1 15-4.2 4.2-2.1-4.1-2 0.5-2.1-22.3-2.1 23.7-2.1-1.7-2.1 3.1-2.1-2.1-2.1 1.2-2.1 2.8-2.1-10.5-2.1 11-2.1-1.9-4.2 1.2-2.1-38.7-2.1 25.4-2.1 15.3-2-8.9-2.1 9.9-2.1-43.7-2.1 42.9-2.1 2.8-4.2-4.7-4.2 2.5-2.1-3.3-2.1 1.1-2.1-16.4-2.1 5.1-2.1 8.2-2.1 4.4-2.1-1.2-2.1 0.1-2 0.8-2.1-1.9-2.1 3.1-2.1-1.9-2.1-8.2-2.1 8.9-2.1-5.2-4.2 3.1-2.1-0.9-1.3-24.5-0.4-30.1-0.4-3-0.7 33.1-1.4 25-2.1-0.3-2.1 3.1-2.1-17.1-2.1 17.4-2.1-3-2 0.7-2.1-6.9-1.6-18.9-0.5-13.9-2.1 38.6-2.1-3.2-2.1 2.1-2.1 0.5-2.1-2.3-2.1 1.8-2.1-9.7-2.1 7.3-2.1-0.5-2.1 2.4-2.1-36.3-2.1 33.1-2.1 0-2 2.1-2.1-1.9-2.1 4.3-2.1-4-2.1-21.9-2.1 21.6-6.3 1.3-2.1-0.7-2.1-3-2.1-1.7-2.1 0.2-2.1 1.3-2.1-0.3-2.1 0.3-1.5-17.5-0.6-15.4-4.1 29.3-2.1-1.7-2.1 0.8-2.1 2.1-2.1-3.4-2.1 1.9-6.3 0.6-1.1-14.2-1-22.3-1.1 22.3-1 10.5-2.1-17.5-2.1 21.7-4.2-3.9-2.1 0.6-2-0.1-2.1 1.3-2.1-2.9-2.1 1.6-2.1-3.2-2.1 2.1-2.1 1.1-2.1-1.4-2.1 1-4.2-2.2-2.1-17.5-2.1 14-2.1 0.8-2.1-0.2-2.1-0.8-2-9.7-4.2 11.4-2.1-3.4-4.2 1.7-2.1-0.9-2.1-24.8-2.1 20.3-2.1-8.2-2.1-13.7-2.1 17.9-2.1-17.9-2.1 16.5-4.2 1.3-4.1 4.4-4.2-5.2-2.1-1.1-2.1-0.3-2.1 3.5-2.1-3.9-2.1-6.5-2.1 6.4-2.1-34.2-2.1 34.8-2.1-2.3-2.1 0-2.1-19.7-2.1 17.5-2.1-13.6-2 11.9-2.1 2-2.1-2.7-2.1-1.5-2.1-10.2-2.1 11.9-2.1-2.9-2.1 0-2.1 1.1-4.2-4.2-2.1-2.9-2.1-1.1-2.1-6.4-2.1 5.6-2.1 1-2.1 2.2-2-47.7-2.1 45.8-0.6-7.3-0.6-30.1-0.9-16.4-0.9 16.4-0.6 30.1-0.6 8.7-2.1-3.5-4.2 4.3-2.1-7.5-2.1 2.3-2.1-0.8-2.1 1.2-2.1-10.8-2.1 11.9-4.2-40.9-2.1 38.4-2.1-2.2-2 1.2-2.1-1.8-2.1 3.2-2.1-18.4-2.1 16.1-2.1 0.2-4.2-5.8-1.4-25.9 1.4-60.2-1.8-30.1 1.7-30.1 0.1-0.8 4.2-5.4 2.1 1.2 2.1-0.4 2.1-1.9 1.4 7.3 0.4 30.1-0.4 30.1 0.7 37.1 0.6-37.1-0.4-30.1 0.6-30.1 1.3-5.6 2 8.6 2.1-9.2 2.1-2.5 2.1 18.5 1.1-9.8 1-5.3 2.1-2.1 2.1-0.8 2.1 0.9 2.1-1.9 2.1 2.8 2.1-7.6 2.1 2.5 2.1 10.9 2.1-12.3 2.1 0.2 2.1 1.2 2.1-0.9 2-3 2.1 3.1 2.1 1.4 2.1 5.1 2.1-6.6 2.1-1.7 2.1 44.7 2.1-49.5 2.1-2.8 2.1 0.2 2.1 1 2.1-2 2.1 11.2 2.1-12.2 2.1 1.1 2.1-3.8 2.1 2.4 2 0.7 2.1-4 2.1 26.8 2.1-13 2-16.8 0.1-0.5 2.1-1.5 2.1 2.2 2.1 15.7 2.1-17.8 2.1-0.7 2.1-2.6 2.1 4.8 2.1-6.1 2.1 3.9 2.1-4.7 2.1 4.6 2-3.6 2.1 0.2 2.1 0.9 2.1 0.1 2.1-2.6 2.1 0 2.1-1.6 2.1-0.9 2.1-0.4 2.1 18.5 2.1-24.4 6.3-0.9 2.1 13.7 2.1-11.2 2.1-3.2 2 0 4.2-2.1 2.1 1 2.1 12.8 2.1-17.5 2.1 15.6 2.1-19.6 2.1 1.4 2.1 6.3 2.1-9.2 2.1 3.1 2.1-2.6 2.1 2.3zM1446.2 1264.5l-0.5 24.3 0.5 30.7 0.4-30.7zM1544.6 1310.8l-0.3 8.1 0.3 7.4 0.2-7.4zM1798 1353.7l-0.6 25.4 0.6 30.9 0.5-30.9zM1823.1 1334.3l-0.4 14.7 0.4 9.3 0.6-9.3zM1226.3 1360.2l-0.5 18.9 0.5 44.1 0.5-44.1zM1182.2 1318.9l0.1-1.4 2.1-4 2.1 1.7 0.6 3.7 1.3 30.1-0.7 60.2 0.3 30.1-1.5 30.1-2.1 1.6-2.1-3.9-1.2-27.8-0.3-30.1 0.2-60.2zM1841.4 1318.9l0.5-8.2 2.1-1.3 2.1-0.1 1.1 39.7 1 16 1.6-16 0.5-11.9 2.1-24.9 2.1-1.4 2.1 1.9 2.1-2.7 1.1 8.9-0.2 60.2 1.2 24.4 0.9-24.4 0.6-60.2 0.6-2.6 2.1 25.8 1.4-23.2 0.7-4.7 2.1 0.7 2 15.6 2.1-13.6 2.1 0.1 2.1 31.8 2.1-28.7 0.5-1.2 3.7-6 2.1 0.9 2.1 4.5 2.1-4.4 2.1 1.7 2.1 0.7 1.5 32.7 0.2 60.2-0.7 30.1-1 11.5-2.1 8.9-6.3 0.4-2.1 1.2-4.2-8.2-1.4-13.8-0.7-20.9-0.6 20.9-1.5 15.4-2.1-6.5-2.1-4.8-2-12.8-2.1 25.5-1.7-16.8-0.4-11.8-0.4 11.8-1.7 19.2-2.1-0.5-2.1-42.4-0.9 23.7-1.2 18.7-2.1-64.1-2.1 62.6-2.1-1.8-4.2 5.5-2.1-1.6-2.1-0.7-1.5-78.8 0.1-30.1zM1898.1 1318.9l0.4-4.6 2.1 2.3 4.2-1.7 2 0 2.1 2 1.2 2 0.9 9 0.8-9 1.3-2.7 2.1 26.3 2.1-26.9 2.1 30 2.1-28.6 2.1 0.9 2.1-3.8 2.1 18.5 2.1-14.7 2.1-0.2 2.1 1.2 2.1-0.4 0 55-1.1 35.7 0.5 30.1-1.5 23.8-2.1-15-2.1 17.7-2.1-2.8-2.1 4.8-2.1-6.1-2.1 1.6-1.4-24-0.7-22.2-0.8 22.2-1.3 21.6-2.1 1.7-2.1-3.4-2.1 2.8-2.1-0.4-2.1 2.2-2-2.1-2.1-16.6-2.1 15.4-2.1 1.5-1.3-22.7-0.5-30.1 0.2-60.2zM1913.1 1372.2l-1.7 6.9 0.5 30.1 1.2 19.2 0.9-19.2zM1173.9 1349l0-24.9 2.1-0.5 2.4 25.4 0.9 30.1-0.2 60.2-1 20.3-2.1 0.7-2.1 0z"/>
<path fill="#cbfb65" stroke="#cbfb65" d="M1418.7 1258.7l0.2-1.7 2.1-0.5 2.1 1 2.1-0.7 2.1 2.1 4.2-4 2.1-1.1 4.2-0.5 2.1 5.8 2.1-5.8 2.1 0.5 1.3 4.9 0.1 30.1 0.7 33.9 0.8-64 1.3-4.3 2.1 20.3 2-20.6 2.1 18.2 2.1-21.8 2.1 2.6 2.1 1.7 2.1-2.4 2.1 0.4 2.1-1.5 2.1 0.5 2.1-0.9 4.2 1.9 2.1-1.3 2.1 41.6 2.1-40.3 2.1 24 2-26.2 2.1-2.4 2.1 3.6 2.1-1.7 2.1 1.8 2.1-2.1 2.1 1.1 2.1 0.1 1.9 7.7 0.2 3.4 0.3-3.4 1.8-6.3 4.2-1.6 2.1 6 2.1-8 2.1-1.2 2.1 1.6 2.1 6.8 2-6.7 4.2-0.7 2.1-1 2.1 12.1 2.1-4.8 2.1 15.2 2.1-21.4 2.1 0.6 4.2-0.3 2.1 0.8 2.1-3.8 2.1 1.1 2.1-0.5 2.1 22.6 2.1-19.8 2-0.8 2.1 14.2 2.1 25.8 2.1-38.2 2.1-0.6 2.1 1.7 2.1-1.3 2.1 1.1 2.1-1.2 4.2 4.5 2.1-2.4 2.1 1.4 2.1-2.5 4.2 2.7 2 0.1 2.1-3.6 2.1 47.9 2.1-43.9 2.1-2.3 0.6 6.7 1.5 48.4 0.5-18.3 1.6-32.8 2.1 19.2 2.1-20.5 2.1-0.7 2.1 3.8 2.1 22.1 4.2-23.5 2.1-0.9 4.2 2.8 2 0 2.1-0.9 2.1 0 2.1 2.1 2.1-0.9 1.4 30.2 0.7 30.9 0.9-30.9 1.2-22.3 2.1-0.2 2.1 7.5 2.1-7.3 2.1 1.3 2.1 8.1 2.1-17.8 2.1 0.5 2.1 1.5 2.1 0.2 2.1-0.6 2 4.4 2.1-3.7 2.1 7.1 2.1 2 2.1-1.6 2.1-0.7 2.1 4.1 2.1-0.4 2.1 3.2 2.1-8.9 2.1 1.4 2.1 3.7 2.1-2 2.1 1.3 2.1-1.5 2.1 0.3 0.9 20.4 0.8 30.1 0.4 44.5 0.3-44.5 1.7-46.1 2.1 1.4 2.1-1 2.1 6.3 2.1-5.2 4.2 1.3 2.1 3.1 2.1 17.2 2.1-19.8 2.1 1.8 2.1-0.5 2.1 3.4 2.1-1.5 4.2-1 2-2.5 4.2 4.3 2.1 9.1 2.1-7.2 2.1-2 2.1 0.1 2.1 6.6 2.1-3.7 2.1 4.5 2.1-6 2.1 2.5 2.1-2.2 2.1 0.8 1.3 6.2 0 30.1 0.8 31.1 2.1-21.7 2.1-44.9 2 0.3 2.1 1.1 1.8 34.1 0.3 17.9 0.8-17.9 1.3-12.1 2.1-3 2.1 5.2 2.1-19.5 4.2 0.6 1.6 28.8-0.2 30.1 0.7 20.5 0.7-20.5-0.2-30.1 1.6-31.2 2.1 9.7 2.1-9.4 2.1 0.4 2.1 5.3 2.1 3.3 2-2.9 2.1 1.1 6.3-1 4.2 3.2 2.1 0.6 2.1-1.3 4.2 1.1 2.1 10.4 2.1 13.3 2.1-17.3 4.2 1 2.1 9.1 2-7.4 2.1 0.4 1.3 41.7 0.1 30.1-1.4 84.3-2.1-0.7-2 1.9-4.2-1.4-2.1 0.1-2.1-4.8-2.1 11.6-2.1 0.2-2.1-0.8-2.1 0.9-4.2-0.5-2.1 1.1-2.1 1.9-2.1-16.3-2.1 15.4-2.1 0.5-4.1-0.5-2.1 0.7-2.1 4-2.1 0.9-2.1-13.1-2.1 12.6-2.1-1.6-2.1 0.4-2.1-1.2-2.1-4.3-2.1 6.5-2.1-14.6-2.1 16.6-0.7-9.5-1.4-38.1-0.1 8-2 27.1-2.1 15.1-2-0.1-2.1-21.1-2.1 20.6-0.9-11.5-1.2-63.8-1.1 63.8-1 14.5-2.1-2.3-2.1 2-2.1-5.9-1.2-38.4-0.9-15.6-2.1 13.5 0 32.2-2.1 16.9-2.1-0.2-2.1-2.4-2.1-0.3-2.1 2.8-2.1 2.1-2.1-5.6-2-11.1-2.1 16.6-2.1 1.3-2.1-3.7-2.1 3.2-2.1-0.7-2.1 3.2-2.1-1.6-2.1-0.6-4.2 2.8-2.1 0.2-2.1-0.6-2.1 3.9-2.1-1.5-2.1 0.9-1.1-25.6-0.7-30.1-0.2-37.2-0.4 37.2-1 30.1-0.7 13.6-2.1 16.5-2.1-1.8-2.1 2.7-2.1-15.7-2.1 16.5-2.1 0.7-2.1-8-2.1 4.8-2.1-0.7-2.1 2.3-2.1-4.3-2.1 2.5-2.1 1.8-2.1 7.5-4.1-1.8-2.1 1.4-2.1-0.4-2.1 3.2-2.1-8.7-2.1 6.8-4.2-12-2.1 4.8-2.1 1.7-2.1-0.3-1.6-33.1-0.5-22.3-0.4 22.3-1.7 38.8-4.2 1.8-2.1-1.3-1.4-9.2-0.7-13.9-0.7 13.9-1.3 9.8-2.1 0.9-2.1 1.8-2.1-1.3-2.1 0.4-2.1-23-2.1 23.7-0.9-12.3-1.2-29.3-1.2 29.3-0.9 13.6-2.1-0.8-2.1-4.5-2.1-15.5-2.1 5.6-2.1 16.8-4.2 4-2.1-4-2 0.3-2.1-20.1-2.1 21.5-2.1-2-2.1 2.8-2.1-1.9-2.1 1.4-2.1 2.8-2.1-11.2-2.1 11.9-2.1-1.9-4.2 1-2.1-42.4-2.1 27.8-2.1 16.5-2-7.4-2.1 8.4-2.1-43.7-2.1 43.3-2.1 2.8-4.2-4.9-4.2 2.6-2.1-3.4-2.1 1.3-2.1-14.7-2.1 2.2-2.1 8.7-2.1 4.7-2.1-1.2-4.1 0.9-2.1-1.7-2.1 3.1-2.1-1.9-2.1-8.7-2.1 9.5-2.1-5.1-2.1 1.7-2.1 1-2.1-1.1-1-18.1-0.1-30.1-1-8.6-1.1 38.7-1 19-2.1-0.2-2.1 3.1-2.1-15.8-2.1 16-2.1-2.8-2 0.7-2.1-6-1.2-14-0.9-23.7-1 23.7-1.1 18.7-2.1-2.7-2.1 1.9-2.1 0.4-2.1-2-2.1 1.8-2.1-10.2-2.1 7.6-2.1-0.2-2.1 2.5-2.1-35.2-2.1 31.9-2.1-0.2-2 2.2-2.1-1.8-2.1 4.3-2.1-3.8-2.1-20.9-2.1 20.7-6.3 1.2-2.1-0.6-2.1-2.8-2.1-1.8-2.1 0.1-2.1 1.4-2.1-0.4-2.1 0.4-1.1-12.5-1-29.4-2 23.8-2.1 14.2-2.1-1.4-2.1 0.7-2.1 2.1-2.1-3.1-2.1 1.7-4.2 0.6-2.1-0.4-2.1-40-2.1 36.8-2.1-20.8-0.9 15.2-1.2 10.1-4.2-4-2.1 0.6-2-0.1-2.1 1.3-2.1-2.9-2.1 1.6-2.1-3-4.2 3.2-2.1-1.4-2.1 0.9-4.2-2.2-2.1-20-2.1 16.3-2.1 0.8-4.2-0.8-2-9.6-4.2 11.5-2.1-3.7-2.1 0.8-2.1 1.2-2.1-0.9-2.1-27.8-2.1 21.6-4.2-19.3-2.1 15.7-2.1-19.3-2.1 18.1-4.2 0.9-2.1 2.8-2 2-4.2-5.2-2.1-3.4-2.1 2.2-2.1 3.3-2.1-3.7-2.1-5.7-2.1 5.8-2.1-33.7-2.1 34.1-2.1-2.2-2.1 0-2.1-23.5-2.1 20.7-2.1-12.4-2 11.2-2.1 1.9-2.1-2.7-2.1-1.5-2.1-11.6-2.1 13.3-2.1-2.8-2.1 0.1-2.1 0.9-4.2-4.4-2.1-2.9-2.1-1.4-2.1-8.6-2.1 7.9-2.1 1.1-2.1 2.3-1.2-33.7-0.8-12.5-0.9 12.5-1.2 31.9-1-31.9-1.1-20.3-1.1 20.3-1 33.4-2.1-3.5-4.2 4.2-1.1-4-1-15.2-2.1 13.3-2.1-0.6-2.1 1.8-2.1-10.5-2.1 11.6-4.2-42.8-2.1 39.8-2.1-3.7-2 2.1-2.1-9.7-2.1 11.5-2.1-21.9-2.1 19.1-2.1 0.4-4.2-8.1-0.9-17.2 1.3-60.2-1.5-30.1 1.1-19.1 2.1-8.2 2.1-3.7 2.1 1.5 2.1-0.4 2.1-1.8 0.3 1.6 1.1 30.1-0.2 30.1 0.9 48.3 0.8-48.3-0.2-30.1 1.5-30.2 2 11.3 2.1-12 2.1-2.2 2.1 22 2.1-19.5 2.1-1.4 2.1-0.8 2.1 0.9 2.1-1.5 1.9 3.3 0.2 6.8 0.1-6.8 2-8.1 2.1 2 2.1 13.5 2.1-14.6 2.1 0.3 2.1 1.2 2.1-1.3 2-2.5 2.1 3.3 2.1 1.4 2.1 5.8 2.1-7.2 2.1-1.9 2.1 46.6 2.1-51.7 2.1-2.6 2.1-0.1 2.1 1.2 2.1-1.9 2.1 12.1 2.1-13.2 2.1 1.1 2.1-3.8 2.1 3 2 0.4 2.1-3.9 2.1 28.9 2.1-9.4 2.1-23.8 2.1-1.8 2.1 2.8 2.1 15.6 2.1-18.1 2.1-1 2.1-2.9 2.1 5.9 2.1-7.1 0.8 1.7 1.3 4.6 1-4.6 1.1-2.6 2.1 4.1 2-2.9 4.2 1.1 2.1 0 2.1-2.3 2.1-0.2 2.1-1.5 4.2-1.2 2.1 21.5 0.9-16 1.2-12 6.3-0.9 2.1 14.2 2.1-11.2 2.1-3.3 2 0 4.2-1.8 2.1 0.9 2.1 13.9 2.1-18.7 2.1 16.4 2.1-20.4 2.1 1.4 2.1 5.6 2.1-8.2 2.1 2.7 2.1-2.2 2.1 2.3 2.1-6.5 2.1 2.6 2 0.4 4.2 2.9 2.1-6.4 2.1 25.6 2.1-21 2.1 17.6 2.1-20.5 2.1 0.8 2.1 4.5 2.1-5.1 2.1 1.2 2.1 48.5 2.1-49.3 2.1 1.1 2.1-2.9 2.1-0.5 2 24.7zM1502.7 1300.9l-0.4 18 0.4 36.9 0.4-36.9zM1519.5 1264.7l-0.4 24.1 0.4 13.4 0.3-13.4zM1544.6 1306l-0.4 12.9 0.4 11.8 0.4-11.8zM1716.3 1383.7l-0.4 25.5 0.4 7.1 0.3-7.1zM1798 1343.7l-0.7 35.4 0.7 39 0.7-39zM1823.1 1326.2l-0.6 22.8 0.6 14.5 0.9-14.5zM1226.3 1350.7l-0.8 28.4 0.1 30.1 0.7 23.8 0.6-23.8 0.1-30.1zM1416.8 1375.3l-0.3 33.9 0.3 57.9 0.3-57.9zM1841.8 1318.9l0.1-1.7 2.1-1.4 2.1-0.1 0.9 33.3 1.2 20.2 2.1-20.2 2.1-30.3 2.1-1.2 2.1 1.6 2.1-2.8 0.3 2.6 0.5 30.1-0.2 30.1-2 60.2-0.7 11.6-1.1-41.7-1-22.1-1.1 22.1-1 40-2.1-2.8-4.2 6.6-2.1-1.6-2.1-0.8-1.2-71.5 0.2-30.1zM1173.9 1349l0-16.4 2.1-0.6 1.7 17 1.1 30.1-0.2 60.2-0.5 11.3-2.1 1.8-2.1-0.1zM1181.4 1349l0.9-24.2 2.1-5.6 2.1 2.8 1.5 27-0.5 60.2 0.1 30.1-1.1 22.4-2.1 2.3-2.1-4.4-0.8-20.3-0.4-30.1zM1862 1349l0.9-25.9 1.8 25.9 0.3 24.3 0.3-24.3 1.8-27.2 2.1 1.2 2 19 2.1-15.8 2.1 0.1 1.5 22.7 0.4 30.1-0.2 30.1-1 30.1-0.7 7.6-3.1-7.6-1.1-10-2-6.2-2.1 25.6-1-9.4-1-30.1-0.1-17.3-0.1 17.3-0.9 30.1-1.1 12.1-2.1-1.5-0.7-10.6 1.8-60.2zM1878.2 1349l1.4-19.3 4.2-10.6 2.1 1.3 2.1 12.4 2.1-12.4 2.1 2.7 2.1 0.8 1.1 25.1 0.3 30.1-0.1 30.1-0.8 30.1-0.5 6.1-2.1 6.9-2.1 0.2-2.1-0.5-4.2 2.1-4.2-8.4-0.6-6.4-1.1-30.1-0.1-30.1zM1897.3 1349l1.2-28.2 2.1 3.3 4.2-2 2-0.4 2.1 2.9 1.9 24.4-0.1 30.1 0.8 30.1 1.6 24.5 1.1-24.5-0.3-30.1-0.8-13-1.8-17.1 1.8-25.6 2.1 23.8 2.1-24.7 1.7 26.5 0.4 29.4 0.4-29.4 1.7-25 2.1 1.7 2.1-5.2 2.1 21 2.1-16.2 4.2 1.9 2.1 1.9 0 35.7-1.3 44.4 0.2 30.1-1 16.2-2.1-15.8-2.1 18.6-2.1-3.6-2.1 5.4-2.1-5.8-2.1 2.1-1-17.1-0.9-30.1-0.2-28.9-0.2 28.9-1 30.1-0.9 14.2-2.1 2.2-2.1-6.3-2.1 4.5-2.1 0.4-2.1 2.2-2-2.5-2.1-15.9-2.1 15.2-2.1 1.4-0.9-15.4-0.5-30.1z"/>
<path fill="#eafc57" stroke="#eafc57" d="M1434 1258.7l3.8-0.5 2.1 7.2 2.1-7.3 2.1 0.6 1.2 30.1 0.9 37.1 2.1-66.4 2.1 22.8 2-23.1 2.1 20.4 2.1-24.1 4.2 4.7 2.1-2.8 2.1 0.3 2.1-1.4 2.1 0.4 2.1-0.7 4.2 1.8 2.1-1 2.1 48.9 0.4-16.9 1.7-30.9 2.1 22.7 2-24.9 2.1-2.4 2.1 3.6 2.1-1.6 2.1 1.8 2.1-2.2 2.1 1.2 2.1 0.1 0.6 2.5 1.5 20.3 2.1-21.4 2.1-1.2 2.1-0.4 2.1 7.2 2.1-9.2 2.1-1.3 2.1 1.6 1.2 4.4 0.2 30.1 0.7 22.4 0.6-22.4 0.3-30.1 1.1-4.2 4.2-0.6 2.1-1.2 2.1 14.2 2.1-6 2.1 12.7 2.1-19.9 2.1 0.8 4.2-0.4 2.1 1.1 2.1-3.9 2.1 1.1 2.1-0.8 2.1 25.3 2.1-22.3 2-0.8 2.1 16.6 2.1 30.5 2.1-45.3 2.1-0.6 2.1 1.7 2.1-1.4 2.1 1.2 2.1-1.1 4.2 5 2.1-2.9 2.1 1.3 2.1-2.7 4.2 3.1 2-0.1 2.1-3.8 2.1 47.4 2.1-43.1 2.1-2.3 1.4 31.5 0.7 30.9 0.8-30.9 1.3-26.9 2.1 21 2.1-22.8 2.1-0.8 2.1 4.7 2.1 24.1 2.1-16.2 2.1-9.8 2.1-0.9 4.2 3.4 2-0.1 2.1-1.1 2.1 0 2.1 2.4 2.1-0.7 1.1 23.7 1 56.1 0.3-26 1.8-45.9 2.1 0 2.1 10 2.1-9.7 2.1 1.2 2.1 5.4 2.1-15.8 2.1 0.6 2.1 1.6 2.1 0.1 2.1-0.7 2 10.1 2.1-9.5 2.1 7.5 2.1 2 2.1-1.8 2.1-0.6 2.1 4 2.1 1.3 2.1 1.9 2.1-9.5 2.1 1.5 2.1 3.8 2.1-2.2 2.1 0.9 2.1-1.1 2.1 0.3 1.5 44.6 0.2 90.3-0.3 30.1-1.1 30.1-0.3 6.5-2.1 16.8-2.1-0.9-2.1 2.6-2.1-16.8-2.1 17.7-2.1 0.9-2.1-9.1-2.1 5.1-2.1-0.5-2.1 2.2-2.1-7.4-2.1 5.5-2.1 1.9-2.1 9-4.1-2-2.1 1.3-2.1-0.4-2.1 3.4-2.1-10.1-2.1 8-4.2-12.5-2.1 4-2.1 2-2.1-0.2-1.3-27-0.8-47.3-0.7 47.3-1.2 30.1-0.2 3-2.1 1.4-2.1 0.7-2.1-0.8-0.6-4.3-1.5-28.6-1.5 28.6-0.5 4.3-2.1 0.8-2.1 1.7-2.1-1.1-2.1 0.2-2.1-25.9-2.1 26.7-2.1-40.6-2.1 41.8-2.1-0.9-2.1-5.6-2.1-16.8-2.1 6-2.1 19-4.2 3.8-2.1-3.9-2 0-2.1-17.9-2.1 19.5-2.1-2.3-2.1 2.3-2.1-1.6-2.1 1.6-2.1 2.8-2.1-11.9-2.1 12.8-2.1-2-4.2 0.8-2.1-47.1-2.1 31.3-2.1 17.6-2-5.9-2.1 7.1-2.1-43.9-2.1 43.9-2.1 2.5-4.2-4.9-4.2 2.6-2.1-3.4-2.1 1.4-2.1-12.9-2.1-0.7-2.1 9.3-2.1 5-2.1-1.3-4.1 0.9-2.1-1.6-2.1 3.2-2.1-1.9-2.1-9.2-2.1 10.1-2.1-5-2.1 1.7-2.1 0.7-2.1-1.4-0.6-11.7 0.1-30.1-1.6-14.2-2.1 57.2-2.1 0-2.1 3.2-2.1-14.6-2.1 14.6-2.1-2.7-2 0.8-2.1-5.1-0.8-9.1-1.3-35-2.1 47.7-2.1-2.3-2.1 1.8-2.1 0.4-2.1-1.8-2.1 1.7-2.1-10.7-2.1 8-2.1 0-2.1 2.7-2.1-34-2.1 30.7-2.1-0.4-2 2.2-2.1-1.6-2.1 4.2-2.1-3.5-2.1-20.1-2.1 19.8-2.1 0.2-2.1 0.9-2.1 0.1-2.1-0.6-4.2-4.4-2.1-0.1-2.1 1.7-2.1-0.6-2.1 0.5-0.6-7.5-1.2-30.1 0.2-60.2-0.5-44.9-0.4 44.9 0.1 60.2-1.7 20.6-2.1 12.8-2.1-1.1-2.1 0.6-2.1 2.1-2.1-2.8-2.1 1.5-4.2 0.6-2.1-0.7-2.1-40.6-2.1 37.9-2.1-24.1-2.1 28.7-4.2-4-2.1 0.5-2 0.1-2.1 1.1-2.1-2.7-2.1 1.5-1.4-1.9-0.7-1.3-1.9-28.8 0.2-30.1-0.4-6.9-0.4 6.9 0.3 60.2-2 2.2-2.1-1.4-2.1 0.9-4.2-2.4-2.1-22.2-2.1 17.6-2.1 0.9-4.2-0.8-2-8.5-2.1 4.3-2.1 6.8-2.1-4.1-2.1 0.6-2.1 1.5-2.1-0.9-2.1-31.8-2.1 24.7-4.2-16.7-2.1 13.6-2.1-21.9-2.1 20.7-4.2 0.6-2.1 3.2-2 2.1-4.2-5.3-2.1-5.7-2.1 4.6-2.1 3.3-2.1-3.6-2.1-4.9-2.1 5.2-2.1-33.2-2.1 33.4-2.1-2.1-2.1 0-1.1-10.8-1-16.9-2.1 24.3-2.1-11.6-2 10.9-2.1 1.8-2.1-2.6-2.1-1.7-2.1-14.5-2.1 16.2-2.1-2.6-2.1 0.1-2.1 0.7-3.8-4.1-2.5-4.4-2.1-2.2-2.1-9.3-2.1 8.4-2.1 1.6-2.1 3.3-0.9-27.5-1.1-16.5-1.2 16.5-0.9 25.2-0.8-25.2-1.3-24.1-1.3 24.1-0.8 27.3-2.1-4.9-2.1 3.4-2.1 2.1-1.9-27.9 0.7-30.1 0-30.1-0.5-30.1 1.1-30.1 0.6-2.2 2.1 1.6 2.1 16.3 2.1-17.2 2.1 0.3 2.1 1.3 4.1-3.7 2.1 3.4 2.1 2.3 2.1 8.4 2.1-10.5 2.1-2.2 2.1 48.5 2.1-53.8 2.1-2.5 2.1-0.3 2.1 1.3 2.1-1.7 2.1 14 2.1-15.2 2.1 1.2 2.1-3.9 2.1 3.6 2 0.1 2.1-3.8 2.1 31.1 2.1-0.5 0.4-15.9 1.7-19.7 2.1-1.6 2.1 2.8 2.1 15.4 2.1-17.9 2.1-1 2.1-2.8 2.1 6.1 2.1-7.3 2.1 9.7 2.1-11.1 2.1 3.9 2-2.1 4.2 1.4 2.1-0.2 2.1-2.3 2.1-0.8 2.1-1.8 4.2-1.1 2.1 24.5 1.3-24.2 0.8-7.5 4.2-0.2 2.1-0.6 2.1 13.9 2.1-10.6 2.1-3.2 2-0.1 4.2-1.6 2.1 0.9 2.1 16.7 2.1-21.6 2.1 16 2.1-20 2.1 1.5 2.1 4.8 2.1-7.2 2.1 2.4 2.1-1.9 2.1 2.2 2.1-6.4 2.1 2.6 2 0.6 2.1 1.9 2.1 3.7 2.1-9.1 2.1 28.8 2.1-24.1 2.1 19.2 2.1-21.4 2.1 0.4 2.1 3.6 2.1-4.1 2.1 0.8 2.1 47.2 2.1-47.5 2.1 1 2.1-2.7 2.1-0.8 2 28.9 2.1-32.8 2.1-0.6 2.1 1.3 2.1-0.8 2.1 2.5 2.1-2.9 2.1-1.9zM1502.7 1293.2l-0.6 25.7 0.2 30.1 0.4 10.4 0.5-10.4 0.1-30.1zM1544.6 1301.2l-0.6 17.7 0.6 16.2 0.6-16.2zM1383.3 1352.1l-0.3 27 0.3 18 0.4-18zM1696.9 1288.8l0.5-9.8 2.1 1.2 2.1-1.1 2.1 7.3 2.1-6.3 2.1 0.9 2.1 0.4 2.1 3 2.1 17.5 2.1-20 2.1 1.7 2.1-0.5 2.1 3.3 4.2-2.2 2.1-0.5 2-2.2 2.1 1.5 2.1 2.3 2.1 9.5 2.1-7.6 2.1-2 2.1 0.1 2.1 8 2.1-5.1 2.1 5.9 2.1-7.5 2.1 2.6 2.1-2.2 2.1 0.7 2.1 66.3 2.1-18.8 2.1-46.6 2 0.2 2.1 1.4 1.5 28.7 0.6 48.4 0.2-18.3 1.9-34.7 2.1-2.8 2.1 5.4 2.1-20.7 2.1-0.3 2.1 0.5 1.2 22.5 0 30.1 0.9 25.8 0.9-25.8-0.1-30.1 1.3-25.3 2.1 8.8 2.1-7.1 2.1-0.7 2.1 5.2 2.1 7.3 2-6.6 2.1 1.1 6.3-1.4 4.2 3.3 2.1 0.6 2.1-1.6 4.2 1 2 15.4-0.7 30.1 0.8 19.6 2.1-39 2.1-19.1 4.2 1 2.1 6.4 2-5.1 2.1 0.7 1.1 35.5 0.1 30.1-1.2 77.4-2.1-0.3-2 1.5-4.2-1.7-2.1 0.3-2.1-5.2-2.1 12.9-2.1 0.3-2.1-1.2-2.1 1.2-4.2-0.9-2.1 1.2-2.1 2.9-2.1-15.3-2.1 14-2.1 0.5-2.1-0.2-2-4.4-4.2 9.5-2.1 0.8-2.1-15.3-2.1 15-2.1-1.4-2.1 0.2-2.1-1.3-2.1-5.7-2.1 7.4-2.1-17.3-2.1 19.6-1.6-34.3-0.5-41.8-0.4 41.8-1.7 22.7-2.1 14.1-2-0.2-2.1-24.1-2.1 23.7-0.5-6.1-1.6-69.8-1.5 69.8-0.6 8.9-2.1-2.1-2.1 1.9-2.1-6.2-1-32.6-1.1-19.6-2.1 11.8-0.7 37.9-1.4 11.3-2.1-0.3-2.1-2.3-2.1-0.9-2.1 3.3-2.1 2-2.1-6.4-2-9.4-2.1 15.5-2.1 1.3-2.1-3.9-2.1 3.2-2.1-0.7-2.1 3.1-2.1-1.7-2.1-0.3-4.2 2.6-2.1 0.2-2.1-0.4-2.1 3.8-2.1-1.6-2.1 0.8-0.8-19.2-0.8-30.1-0.2-30.1 0-60.2 0.4-30.1zM1716.3 1376.1l-0.6 33.1 0.6 11.2 0.6-11.2zM1791.7 1370.6l-0.3 8.5 0.3 19.7zM1798 1332.3l-0.9 46.8 0.9 47.2 0.9-47.2zM1173.9 1349l0-7.9 2.1-0.8 0.9 8.7 1.5 30.1 0.2 30.1-0.4 30.1-0.1 2.4-2.1 2.8-2.1-0.2zM1181.7 1349l0.6-16.2 2.1-5.4 2.1 3.1 1 18.5-0.3 90.3-0.7 14.5-2.1 2.6-2.1-4.2-0.5-12.9-0.4-30.1zM1190.3 1349l0.4-6.4 2.1-13 2.1-4.4 2.1 1.9 2.1 0.1 2.1-2.5 1.1 24.3 0.1 60.2 0.9 29.3 0.8-29.3 0.2-60.2 1.1-22.4 2 11.7 2.1-12.8 2.1-2.7 2.1 24.3 2.1-21.8 4.2-2.4 2.1 1.3 2.1-1.6 1.7 26.4-0.6 30.1 0 30.1 0.8 30.1-1.9 20.6-2.1-0.2-2.1 1.7-2.1-8.2-2.1 9.5-2.1-26.8-2.1-16.1-2.1 39.8-2.1-4.3-2 2.6-2.1-17.5-2.1 19.1-2.1-25.6-2.1 23.1-2.1 0.5-4.2-9.6-0.5-8.6 1.3-60.2zM1841.2 1349l0.7-22.2 2.1-2.4 2.1-0.3 0.6 24.9 1.5 24.4 2.1-4.8 0.7-19.6 1.4-19.9 4.2 0 2.1-3.2 0.5 23.1-0.2 30.1-2.4 64.6-0.8-34.5-1.3-29-1.4 29-0.7 32.6-1.5-2.5-0.6-3.8-0.5 3.8-1.6 3.5-2.1 3-2.1-1.7-2.1-0.8-0.9-64.2zM1862.3 1349l0.6-18 1.2 18 0.4 30.1-0.2 30.1-1 30.1-0.4 5.1-2.1-2.6-0.2-2.5 1.6-60.2zM1866 1349l1.1-16.9 2.1 1.4 1.6 15.5 0.4 16.6 0.6-16.6 1.5-12.3 2.1 0 0.8 12.3 0.5 30.1-0.2 30.1-1.1 29.8-2.1-7-2.1-22-2 5.7-2.1 25.5-1.4-32-0.2-30.1zM1878.9 1349l0.7-9.7 4.2-10.8 2.1 1.2 2.1 18.3 2.1-18.4 2.1 2.7 2.1 0.3 0.7 16.4 0.3 30.1-0.1 30.1-0.9 30.7-2.1 5.1-2.1 0.2-2.1-1.3-4.2 2.9-3.6-7.5-0.6-2.3-1-27.8-0.2-30.1zM1897.7 1349l0.8-19.3 2.1 3.1 2.1-1.3 2-0.1 2.1-1 2.1 2.8 1.2 15.8 0.1 30.1 0.9 30.1 2 29.9 1.4-29.9-0.3-30.1-1.1-19.1-1.2-11 1.2-16.5 2.1 21.8 2.1-23.3 1.2 18 0.4 30.1-0.2 30.1-1.4 37-2.1 2.5-2.1-9-2.1 6-2.1 1.3-2.1 2.2-2-2.9-2.1-18-2.1 17.8-2.1 1.4-1-38.3zM1920.3 1349l1.2-17.3 2.1 2.3 2.1-5 2.1 23.5 2.1-19.2 2.1 2.5 2.1-0.3 2.1 4.5 0 16.1-1.1 23-0.5 60.2-0.5 8.5-1.2-8.5-0.9-16.4-0.8 16.4-1.3 11.5-2.1-4.4-2.1 6.1-2.1-5.6-2.1 2.6-0.6-10.2-0.9-30.1-0.1-30.1z"/>
<path fill="#fcee50" stroke="#fcee50" d="M1487.8 1258.7l0.4 0 1.9 4 2.1-1.9 2.1 2.4 2.1-2.8 2.1 1.4 2.1 0.1 1.9 26.9-0.5 30.1 0.1 30.1 0.6 13.9 0.6-13.9 0.2-30.1-0.6-30.1 1.9-25.2 2.1-1.5 2.1-0.4 2.1 8.4 2.1-11 2.1-1.3 2.1 1.7 2.1 59.9 2-59.6 4.2-0.5 2.1-1.4 2.1 16.3 2.1-6.6 2.1 9.6 2.1-18.5 2.1 1.1 2.1 0.2 2.1-0.8 2.1 4.9 0.9-5.4 1.2-2.2 2.1 1.3 2.1-1.3 2.1 28.2 2.1-24.6 2-1.1 3 29.8 1.2 24.6 0.7-24.6 1.4-27.4 2.1-1 2.1 2.2 2.1-1.7 2.1 1.6 2.1-1.4 4.2 6 2.1-3.2 2.1 1.3 2.1-3.4 4.2 4.1 2-0.5 2.1-4.6 2.1 46.4 2.1-41.4 2.1-2.2 1.1 25.2 1 39.5 1.1-39.5 1-20.4 2.1 22.5 2.1-24.4 2.1-0.9 2.1 4.9 2.1 28.1 0.5-9.8 1.6-12 2.1-8.4 2.1-0.7 4.2 3.3 2-0.2 2.1-1.1 2.1 0 2.1 2.5 2.1-0.6 1.6 47.3 0.3 30.1-0.1 90.3-0.7 30.1-1.1 27-2.1 1.9-2.1 0.8-2.1-0.3-2.1-33.6-2 32.8-2.1 0.9-2.1 1.7-2.1-0.8-2.1 0-2.1-28.8-2.1 29.7-2.1-39.1-2.1 40.1-2.1-0.9-0.5-1.3-3.7-23.6-2.1 6.4-2.1 21.3-2.1 2-2.1 1.5-2.1-3.8-2-0.2-2.1-15.7-2.1 17.3-2.1-2.5-2.1 1.9-2.1-1.3-2.1 1.7-2.1 2.8-2.1-12.8-2.1 13.9-2.1-2-4.2 0.5-1.7-37.5-0.4-17.8-0.6 17.8-1.5 20.2-2.1 19.1-2-4.5-2.1 5.7-2.1-43-2.1 43.4-2.1 2.2-2.1-2.8-2.1-1.9-2.1 0.8-2.1 1.8-2.1-3.5-2.1 1.5-2.1-11.2-2.1-3.8-2.1 10.1-2.1 5.3-2.1-1.2-4.1 0.8-2.1-1.4-2.1 3.2-2.1-2-2.1-9.7-2.1 10.8-2.1-4.8-2.1 1.5-2.1 0.4-2.1-1.7-0.3-5.2 0.3-33.9-2.1-15.9-2.1 56.6-2.1 0.2-2.1 3.2-2.1-13.5-2.1 13.3-2.1-2.5-2 0.9-2.1-4.2-1.8-34.3-0.3-19.4-0.5 19.4-1.6 36.8-2.1-1.9-2.1 1.7-2.1 0.4-2.1-1.7-2.1 1.7-2.1-11.7-2.1 8.9-2.1 0.3-2.1 2.7-2.1-32.7-2.1 29.4-2.1-0.6-2 2.3-2.1-1.4-2.1 4.1-2.1-3.2-2.1-19.2-2.1 18.9-2.1 0-2.1 1.1-4.2-0.5-4.2-4.3-2.1-0.3-2.1 1.9-2.1-0.7-2.1 0.5-1.5-32.5 0-60.2-0.6-55.9-0.6 55.9 0 60.2-1.4 16.7-2.1 11-2.1-1.1-2.1 0.6-2.1 2.6-2.1-3.1-2.1 1.6-4.2 0.9-2.1-1.3-2.1-40.8-2.1 38-2.1-26.9-2.1 32.6-4.2-5.1-2.1 1-2 0.2-2.1 1.2-2.1-3.2-2.1 1.8-2.1-3.4-1.6-23.3 0.1-30.1-0.6-10-0.6 10 0.1 30.1-1.6 27.3-2.1-1.9-2.1 1.2-4.2-2.8-2.1-23.7-2.1 18.9-2.1 0.9-4.2-0.6-2-7.3-2.1 3-2.1 7-2.1-3.9-2.1 0.4-2.1 1.7-2.1-0.8-1.4-19.4-0.7-17.1-2.1 28.5-2.1-9.3-2.1-5.6-2.1 12.3-2.1-24.7-2.1 23.6-4.2 0.2-2.1 3.5-2 2.3-4.2-5.4-2.1-8.1-2.1 7.2-2.1 3.1-4.2-7.6-2.1 4.7-2.1-32.7-2.1 32.7-2.1-1.9-2.1-0.1-2.1-31.9-2.1 27.9-2.1-10.9-2 10.6-2.1 1.8-4.2-4.7-2.1-17.2-2.1 19.3-2.1-3.3-4.2 1-2.1-2.8-2.1-4.3-4.2-5.6-2.1-9.6-2.1 8.8-2.1 1.8-2.1 3.4-0.7-20-1.3-20.5-1.5 20.5-0.6 17.9-0.6-17.9-1.5-28-1.6 28-0.5 20.1-2.1-5.1-2.1 3.7-2.1 1.7-1.4-20.4 0.5-60.2-0.4-30.1 1.3-24.8 2.1 1.6 2.1 17 2.1-17.8 2.1 0.5 2.1 1.9 4.1-5.2 2.1 5.3 2.1 2.5 2.1 8.9 2.1-10.8 2.1-3.8 2.1 48.8 2.1-56 2.1-2.3 2.1-0.6 2.1 1.4 2.1-1.5 2.1 18.1 1.1-13.3 1-6.1 2.1 1.2 2.1-3.8 2.1 4 2-0.1 2.1-3.7 2.1 33.4 2.1 7.4 0.9-32.3 1.2-14.2 2.1-1.4 2.1 2.7 2.1 15.5 2.1-17.8 2.1-1.1 2.1-2.6 2.1 6.1 2.1-6.9 2.1 12.6 2.1-14.4 2.1 3.1 2-1.1 2.1 1 2.1 0.5 2.1-0.3 6.3-4.7 2.1-0.2 2.1 1.3 2.1 25.7 2.1-36.9 4.2 0 2.1-0.8 2.1 13.6 2.1-9.8 2.1-3.3 2-0.1 4.2-1.4 2.1 1 2.1 19.4 2.1-24.4 2.1 14.7 2.1-18.8 2.1 1.5 2.1 4.1 2.1-6.2 2.1 2.1 2.1-1.6 2.1 2.2 2.1-6.4 2.1 2.6 2 0.7 2.1 2.5 2.1 5.9 2.1-11.8 1.4 17.3 0.7 15.2 0.9-15.2 1.2-12.4 2.1 21.3 2.1-22.9 2.1 0.1 2.1 2.7 2.1-3.3 2.1 0.5 2.1 45.9 2.1-45.8 2.1 1 2.1-2.5 2.1-1.1 1.3 16.5 0.7 18.4 0.7-18.4 1.4-20.3 2.1-0.8 2.1 1.4 2.1-0.8 2.1 2.5 2.1-3.1 2.1-1.6 2.1-1.3 4.2-0.9 2.1 7.7 2.1-7.8 2.1 0.6 0.9 24.4 0.6 30.1 0.6 10.1 0.6-10.1 0.5-30.1 1-23.3 2.1 24.5 2-24.7 2.1 21.5 2.1-25.9 2.1 3.2 2.1 2.3 2.1-3.2 2.1 0.5 2.1-1.8 2.1 0.4 2.1-0.8 2.1 1.5 2.1 0.9 2.1-0.5 1.2 25.4 0.9 29.6 0.7-29.6 1.4-24.8 2.1 20.5 2-23.2zM1544.6 1296.4l-0.8 22.5 0.8 20.6 0.7-20.6zM1383.3 1343.9l-0.5 35.2 0.5 25.2 0.6-25.2zM1477.6 1372.2l-1.4 6.9 1.4 6.2 0.4-6.2zM1638.3 1288.8l0.5-9.3 2.1 0.3 1.6 9 0.5 10.7 0.5-10.7 1.6-8.8 2.1 1.2 2.1 2.6 2.1-13.6 2.1 0.6 2.1 1.6 2.1 0.2 2.1-0.9 2 15.8 2.1-15.2 2.1 7.8 2.1 1.9 2.1-1.9 2.1-0.4 4.2 6.7 2.1 0.7 2.1-10 2.1 1.4 2.1 4 2.1-2.4 2.1 0.6 2.1-0.9 2.1 0.5 1.2 38.6 0.3 90.3-0.4 30.1-1.1 29.3-2.1 17.4-2.1-0.1-2.1 2.4-2.1-17.8-2.1 18.6-2.1 0.9-2.1-9.6-2.1 5.3-2.1-0.3-2.1 2-2.1-10.4-2.1 8.4-2.1 1.9-2.1 10.2-2.1-1.7-2-1-2.1 1.6-2.1-0.5-2.1 4.2-2.1-11.9-2.1 9.4-2.1-8.2-2.1-4.5-2.1 2.8-2.1 1.9-2.1 0.1-1-20.3-0.7-30.1-0.3-60.2 0.5-60.2zM1697.3 1288.8l0.1-3.7 2.1 1 2.1-1.1 1.1 3.8 1 23.3 1.2-23.3 0.9-2.8 2.1 0.9 2.1 0.2 2.1 3.4 2.1 17.4 2.1-20.1 2.1 1.7 2.1-0.7 2.1 4.1 2.1 1.5 2.1-4.5 2.1-0.7 2-2.1 2.1 1.1 2.1 2.8 2.1 9.4 2.1-6.9 2.1-2.6 2.1 0.2 2.1 9.3 2.1-5.7 2.1 6.4 2.1-8.6 2.1 3.3 2.1-2.5 2.1 0.8 1.4 54.9 0.7 9 1.4-9 0.7-6.9 2.1-46.8 2 0 2.1 1.3 1.2 22.3 0.6 30.1 0 60.2-0.4 30.1-1.4 18.4-2.1 13.1-2-0.5-2.1-27-2.1 26.9-2.1-76.7-2.1 79.2-2.1-1.9-2.1 1.9-2.1-7.6-0.8-25.8-1.3-23.7-2.1 10.2-1.4 43.6-0.7 5.6-2.1-0.3-2.1-2.3-2.1-1.3-2.1 3.7-2.1 1.9-4.1-15-2.1 14.5-2.1 1.4-2.1-4.1-2.1 3.1-2.1-0.8-2.1 3.2-2.1-1.9-2.1-0.1-4.2 2.5-4.2-0.1-2.1 3.9-2.1-1.7-2.1 0.6-1.3-42.9-0.3-60.2 0.4-60.2zM1703.7 1322l-0.4 27 0.4 29.5 0.4-29.5zM1716.3 1371.9l-0.5 7.2-0.3 30.1 0.8 15.4 0.8-15.4-0.4-30.1zM1777.5 1318.9l1.6-16.1 2.1-0.7 2.1 0.5 0.9 16.3 0.1 30.1 1.1 31.2 1.1-31.2 0-30.1 1-19.1 2.1 7.6 2.1-4.4 2.1-2 2.1 5 2.1 11.1 2-10.1 2.1 1 2.1-0.9 2.1-0.1 2.1-0.7 4.2 3.3 2.1 0.5 2.1-1.8 4.2 0.9 1.3 9.7-0.3 30.1 1.1 24.7 2.1-36.1 2.1-20.8 4.2 1.1 2.1 6.5 2-5.7 2.1 1.6 0.8 28.7 0.2 30.1-1 70.6-2.1-0.1-2 1.3-4.2-2-2.1 0.4-2.1-5.6-2.1 14-2.1 0.3-2.1-1.4-2.1 1.3-4.2-1.2-2.1 1-2.1 3.2-2.1-13.2-2.1 11.9-2.1 0.2-2.1-0.3-2-11.7-2.1 12.6-2.1 5-2.1-1.2-2.1-14.5-2.1 16.5-2.1-1.5-2.1-0.1-2.1-1.7-2.1-5.8-2.1 6.9-2.1-18.2-2.1 22-1.3-28.5-0.4-30.1 0.4-60.2 1.3-25.9 2.1-3.8 2.1 8.4zM1791.7 1360.8l-0.6 18.3 0.6 36.3 0.5-36.3zM1798 1320.9l-1.1 58.2 0.3 30.1 0.8 25.3 0.8-25.3 0.3-30.1zM1175.3 1349l0.7-0.3 0.1 0.3 1.3 30.1 0.7 28.3 0 3.1-2.1 21-2.1-1.1 0-79.4zM1182 1349l0.3-8.3 2.1-5.2 2.1 3.4 0.6 10.1-0.3 90.3-0.3 6.6-2.1 2.9-2.1-4.1-0.2-5.4-0.4-30.1zM1191.2 1349l1.6-11.6 2.1-4.6 2.1 1.9 2.1 0.7 2.1-2.6 0.7 16.2 0.6 90.3-1.3 12.7-1.2-12.7-0.9-19.4-1 19.4-1.1 10.6-2.1 0.5-2.1-4.5-2.1-6.6 0.9-30.1 0.3-30.1zM1204.7 1349l0.7-14.6 2 12.2 2.1-13.4 2.1-2.2 1.6 18 0.5 25.8 0.6-25.8 1.5-16.5 4.2-1.8 2.1 1.4 2.1-0.9 1.1 17.8-0.3 30.1 0.4 60.2-1.2 13-2.1 0.1-2.1 1.8-2.1-6.1-2.1 7.2-1.4-16-0.7-28.5-2.1 1.7-2.1 40-2.1-5.1-2 3.2-1.4-11.3zM1841.6 1349l0.3-11.6 2.1-2.5 2.1-0.5 0.4 14.6 1.7 28.6 0.9 1.5 1.2 30.1-2.1 21.4-2.1 7.4-2.1-3.8-2.1-2.2-0.5-52.9zM1851.7 1349l0.7-9.4 2.1 2.3 2.1-2.7 2.1-1.7 0.1 41.6-2.2 54-2.1-72.3-2.1 68-2.1-19.6zM1862.6 1349l0.3-10 0.7 10 0.4 30.1-0.2 30.1-0.9 26-1-26zM1866.6 1349l0.5-6.6 2.1 1.5 0.5 5.1 0.8 30.1-1.3 26.9-2.1 20.7-0.7-17.5-0.2-30.1zM1873.1 1349l0.2-1.8 2.1-0.1 0.2 1.9 0.4 30.1-0.1 30.1-0.5 11.7-2.1-2.9-0.8-8.8-0.4-30.1zM1879.6 1349l2.1-4.6 2.1-6.5 2.1 1.1 1.1 10 1 52.3 1-52.3 1.1-10.2 2.1 2.7 2.1-0.1 0.6 37.7 0 30.1-0.6 19.1-2.1 6.9-2.1 0.9-2.1-17.9-2.1 18.8-2.1 2.5-2.1-12.2-2.1-7.4-0.4-10.7-0.1-30.1zM1898 1349l0.5-10.5 2.1 3 2.1-1.5 2.1 0.7 2-1.7 2.1 2.7 0.6 7.3 0.9 60.2-1.1 30.1-2.5 2.6-1.6-2.6-0.5-1.7-2-19-2.1 19.8-0.6 0.9-1.5 0.9-0.7-31zM1912.6 1349l0.5-7.4 0.7 7.4-0.7 4.9zM1916.5 1349l0.8-9.6 0.6 9.6 0.5 30.1-0.2 30.1-0.9 29-0.3 1.1-1.8 2.4-0.5-2.4-0.1-60.2 0.6-16.1zM1920.8 1349l0.7-9.5 2.1 2.7 2.1-4.7 1.1 11.5 1 25.4 1.1-25.4 1-7.8 2.1 4.2 2.1-1.6 1.6 5.2-1 30.1-0.6 61-2.1-38.1-2.1 41.3-1.7-4-0.4-5.1-0.4 5.1-1.7 5.6-2.1-5.3-2.1 2.9-0.2-3.2-0.8-30.1-0.1-30.1z"/>
<path fill="#f6c844" stroke="#f6c844" d="M1357.8 1288.8l0.4-3.8 2.1 13.4 2.1-17.5 2.1 1.5 2.1 3.4 2.1-5.2 2.1 1.8 2.1-1.3 2.1 2.2 2.1-6.3 2.1 2.4 2 1 2.1 3 1.6 5.4 0.5 3.6 2.1-15.4 1 11.8 1.1 24.4 2.1-31.2 2.1 23.6 2.1-24.5 2.1-0.3 2.1 1.8 2.1-2.3 2.1 0.1 2.1 44.6 2.1-44 2.1 0.9 2.1-2.3 2.1-1.3 0.8 10.5 1.2 30.1-0.9 150.5-1.1 12.7-2.1 8.5-2.1-0.8-2.1 0.4-2.1 2.6-2.1-2.5-2.1 1.2-4.2 0.9-2.1-1.8-2.1-39.9-2.1 37.9-1.5-19.2-0.6-13-0.4 13-1.7 25.2-4.2-5.7-2.1 1.4-2 0.3-2.1 1.1-2.1-3.1-2.1 1.8-2.1-3.3-1.2-17.7-0.1-30.1-0.8-13.1-0.7 13.1-0.1 30.1-1.3 21.7-2.1-1.8-2.1 1.1-4.2-2.9-2.1-27.6-2.1 22.7-2.1 0.8-4.2-0.3-2-6.2-2.1 1.8-2.1 7.3-2.1-3.9-2.1 0.3-2.1 1.8-2.1-0.6-1.1-14.2-1-27-2.1 32.3-2.1-10.9-2.1-2.6-2.1 11.3-2.1-27.4-2.1 26.4-4.2 0-2.1 3.8-2 2.3-4.2-5.4-0.7-2.8-1.1-30.1 0.3-30.1-0.6-14.3-0.5 14.3 0.1 30.1-1.1 30.1-0.6 2-2.1 3.1-4.2-7.4-2.1 4.8-2.1-32.1-2.1 31.9-2.1-1.8-2.1-0.1-1.8-30.5-0.3-17.2-0.3 17.2-1.8 24.5-2.1-8.9-2 8.7-2.1 2.7-2.1-3.5-2.1-2.3-2.1-18.4-2.1 20.6-2.1-3.3-4.2 0.9-2.1-2.7-2.1-5.5-2.1-2-2.1-3-1.6-7.8-0.5-7.1-0.5 7.1-1.6 7-2.1 1.9-2.1 3.5-0.4-12.4-1.6-24.5-2.1 35-2.1-45-2.1 47.3-2.1-5.3-2.1 4.1-2.1 1.2-0.9-12.8 0-90.3 0.9-16.2 2.1 0.8 1.8 15.4 0.3 4.6 2.1-20.4 2.1 0.7 2.1 1.8 2.1-3.2 2-1.6 2.1 5.4 2.1 2.7 2.1 9.4 2.1-11.2 2.1-4.2 2.1 49.6 2.1-58 2.1-3.2 2.1-1.2 2.1 2.4 2.1-2 2.1 21.7 2.1-23.7 2.1 1.8 2.1-4.4 1.3 2.9 0.8 5.4 4.1-7.7 1.9 32.4 0.2 12.4 2.1 0.3 1.4-42.8 0.7-8.7 2.1-1.3 2.1 2.8 2.1 15.5 2.1-17.8 2.1-1.1 2.1-2.4 2.1 6.2 2.1-6.6 1.9 13.4 0.2 6.8 0.1-6.8 2-15.6 2.1 2.4 2-0.2 2.1 1.3 2.1 0.3 4.2-1.4 4.2-3.6 2.1 0.4 2.1 3.3 2.1 30.7 0.4-17.6 1.7-28.2 2.1 0.4 2.1-0.1 2.1-1.2 2.1 13 2.1-7.7 2.1-4.2 4.1-0.6 2.1-1 2.1 1.1 2.1 21.9zM1383.3 1336.7l-0.7 42.4 0.7 32.2 0.7-32.2zM1417.9 1288.8l1-14.4 2.1-0.8 2.1 1.3 2.1-0.6 2.1 2.5 2.1-3.3 2.1-1.4 2.1-1.3 4.2-1 2.1 8.1 2.1-8.2 2.1 0.6 1.3 48.6 0.8 13.3 0.8-13.3 1.3-47.3 2.1 27.2 2-27.3 2.1 23.5 2.1-27.9 4.2 5.5 2.1-3.2 2.1 0.4 2.1-1.8 2.1 0.3 2.1-0.6 2.1 1.6 4.2 1.6 0.9 17.9 1.2 53.6 1.1-53.6 1-18.6 2.1 18.2 2-20.8 2.1-2.9 2.1 4.3 2.1-1.9 2.1 2.4 2.1-2.7 2.1 1.3 2.1 0.2 1.5 20.5-0.2 60.2 0.8 17.5 0.8-17.5-0.1-60.2 1.4-18.8 2.1-1.8 2.1-0.1 2.1 8.9 2.1-11.6 2.1-1.5 2.1 1.9 2.1 57.2 2-56.9 4.2-0.5 2.1-1.6 2.1 17.4 2.1-7.1 2.1 6.4 2.1-15.8 2.1 1.2 2.1 0.3 2.1-1 2.1 14.3 2.1-17.3 2.1 1.6 2.1-1.9 2.1 31.2 2.1-26.9 2-1.1 2.4 23.5 1.5 30.1 0.3 14.4 1-44.5 1.1-20.9 2.1-1.2 2.1 2.3 2.1-1.8 2.1 1.9 2.1-1.6 4.2 6.3 2.1-3.4 2.1 1.1 2.1-3.5 4.2 4.5 2-0.8 2.1-4.7 2.1 44.7 2.1-39.6 2.1-1.9 2.1 66.8 2.1-62.1 2.1 25.3 2.1-27.4 2.1-0.8 2.1 4.9 1 11.9 1.1 20.4 1.2-20.4 0.9-7.2 2.1-7 2.1-0.5 4.2 3.3 2-0.3 2.1-1.2 2.1 0.1 2.1 2.5 2.1-0.4 1.4 40.8 0.4 60.2-0.3 60.2-1.5 50.3-2.1 2.2-2.1 0.8-2.1-0.2-2.1-31.8-2 30.8-2.1 0.9-2.1 1.9-2.1-0.8-2.1-0.2-2.1-33.8-2.1 35-2.1-36.9-2.1 37.9-2.1-1.4-2.1-18.2-2.1-8.8-2.1 7.6-2.1 23.1-2.1 2.2-2.1 1.4-2.1-3.9-2-0.5-2.1-13.3-2.1 15.2-2.1-6.5-2.1 3.3-2.1 0.7-2.1 2-2.1 2.9-2.1-13.8-2.1 15.1-2.1-2.1-4.2 0.4-1.4-31.4-0.7-36-1.2 36-3 33-2-3-2.1 4.3-2.1-41.3-2.1 42.1-2.1 2-2.1-2.9-2.1-1.8-2.1 0.7-2.1 1.9-2.1-3.5-2.1 1.6-2.1-9.8-2.1-6.7-2.1 11-2.1 5.7-2.1-1.3-2.1 0.7-2 0.1-2.1-1.3-2.1 3.3-2.1-2-2.1-10.7-2.1 11.9-2.1-4.8-2.1 1.6-2.1 0-0.8-0.7-1.3-47.3-2.1-8.1-2.1 56.1-2.1 0.3-2.1 3.3-2.1-12.3-2.1 12-2.1-2.4-2 0.9-2.1-3.3-1.5-29.3-0.6-40.9-0.8 40.9-1.3 30.7-2.1-1.5-2.1 1.7-2.1 0.4-2.1-1.5-2.1 1.7-2.1-13-2.1 9.9-2.1 0.5-2.1 3-2.1-31.5-2.1 27.8-2.1-0.8-2 2.7-2.1-1.4-2.1 4.2-2.1-2.9-2.1-18.3-2.1 17.8-2.1 0-2.1 1.3-4.2-0.6-4.2-5-2.1-0.5-2.1 2.5-2.1-1-2.1 0.7-1.2-26.9-0.1-60.2-0.6-60.2-0.1-30.1zM1475.5 1347.8l-0.2 31.3 2.3 20.2 1.3-20.2-1.3-22.8-1.5-7.3zM1544.6 1291.6l-0.9 27.3 0.9 25 0.9-25zM1582.3 1418l-0.3 21.3 0.3 7.9zM1638.7 1288.8l0.1-2.8 2.1 0.5 0.4 2.3 1.5 30.1 0.2 22.1 0.2-22.1 1.5-30.1 0.4-2.1 2.1 1.1 2.1 0 2.1-11.5 2.1 0.7 2.1 1.6 2.1 0.2 2.1-1.1 1.4 11.1 0.6 50.8 0.7-50.8 1.4-10.6 2.1 8.2 2.1 1.9 2.1-2 2.1-0.3 2.1 3.7 1.9 29.2 0.2 22.5 0.3-22.5 1.8-24.4 2.1-11.5 2.1 1.5 2.1 4.1 2.1-2.6 2.1 0.2 2.1-0.5 2.1 0.6 1 32.6 0.3 30.1-0.1 60.2-0.5 30.1-0.7 20.6-2.1 19.3-2.1 0.8-2.1 2.1-2.1-20.2-2.1 21-2.1 0.8-2.1-10-2.1 5.4-2.1 0-2.1 1.7-1.9-11.4-0.2-20.8-0.2 20.8-1.9 9.5-2.1 1.8-2.1 10.7-2.1-2-2-0.9-2.1 1.5-2.1-0.5-2.1 4.5-2.1-12.6-2.1 9.7-2.1-8.6-2.1-3.2-4.2 3.3-2.1 0.3-1.4-43.6-0.3-60.2 0.5-60.2zM1696.5 1318.9l0.9-27.2 2.1 1.1 2.1-1.5 1.8 27.6-0.3 30.1 0.6 37.8 0.7-37.8-0.3-30.1 1.7-26.2 2.1 1.1 2.1 0.1 2.1 3.7 2.1 16.3 2.1-19.2 2.1 2 2.1-0.7 2.1 4.1 2.1 6.5 2.1-9.6 2.1-0.9 2-2.1 2.1 0.9 2.1 2.9 2.1 8.2 2.1-5.8 2.1-2.5 2.1 0.2 2.1 9.7 2.1-6.2 2.1 6.7 2.1-9 2.1 3.2 2.1-2.2 2.1 0.9 1.1 48 1 13 2.1-13 2.1-46.9 2-0.2 2.1 1.2 0.8 15.8 0.7 30.1 0 60.2-0.4 30.1-1.1 14-2.1 10.9-2-0.8-1.9-24.1-0.2-10.9-0.3 10.9-1.8 24.2-1.3-54.3-0.8-21.7-0.9 21.7-1.2 57.3-2.1-2.3-2.1 2.4-2.1-8.9-0.6-18.4-1.5-27.8-2.1 8.6-2.1 49.2-2.1-0.3-2.1-3-2.1-2-2.1 5-2.1 1.9-2.1-9.4-2-4.9-2.1 13.6-2.1 1.5-2.1-5-2.1 3.7-2.1-0.8-2.1 3.1-2.1-2-2.1 0.2-4.2 2.4-4.2-0.1-2.1 3.9-2.1-1.8-2.1 0.5-1.1-36.5-0.2-30.1zM1716.3 1367.6l-0.8 11.5-0.3 30.1 1.1 19.5 1-19.5-0.4-30.1zM1778.2 1318.9l0.9-9.4 2.1-1.2 2.1 0.6 0.5 10 0.3 30.1 1.3 37.3 1.2-37.3 0.2-30.1 0.7-12.9 2.1 6.5 2.1-1.8 2.1-3.3 2.1 4.7 1.2 6.8-0.4 60.2 0.9 60.2-1.7 14.4-2.1 4.7-2.1-6.2-2.1-10-2.1 17.2-2.1-1.2-2.1-0.4-2.1-1.7-2.1-5.9-2.1 5.7-2.1-20.8-2.1 25.1-0.9-20.9-0.4-30.1 0-30.1 0.6-30.1 0.7-15 2.1-0.8 2.1 6.2zM1791.7 1351l-0.9 28.1 0.1 30.1 0.8 17.7 0.7-47.8zM1799 1318.9l1-5.5 2.1 1 2.1-1.2 2.1 0 2.1-0.9 2.1 2.1 2.1 1.3 2.1 0.4 2.1-2 4.2 0.9 0.5 3.9 0.3 30.1 1.3 29.9 2.1-33.3 2.1-19.7 4.2 1.8 2.1 4.1 2-3.6 2.1 2.2 0.7 48.7-0.7 63.7-2.1 0.3-2 1-4.2-2.3-2.1 0.5-1.1-3-1-6.8-0.4 6.8-1.7 12-2.1 0.4-2.1-1.5-2.1 1.3-4.2-1.4-2.1 0.7-2.1 3.5-2.1-11.1-2.1 9.9-4.2-0.5-1.7-13.3 0.7-30.1 0.2-30.1zM1182.3 1349l2.1-5.4 2.1 3.7 0.1 1.7 0.2 30.1-0.3 56.4-0.8 3.8-1.3 2-1-2-1.1-6.2-0.3-54zM1192.3 1349l0.5-3.7 2.1-5 2.1 2 2.1 1.2 2.1-2.6 0.3 8.1 0.3 60.2-0.1 30.1-0.5 5.2-2.1-40.5-2.1 38.7-2.1 0.6-1.8-4-0.3-2.1-0.7-28zM1205 1349l0.4-6.8 1.1 6.8 0.9 15.8 0.9-15.8 1.2-8.2 2.1-1.6 0.9 9.8 0.6 30.1-3.6 66.2-2.1-5.7-2 3.7-0.5-4zM1214.9 1349l0.9-9.3 4.2-1.2 2.1 1.5 2.1-0.3 0.6 9.3-0.1 90.3-0.5 5.4-2.1 0.4-2.1 1.9-2.1-3.9-2.1 4.9-0.7-8.7-0.8-30.1 0-30.1zM1841.9 1349l0-1 2.1-2.6 2.1-0.7 2.6 64.5-0.5 4.8-2.1 8.2-2.1-3.6-2.1-2.5zM1862.8 1349l0.7 30.1-0.6 41-0.4-10.9zM1883.3 1349l0.5-1.7 2.1 1 0.8 30.8 0.1 30.1-0.9 10.6-2.1 2.6-2.1-13.2-1.4-30.1 1.4-10.2zM1890 1349l0.1-1 0.8 1 1.3 6.3 2.1-2 0.3 25.8-0.3 36.6-4.2 3.4-0.9-9.9 0.1-30.1zM1898.4 1349l0.1-1.6 1.2 1.6 0.9 4.4 1.5-4.4 0.6-0.4 0.6 0.4 1.5 3.7 0.8-3.7 1.2-1.3 1.1 1.3 1 4.8 0.6 55.4-0.6 12.1-2.1 5.6-4.1-18.9-2.1 12.3-2.1 3.4-0.4-44.6zM1917.2 1349l0.6 30.1-0.2 30.1-0.3 11-2.1 7.5-0.3-48.6 0.3-7.5zM1921.4 1349l0.1-1.7 1.2 1.7 0.9 5.9 0.7-5.9 1.4-3 0.3 3 1 30.1 0.4 30.1-1.7 24.5-2.1-13.2-2.1 9.1-0.5-20.4-0.1-30.1zM1175.6 1379.1l0.4-0.5 0.1 0.5-0.1 9.4zM1851.8 1379.1l0.6-26 0.5 26-0.5 33.8-0.4-3.7zM1855.9 1379.1l0.7-29.2 1.1 29.2-1.1 38.1zM1866.8 1379.1l0.3-15.8 2.1 10 0.1 5.8-2.2 30.9zM1928.7 1379.1l1.2-29.3 1.5 29.3-0.6 30.1-0.9 19.9-1.6-19.9zM1932.7 1379.1l1.4-18.6 0 59.4-0.6-10.7z"/>
<path fill="#f1a139" stroke="#f1a139" d="M1362.1 1288.8l0.3-2.9 2.1 1.6 2.1 2.9 2.1-4.5 2.1 1.5 2.1-1 2.1 2.2 2.1-6.3 2.1 2.4 2 1.1 1.9 3 2.3 14.8 1.2-14.8 0.9-6.3 2.1 43.7 2.1-38.5 2.1 25.7 2.1-26 2.1-0.6 2.1 0.8 2.1-1.3 2.1-0.2 2.1 43.2 2.1-42.2 2.1 0.7 4.2-3.6 1.7 34.7-1 150.5-0.7 8.8-2.1 5.8-2.1-0.5-2.1 0.3-2.1 2.7-2.1-2.1-4.2 1.5-2.1 0.3-2.1-2.2-2.1-39.2-2.1 37.8-1-13.2-1.1-24.3-0.8 24.3-1.3 19.4-4.2-6.2-2.1 2-2 0.3-2.1 1.1-2.1-3.1-2.1 1.8-2.1-3.2-0.8-12.1-0.4-30.1-0.9-16.2-0.9 16.2-0.3 30.1-0.9 16.2-2.1-1.9-2.1 1.1-2.1-1.8-2.1-1.1-1.1-12.5-1-19.1-2.1 26.4-2.1 0.9-4.2-0.1-2-5.1-2.1 0.6-2.1 7.6-2.1-3.8-2.1 0.1-2.1 2-2.1-0.5-1.9-39.1-0.2-18.6-0.5 18.6-1.6 28.4-2.1-12.1-2.1 1-2.1 9.5-2.1-31.4-2.1 30.2-2.1 0-2.1-0.6-1.9 5.1-2.2 2.8-2.1-2.8-2.1-4.2-1.3-25.9 0.2-30.1-1-23.9-0.7 23.9-0.1 30.1-1.3 25.6-2.1 4-4.2-8.3-2.1 5.2-2.1-32.5-2.1 32.1-2.1-2.2-2.1-0.8-1.4-23.1-0.4-30.1 0.6-30.1 1.2-6.9 2.1-56.5 2.1-1.1 2.1 2.8 2.1 15.5 2.1-17.7 2.1-1.2 2.1-2.3 2.1 6.3 2.1-6.2 1 7.1 1.1 35.7 0.9-35.7 1.2-9.7 6.2 4.1 2.1 0 4.2-0.8 2.1-2.7 2.1-1.4 2.1 0.8 2.1 5.4 0.4 4.3 0.7 30.1-1.1 2.3-0.5 27.8 0.5 24.1 1.4-24.1 1.5-60.2 1.3-22.4 2.1 0.5 2.1 0 2.1-1.4 2.1 11.5 2.1-5.7 2.1-4.2 4.1-0.4 2.1-1 2.1 1.1 2.1 24.5 2.1-31.1 2.1 11.8zM1383.3 1329.6l-0.8 49.5 0.8 38.6 0.9-38.6-0.2-30.1zM1418.3 1288.8l0.6-8.5 2.1-0.8 2.1 1.3 2.1-0.6 2.1 2.5 2.1-3.4 4.2-2.5 4.2-1 2.1 8.4 2.1-8.6 2.1 0.6 1.1 42.7 1 16.5 1-16.5 1.1-41.3 2.1 30 2-29.9 2.1 25.8 2.1-30.3 4.2 5.6 2.1-3.2 2.1 0.4 2.1-1.9 2.1 0.2 2.1-0.4 4.2 2.6 2.1 1.8 1.1 40.6-1.1 24.4-2.1-1.7-0.4 37.5 0.4 8.2 2 21.9 1.6 30.1-0.5 30.1-1 23.2-2.1-0.3-2.1 1.7-2.1 0.4-2.1-1.5-2.1 1.9-2.1-13.8-2.1 10.3-2.1 0.6-2.1 3.5-2.1-29.9-2.1 25.6-2.1-0.7-2 2.5-2.1-1-2.1 4.6-2.1-3.2-2.1-16.4-2.1 15.7-2.1 0.1-2.1 1.5-4.2-0.7-4.2-5.1-2.1-0.6-2.1 2.7-2.1-1.1-2.1 0.7-0.9-20.7-0.8-120.4 0-30.1zM1481.1 1288.8l0.7-12.4 2.1 18.6 2-21.1 2.1-2.9 2.1 4.2 2.1-1.7 2.1 2.4 2.1-2.8 2.1 1.3 2.1 0.2 1 14.2 0.2 60.2 0.9 21.1 0.9-21.1 0.3-60.2 0.9-12.5 2.1-1.9 2.1 0 2.1 9.5 2.1-12.3 2.1-1.5 2.1 1.9 2.1 54.6 2-54.2 2.1 0 2.1-0.4 2.1-1.7 2.1 18.4 2.1-7.6 2.1 3.1 2.1-13.1 2.1 1.3 2.1 0.4 2.1-1.1 1.8 17.1-0.8 30.1 1.1 29.4 1-29.4-0.8-30.1 1.9-20.2 2.1 1.8 2.1-2.3 2.1 34.7 2.1-30 2-1.1 1.8 17.1 1.6 30.1 0.8 54.3 0.5-54.3 1.6-44.6 2.1-1.3 2.1 2.3 2.1-1.8 2.1 2.1 2.1-1.7 4.2 6.6 2.1-3.5 2.1 0.9 2.1-3.7 4.2 5 2-1.2 2.1-4.7 2.1 42.9 2.1-37.8 2.1-1.5 2.1 68.8 2.1-64.3 2.1 28 2.1-30.2 2.1-0.9 2.1 5 2.1 37.5 1.8-32 0.3-2.3 2.1-5.7 2.1-0.3 4.2 3.3 2-0.4 2.1-1.2 2.1 0.1 2.1 2.5 2.1-0.2 1.1 34.3 0.4 30.1-0.2 90.3-1.3 43.5-2.1 2.5-2.1 0.8-2.1-0.2-2.1-29.9-2 28.8-2.1 0.8-2.1 1.9-4.2-0.9-1.3-17.2-0.8-22.3-0.8 22.3-1.3 18.4-2.1-34.4-2.1 35.5-2.1-2-1.7-17.5-0.4-18.3-2.1 4-2.1 10.9-2.1 25.3-2.1 2.3-2.1 1.5-2.1-4.2-2-0.6-2.1-10.4-2.1 12.5-2.1-13-2.1 3.3-2.1 6.8-2.1 2.2-2.1 3.1-2.1-14.6-2.1 16.2-2.1-2.4-4.2 0.3-1.1-24.9-0.7-30.1-0.3-54.3-0.5 54.3-1.2 30.1-2.5 25.5-2-1.4-2.1 3.9-2.1-39.6-2.1 40.9-2.1 1.8-2.1-3.1-2.1-1.8-2.1 0.6-2.1 2.2-2.1-3.8-2.1 1.8-4.2-17.8-2.1 11.7-2.1 6.1-2.1-1.8-2.1 1.3-2-0.1-2.1-1.2-2.1 3.6-2.1-2.2-2.1-11.5-2.1 12.8-2.1-5.1-2.1 1.7-2.1-0.3-1.3-24.2-0.8-30.1-2.1-0.8-2.1 55.2-2.1 0.5-2.1 3.6-2.1-11.1-2.1 10.7-2.1-2.5-2 0.9-2.1-2.8-1.2-23.6-0.6-30.1-0.2-90.3 0.4-30.1zM1582.3 1405.4l-0.8 33.9 0.8 20.4 0.4-20.4zM1650.2 1288.8l1.2-6.4 2.1 0.7 2.1 1.7 2.1 0.2 2.1-1.3 0.6 5.1 1.4 62.6 1.5-62.6 0.6-4.7 2.1 9.4 2.1 2.4 2.1-2.7 2.1-0.2 2.1 4 1.4 21.9 0.7 35.5 0.9-35.5 1.2-16.6 2.1-13.3 2.1 1.7 2.1 5.6 2.1-3.7 4.2-0.4 2.1 1 0.8 25.7 0.3 60.2-0.7 60.2-0.4 11.8-2.1 21.4-4.2 3.5-2.1-22.9-2.1 23.6-2.1 0.8-2.1-11.5-2.1 6.6-2.1 0.3-2.1 1.3-0.8-4.8-1.3-48.4-1.5 48.4-0.6 2.9-2.1 1.9-2.1 11.1-2.1-2.2-2-1-2.1 1.4-2.1-0.5-2.1 4.7-2.1-13.1-2.1 10.1-2.1-9-2.1-2.1-2.1 0.3-2.1 1.8-2.1 0.4-1.1-36.8-0.2-90.3 0.4-30.1 0.9-25.5 2.1 0.9 1.5 24.6 0.6 41.5 0.6-41.5 1.5-24.4 2.1 1.3 2.1-2.7zM1696.8 1318.9l0.6-19.7 2.1 0.9 2.1-1.7 1.3 20.5-0.1 30.1 0.9 45.8 1-45.8-0.1-30.1 1.2-18.9 2.1 1 2.1 0.1 2.1 3.7 2.1 16 2.1-18.8 2.1 1.9 2.1-0.7 2.1 4.1 2.1 11.5 2.1-14.8 2.1-1 2-1.7 2.1 0.4 2.1 2.9 2.1 7 2.1-4.6 2.1-2.5 2.1 0.2 2.1 10.1 2.1-6.7 2.1 7 2.1-9.4 2.1 3.2 2.1-2 2.1 0.9 0.8 41.2 1.3 17 2.1 5.6 0.4-22.6 1.7-40.1 2-0.4 2.1 1 1.2 39.5 0 60.2-0.4 30.1-0.8 9.7-2.1 8.2-2-1-1.3-16.9-0.8-34.8-0.8 34.8-1.3 17.2-1-47.3-1.1-27.7-1.1 27.7-1 50.2-2.1-2.2-2.1 2.5-2.1-9.5-2.1-43.8-2.1 8.1-2.1 47.7-2.1-0.4-4.2-5.4-2.1 5.5-2.1 2-2.1-10.5-2-1.8-2.1 11.3-2.1 1.6-2.1-5.6-2.1 3.8-2.1-1-2.1 0.7-2.1 0.1-4.2 2-2.1 1.8-2.1 0-2.1-0.5-2.1 5.2-2.1-2.1-2.1 0.5-0.8-30.1-0.3-30.1 0.1-60.2zM1716.3 1363.3l-1.1 15.8-0.2 30.1 1.3 23.6 1.2-23.6-0.3-30.1zM1778.8 1318.9l0.3-2.8 2.1-1.6 2.1 0.7 1.4 63.9 0.7 13.2 0.7-13.2 1.4-66.8 2.1 5.2 2.1 1 2.1-4.7 2.2 5.1 0.7 30.1 0.1 90.3-0.9 7.8-2.1 4.4-2.4-12.2 1.1-30.1 0.2-30.1-1-58.2-1.3 58.2 0 30.1-1.3 30.1-1.6 13.4-4.2-1.7-2.1-1.6-2.1-6.1-2.1 4.6-1-8.6-1.1-23.5-0.8 23.5-1.3 13.2-0.6-13.2-0.3-30.1 0-30.1 0.7-30.1 0.2-4 2.1 2.2 2.1 5.2zM1807.4 1318.9l1-0.5 2.1 3.6 2.1 1.8 2.1 0.5 2.1-3.7 2.1 1.2 2.1 0.1 0.6 27.1 1.5 37.8 1.2-7.7 1.6-30.1 1.4-12.4 2.1 1.4 2.1 0.4 2.1 0.9 2-1.5 2.1 2.7 0.3 8.5 0.2 30.1-0.5 52.4-4.1 3.3-2.1-3.4-2.1-2.4-2.1 1.7-2.1-14.9-1.3 23.5-0.8 5.7-2.1 0.4-2.1-1.7-2.1 1.4-2.1-1.1-2.1-0.6-2.1 0.5-2.1 3.8-2.1-9.8-2.1 8.6-4.2-0.9-0.8-6.3 0.1-90.3 0.7-28.4 2.1 1.5 2.1-2.6 2.1 0.4zM1194.4 1349l0.5-1.1 1.2 1.1 0.9 3.2 2.1 19.6 2.1-22.8 0.3 60.2-0.3 22.8-2.1-50.6-2.1 46.9-2.1 2.2-2.1-14.3 0-51.4zM1209.5 1349l0-0.5 2.1-1.2 0.7 31.8-1.8 30.1-1 26.4-2.1-26.3-2 20-0.3-20.1 0.3-56.7 1.5 26.6 0.5 29.9 0.5-29.9zM1215.6 1349l0.2-2.1 2.1 0 2.1-0.6 2.1 1.6 2.1 0.3 0.3 30.9-0.3 53-2.1 2.7-1.6 4.5-0.5 0.4-2.1-4.8-1.2 4.4-0.9 1.3-0.9-31.4 0-30.1zM1228 1349l0.4-7.6 2.1 0 0.9 7.6 1.2 23.5 1.2-23.5 0.9-7.6 2.1 0.8 2.1 1.8 2.1-3.6 2-0.7 2.1 5.4 2.1 2.9 0.3 1 1.8 30.1-0.2 30.1-1.9 27.4-0.8 2.7-1.3 1.3-2.1 3.6-2-33.5-2.1 31.7-1.2-33.2-0.9-14-0.9 14-1.2 35.6-2.1-5.4-2.1 4.4-2.1 0.8-0.4-5.3zM1250.9 1349l0.5-2.6 2.1-4.7 2.1 55.9 2.1-64.6 2.1-3 2.1-1.6 2.1 2.6 2.1-1.7 1.8 19.7 0.3 10.9 0.2-10.9 1.9-21.9 2.1 1.8 2.1-5.6 2.1 21 2-14.5 2.1-4.9 1.4 24.1 0.5 30.1-0.1 30.1-0.6 30.1-1.2 16.6-2.1-6.1-2 6-2.1 3.1-2.1-3.4-2.1-2.3-1.6-13.9-0.5-17.6-0.5 17.6-1.6 16-2.1-3.1-2.1 0.7-2.1 0-2.1-2.4-2.1-6.7-2.1-1.2-2-3.3-2-30.1-0.2-30.1zM1182.3 1379.1l0-3.2 2.1-16.9 2.1 14.7 0 37.5-2.1 11-2.1-11.4zM1843.4 1379.1l0.6-2.5 2.1-5.4 0 24.2zM1883.7 1379.1l0.1-1.4 0.7 1.4-0.7 4.3zM1898.4 1379.1l0.1-2.3 0.5 2.3-0.5 8.1zM1906.3 1379.1l0.5-3.1 0.8 3.1-0.8 17.3zM1921.4 1379.1l0.1-7.6 1.1 7.6-0.6 30.1-0.5 2.2zM1924.6 1379.1l1.1-9.2 0.3 9.2-0.3 33.1-0.5-3z"/>
<path fill="#ee7c30" stroke="#ee7c30" d="M1376.7 1288.8l0.4-1.1 2.1 2.5 2 1.6 2.1 17.7 2.1 5.4 2.1-26.9 1.6 30.9 0.5 26 0.6-26 1.5-24.7 2.1 28.5 2.1-27.9 2.1-1.3 2.1 0.3 4.2-1.5 2.1 41.4 1-14.8 1.1-24.8 2.1 0.7 4.2-4.3 1.3 28.4 0.1 30.1-0.5 90.3-0.5 30.1-0.4 4.9-2.1 3.2-4.2-0.1-2.1 2.7-2.1-1.6-4.2 1.3-2.1 0.3-2.1-2.7-2.1-38.7-2.1 38-1.9-37.4-0.2-14-1.2 44.1-0.9 13.6-4.2-6.6-2.1 2.4-4.1 1.4-2.1-3-2.1 1.8-2.1-3.1-0.5-6.5-0.5-30.1-1.1-19.3-1.1 19.3-0.4 30.1-0.6 10.7-2.1-2-2.1 1.1-2.1-1.9-2.1-1-2.1-35.6-2.1 30.2-2.1 0.9-2.1-0.2-2.1 0.3-2-4.7-2.1-0.7-2.1 8.7-2.1-3.8-2.1 0-2.1 2.2-2.1-0.4-0.3-3.8-1.3-30.1-0.4-60.2 0.2-30.1 0.8-30.1 1-16.7 2.1 0.8 2.1 0 2.1-1.6 2.1 9.9 4.2-7.8 4.1-0.2 2.1-1.1 2.1 1.2 1.4 15.5 0.7 17.2 0.5-17.2 1.6-22.3 2.1 9.3 2.1-14.4 4.2 4.1 2.1-3.9 2.1 1.5 2.1-0.8 2.1 2.6zM1383.3 1322.4l-0.7 26.6-0.3 30.1 1 45 1.1-45-0.2-30.1zM1418.8 1288.8l0.1-2.6 2.1-0.8 2.1 1.3 2.1-0.6 2.1 2.6 2.1-3.6 4.2-2.3 4.2-1.1 2.1 9.2 2.1-9.4 2.1 0.5 0.9 36.9 1.2 19.6 1.1-19.6 1-35.2 2.1 32.7 2-32.6 2.1 28.1 2.1-32.5 4.2 5.6 2.1-3.2 2.1 0.4 2.1-2 4.2-0.1 4.2 2.7 2.1 3 0.6 33.1-0.6 13.8-2.1 2.8-0.5 13.5-0.1 30.1 0.6 12.9 1.5 17.2 1.6 30.1-0.4 30.1-0.6 15.5-4.2 2.8-2.1 0.4-2.1-1.5-2.1 1.9-2.1-14.3-2.1 10.7-2.1 0.7-2.1 3.6-2.1-28-2.1 23.4-2.1-0.6-2 2.3-2.1-0.7-2.1 4.7-2.1-3.1-2.1-14.6-2.1 13.8-2.1 0.1-2.1 1.6-4.2-0.8-2.1-2.2-2.1-2.9-2.1-0.7-2.1 2.9-2.1-1.2-2.1 0.8-0.6-14.6-0.4-30.1-0.5-90.3 0.1-30.1zM1481.4 1288.8l0.4-6.2 2.1 19.2 2-21.6 2.1-2.9 2.1 4.2 2.1-1.7 2.1 2.5 2.1-2.9 2.1 1.3 2.1 0.3 0.6 7.8 0.4 60.2 1.1 24.6 1.1-24.6 0.5-60.2 0.5-6.2 2.1-2.1 2.1 0.3 2.1 10.7 2.1-13.6 2.1-1.6 2.1 2 1.3 40.6 0.8 11.3 0.7-11.3 1.3-40.2 2.1 0.2 2.1-0.6 2.1-1.7 2.1 21.8 2.1-10.6 2.1-0.1 2.1-10.4 2.1 1.4 2.1 0.5 2.1-1.3 1.1 10.9-0.3 30.1 1.3 33.3 1.2-33.3-0.4-30.1 1.3-14 2.1 1.9 2.1-2.5 2.1 38 2.1-33.1 2-1.1 1.1 10.8 1.8 30.1 0.6 30.1 0.1 60.2-0.4 30.1-1.1 25.7-2.1 21.2-2 1.4-2.1 3-2.1-37.3-2.1 38.9-2.1 2-2.1-3.2-2.1-1.8-2.1 0.5-2.1 2.5-2.1-4-2.1 1.9-2.1-6.3-2.1-12.6-2.1 12.4-2.1 6.4-2.1-2.6-2.1 2.1-2-0.2-2.1-1.1-2.1 3.6-2.1-2.1-2.1-12.3-2.1 13.6-2.1-5.1-2.1 1.6-2.1-0.6-0.9-17.5-0.9-30.1-0.3-4.2-2.1-2.2-2.1 54.3-2.1 0.6-2.1 3.7-2.1-9.5-2.1 9-2.1-2.5-2 0.8-2.1-2-0.9-17.9-0.7-30.1-0.2-60.2 0.5-60.2zM1563 1288.8l0.4-8.1 2.1-1.4 2.1 2.4 2.1-1.9 2.1 2.4 2.1-1.9 4.2 6.9 2.1-3.6 2.1 0.7 2.1-3.9 4.2 5.5 2-1.6 2.1-4.8 2.1 41.7 2.1-36.6 2.1-1 2.1 74.5 2.1-70.2 2.1 30.8 2.1-33.2 2.1-0.8 2.1 5.3 1.6 28.9 0.5 23.1 0.5-23.1 1.6-26.4 1.3-3.7 0.8-1.8 2.1-0.1 4.2 3.7 2-0.6 2.1-1.6 2.1 0.2 2.1 3.1 2.1 0 0.9 27.2 0.3 30.1-0.2 90.3-1 36.8-2.1 2.7-2.1 0.8-2.1-0.1-2.1-28.2-2 26.8-2.1 0.9-2.1 1.9-4.2-0.9-0.8-10.6-1.3-42.4-1.3 42.4-0.8 11.9-2.1-32-2.1 33-2.1-2.4-1-10.5-1.1-41-1.4 10.9-2.8 16.5-2.1 29.1-2.1 2.3-2.1 1.5-2.1-4.2-2-0.9-2.1-7.5-2.1 9.9-2-16.6 0.5-30.1-0.2-30.1-0.4-8.9-0.5 8.9-1.4 60.2-2.3 13.3-4.2 5.6-2.1-15.2-2.1 17-2.1-2.5-4.2 0.2-0.8-18.4-0.7-30.1-0.3-60.2 0.5-60.2zM1651.3 1288.8l0.1-0.4 2.1 0.9 2.1 2.1 2.1 0.3 2.1-1.8 2 67.4 2.1-67 2.1 10.9 2.1 2.3 2.1-2.8 2.1 0 2.1 3.7 0.9 14.5 0.6 30.1 0.6 12 0.8-12 0.7-30.1 0.6-8.7 2.1-13.9 2.1 1.6 2.1 6.1 2.1-4.3 2.1-0.5 2.1 0.2 2.1 1.4 0.5 18.1 0.4 60.2-0.8 60.2-2.2 19.9-2.1 8.6-2.1 2.1-2.1-25.6-2.1 26.3-2.1 0.6-2.1-14.3-2.1 8-2.1 0.7-2.1 1.4-1.3-27.7-0.8-33.5-0.8 33.5-1.3 25.1-2.1 2.5-2.1 12.2-2.1-2.3-2-1.1-2.1 1.4-2.1-0.5-2.1 4.8-2.1-14.2-2.1 11.1-2.1-9.7-2.1-1.8-2.1-1.1-2.1 2.7-2.1 1-0.9-30.1-0.2-90.3 1.1-47.6 2.1 1.2 1 16.3 1.1 54.3 1.1-54.3 1-16.1 2.1 1.1 2.1-5.2zM1653.5 1370.3l-0.4 8.8 0.4 8 0.3-8zM1298.3 1318.9l1.3-1.3 2.1 8.8 2.1-8.3 1.3 30.9-1.5 30.1-0.8 30.1-0.1 30.1-1 18.3-2.1 4-4.2-7.6-2.1 4.9-2.1-32.3-2.1 31.7-4.2-3.3-0.9-15.7-0.3-30.1 3.3-86.8 2.1-1.5 2.1 4.3 2.1 13.4 2.1-16.5zM1307.5 1318.9l0.5-3.8 2.1 0.8 3.3 3 0.8 1.2 2.1-0.2 2.1-1.1 2.1 0.8 2.1-3.7 2.1-1.2 2.1 1.3 1 2.9 0.6 30.1-0.3 30.1 0.4 30.1 1.2 30.1-0.8 15.2-2.1-7.2-2.1 4.6-2.1 6.8-1.4-19.4-0.7-19.5-0.7 19.5-1.4 18.3-2.1-0.3-2.1-0.9-2.1 5.9-2 3.5-2.1-3.7-2.1-5.3-0.9-17.5 0.1-30.1 1.3-60.2zM1697 1318.9l0.4-12.3 2.1 0.8 2.1-1.8 0.9 13.3 0.4 60.2 0.8 23.7 0.9-23.7 0.5-60.2 0.7-11.7 2.1 1.1 2.1-0.1 2.1 3.7 2.1 20.5 2.1-23.2 2.1 2 2.1-0.8 2.1 4.1 0.8 4.4 1.3 34.3 0.9-34.3 1.2-7.8 4.1-2.4 2.1-0.2 2.1 2.9 2.1 5.8 2.1-3.4 2.1-2.5 2.1 0.2 1.5 7.4 0.6 5.8 0.9-5.8 1.2-4.1 1.2 4.1 0.9 6.1 0.7-6.1 1.4-6.6 2.1 3.2 2.1-1.8 2.1 1 0.5 34.3-1.8 60.2-0.8 43-2.1-2-2.1 2.5-2.1-9.9-1.2-33.6-0.9-9.5-2.1 8.6-2.1 46.7-2.1-0.4-4.2-5.8-2.1 5.9-2.1 2-2.1-11.4-2 1.2-2.1 8.7-2.1 1.5-2.1-5.6-2.1 3.7-2.1-1.1-2.1-6.1-2.1 6.2-2.1 1.7-2.1 1-2.1 1.6-2.1 0-2.1-1.6-2.1 6.9-2.1-2.8-2.1 0.2-0.6-21.5-0.4-60.2zM1716.3 1359l-1.3 20.1-0.2 30.1 1.5 27.8 1.4-27.8-0.3-30.1zM1764.3 1318.9l0.2-3.3 2-0.5 2.1 0.9 0.9 33 0.1 60.2-0.6 30.1-0.4 5.3-2.1 5.6-2-1.1-0.8-9.8-0.8-30.1-0.2-30.1 0.5-30.1zM1787.5 1318.9l2.1 9.5 1 20.6-0.7 60.2-1.6 30.1-0.8 6.6-4.2-1.7-2.1-1.6-1.1-3.3-1-6.6-2.1 7.1-1.2-30.6-0.2-30.1 1.4-7.9 2.1-44.7 2.1-4.4 2.1 1.3 1 55.7 1.1 19.3 1-19.3zM1240.6 1349l0.4-0.7 2 0.1 0.3 0.6 1.8 16.7 2.1 9.6 0 35.4-2.1 7.6-2.1 12.8-2-32.8-2.1 26.9-0.5-16-1.6-23.5-1.5 23.5-0.6 24-2.1-24 0.8-30.1 1.3-27.8 4.2 8.6zM1257.4 1349l0.3-7.6 2.1-2.7 2.1-2 2.1 2.8 2.1-1.6 1 11.1 0.8 30.1-0.1 30.1-0.9 30.1-0.8 8.6-2.1-2.9-2.1 0.9-2.1-0.3-2.1-2.3-1.1-4-0.8-30.1zM1269.1 1349l1.2-13.2 2.1 1.7 2.1-5.5 1.5 17 0.1 30.1 0.5 15.7 0.5-15.7 0.3-30.1 1.2-10.3 2.1-4.4 0.9 14.7 0.5 30.1-0.1 30.1-0.6 30.1-0.7 8.8-2.1-3.4-4.1 6.9-2.1-3.4-2.1-2.2-0.8-6.7-0.9-30.1-0.1-30.1zM1792.6 1349l1.2-27.6 2.1 7.3 0.5 20.3 0 60.2-0.4 30.1-0.1 1.1-2.1 4.1-1-5.2 0.1-60.2zM1799.6 1349l0.4-17 2.1 1.3 2.1-3.3 2.1 1 2.1-2.5 2.1 4.6 2.1 1.3 2.1 0.2 2.1-4 2.1 1.3 2.1-0.4 1.2 47.6 0.9 15.8 1.5 14.3-1.5 28.5-2.1 1.3-2.1-4.1-2.1 3.2-2.1-3-2.1-1.4-2.1 0.4-1.1 5.2-1 1.8-2.1-13.7-2.1 12.5-4.2-2.1-0.4-28.6zM1827.1 1349l0.2-1.7 2.1 1.6 2.1 0.1 2.1-2.3 2 0.7 1.1 1.6 1 5.2 0 61.4-2.1 3-2 1-2.1-4.1-2.1-2.4-2.1 2.3-0.9-6.2-0.7-30.1zM1194.3 1379.1l0.6-5.5 1.9 5.5-1.2 30.1-0.7 1zM1209.3 1379.1l0.2-5.6 1.2 5.6-1.2 34.4-0.3-4.3zM1215.5 1379.1l0.3-11.8 2.1 0.2 2.1-0.8 2.1 5.8 2.1 4.3 0 2.3 0 18.6-0.5 11.5-3.7 9.2-2.1-1.3-2.1 2.8zM1228.2 1379.1l0.2-26.9 2.1-2.5 1.3 29.4 0.7 30.1-2 22.1-2.1 0.4zM1251 1379.1l0.4-8.3 2.1-17 1.6 55.4-1.6 16.9-2.1-12.5-0.3-4.4zM1758.6 1379.1l1.7-9.1 1.6 9.1-0.1 30.1-0.8 30.1-0.7 10.2zM1772.4 1379.1l0.4-19 1.8 19-0.3 30.1-1 30.1-0.5 5.5-0.6-35.6z"/>
<path fill="#ec5a29" stroke="#ec5a29" d="M1433.6 1288.8l4.2-1.2 2.1 11 2.1-11.2 2.1 0.5 0.7 31 1.4 22.8 1.3-22.8 0.8-29 2.1 38.1 2-37.6 2.1 30.8 2.1-35.6 4.2 6.3 2.1-3.9 2.1 0.3 2.1-2 4.2 0 3.6 2.5 0.6 0.9 2.1 18.9 0.1 10.3-0.1 3.3-2.1 7.1-0.8 19.7 0 30.1 3.5 60.2-0.3 30.1-0.3 7.7-2.1 2.5-2.1 1.7-2.1 0.4-2.1-1.4-2.1 1.9-2.1-15.6-2.1 11.9-2.1 0.7-2.1 3.8-2.1-26.1-2.1 21.2-2.1-0.5-2 2-2.1-0.3-2.1 4.8-2.1-3-2.1-13.1-2.1 12.2-2.1 0.1-2.1 1.6-4.2-0.8-2.1-2-2.1-3.1-2.1-0.8-2.1 3.1-2.1-1.3-2.1 0.8-0.8-38.5-0.4-90.3 0.1-30.1 1.1-26.1 2.1-0.9 2.1 1.7 2.1-0.7 2.1 3 2.1-4.6 2.1-0.9zM1481.8 1288.8l2.1 19.8 2-22.1 2.1-2.9 2.1 4.1 2.1-1.6 2.1 2.6 2.1-2.9 2.1 1.3 2.1 0.3 0.9 61.6 1.2 28.2 1.2-28.2 0.9-60 2.1-2.3 2.1 0.5 2.1 13.6 2.1-16.7 2.1-1.6 2.1 2 1 34.4 1.1 14.9 1-14.9 1-33.9 2.1 0.4 2.1-0.7 2.1-1.9 2.1 25.5 2.1-12 2.1-3.3 2.1-9.5 2.1 1.5 2.1 0.6 2.1-1.5 0.5 4.7 0.2 30.1 1.4 37.2 1.3-37.2 0.1-30.1 0.7-7.7 2.1 2 2.1-2.9 2.1 42.6 2.1-37.3 2-1.2 2.3 34.6 0.8 30.1 0.2 30.1-0.2 30.1-0.4 30.1-0.6 14.1-2.1 24-2 4.3-2.1 2.2-2.1-35.2-2.1 37-2.1 2.1-2.1-3.2-2.1-1.8-2.1 0.4-2.1 2.7-2.1-4.1-2.1 2-2.1-4.5-1.5-9.9-0.6-8.3-0.8 8.3-1.3 7.5-2.1 6.6-2.1-3.2-2.1 2.8-2-0.3-2.1-1-2.1 3.7-2.1-2.2-2.1-12.9-2.1 14.3-2.1-5.2-2.1 1.6-2.1-0.9-1.4-40.9-0.7-8.2-2.1-3.9-2.1 53.5-2.1 0.6-2.1 3.9-2.1-8-2.1 7.4-2.1-2.5-2 0.7-2.1-1.2-1.4-42.3-0.2-60.2 0.5-60.2zM1557.1 1401.5l-0.2 7.7 0.2 20.4 0.6-20.4zM1563.3 1288.8l0.1-1.6 2.1-1.6 2.1 2.4 2.1-1.9 2.1 2.6 2.1-2 1.3 2.1 2.9 6.9 2.1-5.1 2.1 0.6 2.1-4.6 2.1 2.9 2.1 7.8 4.1-11.6 2.1 41.1 2.1-35.3 2.1-0.6 2.1 82.1 2.1-76.7 1.5 22.6 0.6 19.1 0.5-19.1 1.6-25.9 2.1-1.3 2.1 6.5 1.1 20.7 1 60.2-0.6 60.2-1.5 35.5-2.1-29.5-2.1 30.5-2.1-3-2.1-60.6-2.1 4.7-1.1 22.4-1 6.3-2.1 33-2.1 2.2-2.1 1.6-2.1-4.4-2-1-2.1-4.6-2.1 7.1-1.2-10.1-0.3-60.2-0.6-14-0.8 14-1.3 41.3-1.1 18.9-1 6.5-4.2 5.9-2.1-17.2-2.1 19.1-2.1-2.5-4.2 0-1.2-41.9-0.4-60.2 0.6-60.2zM1588.6 1334.9l-0.4 14.1 0 30.1 0.4 9.8 0.3-9.8 0.1-30.1zM1332.4 1318.9l0.7-11 2.1 1 2.1 0.2 2.1-1.8 2.1 8.2 2.1-1.4 2.1-4.2 2-0.4 2.1 0.3 2.1-1.1 2.1 1.2 0.8 9 1.3 34.9 1-34.9 1.1-16.1 2.1 6.8 2.1-11.9 2.1 1.9 2.1 1.1 2.1-2.6 2.1 1.3 2.1-0.6 2.1 2.6 2.1-7.5 2.1 2.7 2 1.7 1.9 20.6-0.9 60.2 0.4 30.1 0.7 21.3 0.8-21.3 0.4-30.1-0.1-30.1 1-26.2 2.1-28.3 1.3 24.4 0.8 60.2-0.4 60.2-1.7 37.9-2.1-2.8-2.1-4.2-2.1 2.8-4.1 1.4-2.1-2.9-2.1 1.8-2.1-2.9-0.8-31.1-1.3-22.4-1.3 22.4-0.8 35.3-2.1-2.1-2.1 1.1-2.1-2-2.1-0.9-1.7-31.4-0.4-21.6-0.4 21.6-1.7 24.3-2.1 1.1-2.1-0.3-2.1 0.8-2-4.5-2.1-1.8-2.1 10.8-2.1-4.7-2.1-0.2-2.1 3-2.1-0.3-1.3-28.2-0.4-30.1 0.2-60.2zM1390.6 1318.9l1.1-17.9 1.4 17.9 0.7 16.1 2.1-32.5 2.1-1.9 4.2-0.5 2.1-1.1 2.1 39 1.3-19.1 0.8-17.4 2.1 0.5 2.1-1.7 2.1-2.6 1 21.2 0.2 30.1-0.5 90.3-0.7 30.1 0 0.9-2.1 0.7-4.2 0.1-2.1 2.7-2.1-1.2-2.1 0.1-2.1 1-2.1 0.2-2.1-3.1-2.1-41.4-2.1 41.4-1.5-31.5-0.4-30.1 0.1-60.2zM1614.6 1318.9l1.2-19.1 2.1-5.3 2.1 0.2 4.2 4 2-0.7 2.1-1.8 2.1 0.3 2.1 3.1 2.1 0.3 0.6 19 0.5 60.2-0.3 60.2-0.8 29.9-2.1 3.2-2.1 0.6-2.1 0.1-2.1-26.4-2 24.8-2.1 0.9-2.1 1.9-4.2-0.9-1.6-34.1-0.5-60.2zM1638.5 1318.9l0.3-9.5 2.1 1.6 2.1 76.2 2.1-76.1 2.1 1 4.2-16 2.1 1.1 2.1 1.8 2.1 0.3 2.1-2 2 66 2.1-65.8 2.1 11.3 2.1 2.3 2.1-2.9 2.1 0.1 2.1 3.4 1.1 37.3 1 18.6 1.2-18.6 0.8-30.1 2.2-15.4 2.1 1.6 2.1 6.6 2.1-4.8 2.1-0.9 2.1 0.6 2.1 1.9 0.6 40.5 0 30.1-0.6 50.3-2.1 11-2.1 19.6-2.1 1.8-2.1-29.8-2.1 30.6-2.1 0.8-2.1-15.6-2.1 8.2-4.2 2-2.1-60.4-2.1 57.9-2.1 2.4-2.1 15.1-2.1-2.6-2-1.1-2.1 1.4-2.1-0.6-2.1 5-2.1-16.9-2.1 13.7-2.1-13-4.2-3.8-2.1 3.5-2.1 1.4-0.6-20.7-0.4-60.2zM1653.5 1362.7l-0.7 16.4 0.7 14.9 0.6-14.9zM1691.2 1399.3l-0.3 9.9 0.3 27.6 0.6-27.6zM1697.3 1318.9l0.1-4.9 2.1 0.6 2.1-1.8 0.4 6.1 0.7 60.2 1 36 1.2-36 0.9-64.6 2.1 1.1 2.1-0.2 2.1 3.8 2.1 24.8 2.1-27.5 2.1 1.9 2.1-0.8 0.6 1.3 1.5 5.5 2.1 46.3 2.1-52.6 2.1-1.3 4.1-1.5 2.4 3.6 1.8 8.8 3.5-8.8 0.7-0.8 2.1 0.3 2.1 20 2.1-14.5 2.1 14.5 2.1-19.5 2.1 6 2.1-2.9 2.1 5.9 0.2 21.1-1.8 60.2-0.5 35.8-2.1-1.8-2.1 2.5-1.3-6.4-0.8-10.1-0.6-20-1.5-16.2-2.1 3.5-2.1 51.3-2.1-0.3-4.2-6.3-2.1 6.3-2.1 1.9-1.7-10.1-0.4-4.5-0.7 4.5-1.3 2.2-2.1 6.1-2.1 1.2-2.1-5.5-2.1 3.5-2.1-1-1.4-6.5 0.9-30.1-0.2-30.1-1.4-24.4-1.6 24.4-0.1 30.1 0.9 30.1-1.3 5.8-2.1 2.5-2.1 0.9-2.1 1.4-2.1 0-2.1-2.8-2.1 8.1-2.1-2.8-2.1-0.1-0.7-73.2zM1258.4 1349l3.5-4 2.1 2.9 2.1-1.3 0.2 2.4 0.8 30.1 0 30.1-1 31.3-0.9-1.2-1.2-4.6-2.1 3.3-2.1-2-2.1-6.8-0.9-20 0.9-57.6zM1269.9 1349l0.4-4.5 2.1 1.5 2.1-5.3 0.7 8.3 1.4 77 1.9-77 0.1-1.4 2.1-3.8 0.3 5.2 0.5 30.1 0 30.1-0.7 30.1-0.1 1-2.1-0.8-2 0.8-2.1 4-2.1-3.3-1.6-1.7-0.5-1.7-1-28.4-0.1-30.1zM1286.3 1349l0.7-18.3 2.1-1.1 2.1 4.2 2.1 10.4 2.1-13.3 2.1-2 2.1-2.9 2.1 9.2 2.1-2.8 0.7 16.6-1.4 30.1-0.8 60.2-0.6 11-2.1 3.9-4.2-6.7-2.1 4.5-2.1-32.1-2.1 31.3-4.2-3.7-0.5-8.2-0.2-30.1 1.3-30.1zM1306.8 1349l1.2-26.9 2.1 0.7 4.1 7.7 2.1-0.7 2.1-1.5 2.1 5 2.1-9.3 2.1-1.7 2.1 3.7 1 23 0 60.2 1.1 32.1-2.1-2.7-2.1 8.7-2.1 3.9-0.8-11.9-1.3-36.6-1.2 36.6-0.9 10.9-2.1-0.4-2.1-1.3-2.1 6.3-2 3.7-2.1-3.7-2.1-6.4-0.5-9.1 0.1-30.1zM1763.7 1349l0.8-23.3 2-1.6 2.1 1.5 0.6 23.4 0.1 60.2-0.7 31.1-2.1 2.9-2-1.3-0.2-2.6-0.9-30.1-0.2-30.1zM1778.6 1349l0.5-9.6 2.1-6 2.1 1.2 0.7 44.5 1.4 25.3 1.3-25.3 0.8-49.5 2.1 12 0.3 7.4-0.3 48.5-2.1 41.3-4.2-3.9-2.1-3.2-2.1-14.6-1.9-7.9zM1793.1 1349l0.7-15.9 2.1 6.4 0.2 9.5-0.2 77.8-2.1 8.5-0.6-26.1zM1799.9 1349l0.1-5.5 2.1 0.9 2.1-3.9 2.1 1.7 2.1-3.2 2.1 5.3 2.1 0.6 2.1-0.1 2.1-4.2 2.1 1.4 2.1-0.9 0.7 38 1.4 23.9 0.7 6.2-0.7 12.3-2.1 3.7-2.1-4.1-2.1 3.1-2.1-3.8-2.1-1.4-2.1-0.2-2.1 9.7-2.1-11.7-2.1 9.3-2.1-3.3-2.1-0.9zM1229.2 1379.1l1.3-2.5 0.1 2.5-0.1 30.4zM1240.4 1379.1l0.6-2.9 2 1.1 0 14.3zM1759.3 1379.1l1-5.1 0.9 5.1 0.1 30.1-1 33.3zM1772.8 1379.1l0.6 30.1-0.6 21.4zM1832.7 1379.1l0.9-5 2 3.3 0.4 1.7-0.4 3.8-2 5.2z"/>
<path fill="#ea3f24" stroke="#ea3f24" d="M1515.1 1288.8l2.3 2.7 0.8 27.4 1.3 18.5 1.3-18.5 0.7-26.8 2.1 1.9 4.2-4.7 2.1 28.8 2.1-13.1 2.1-6 2.1-9 2.1 2.1 2.1 1 2.1-2.3 1.3 58.2 0.8 10.9 0.7-10.9 1.4-61.7 2.1 2.4 2.1-3.4 2.1 49.9 2.1-43.3 2-1.6 1.8 27.6 0.8 30.1 0.3 30.1-0.8 62.7-0.5-2.5-0.2-30.1-1.4-16.9-0.5 16.9 0.4 60.2-1.9 6.4-2.1 1.4-2.1-33-2.1 35-2.1 2.2-2.1-3.2-2.1-1.7-2.1 0.2-2.1 2.9-2.1-4.2-2.1 2.1-2.1-2.7-0.8-5.4-1.3-19.4-1.9 19.4-2.3 7.7-2.1-4-2.1 3.6-2-0.4-2.1-1-2.1 3.9-2.1-2.3-1.2-7.5-0.9-8.9-0.8 8.9-1.3 8.9-2.1-5.1-2.1 1.5-2.1-1.1-1.1-34.3-1-12.2-2.1-5.6-2.1 52.7-2.1 0.7-2.1 4-2.1-6.4-2.1 5.7-2.1-2.5-2 0.6-2.1-0.4-1.1-36.6-0.2-60.2 0.5-60.2 0.8-22.1 2.1 18.6 2-21.3 2.1-3.9 2.1 5.4 2.1-1.9 2.1 3.5 2.1-3.9 2.1 1.6 2.1 0.5 0.7 53.6 1.4 33.7 1.4-33.7 0.7-51.6 2.1-3.2 2.1 0.9 2.1 15 2.1-19.2zM1332.8 1318.9l0.3-5.2 2.1 1.1 2.1 0.3 2.1-2 2.1 7.4 2.1 1.1 0.7-2.7 1.4-2.7 2-0.4 2.1 0.5 2.1-1.1 2.1 1.2 0.3 2.5 1.2 30.1 0.4 30.1-0.1 30.1-0.7 30.1-1.1 16.4-2.1 1.1-2.1-0.4-2.1 1.2-4.1-6.3-2.1 11.2-2.1-4.5-2.1-0.6-2.1 3.3-2.1-0.2-1-21.2-0.4-60.2 0.2-30.1zM1357.5 1318.9l0.7-9.8 2.1 4.2 2.1-9.4 2.1 1.9 2.1 0.1 2.1-1.4 2.1 1 2.1-0.3 2.1 2.6 2.1-7.4 4.1 4.5 1.3 14-0.5 60.2 0.4 30.1 0.9 27.7 1-27.7 0.4-60.2 0.7-20.1 2.1-27.8 1 17.8 0.7 60.2-0.4 60.2-1.3 32.2-2.1-3.3-2.1-19.9-2.1 18.2-4.1 1.8-2.1-3.7-2.1 2.2-2.1-3.5-0.6-24-1.5-25.5-1.4 25.5-0.7 29.6-2.1-2.9-2.1 1.5-2.1-2.9-2.1-1.1-1.3-24.2-0.5-30.1 0.2-60.2zM1391 1318.9l0.7-11.2 0.9 11.2 1.2 28.5 2.1-37.3 2.1-2.3 2.1-0.7 2.1 0.2 2.1-1.5 2.1 36.5 2.1-33.5 2.1 0.4 2.1-1.3 2.1-3 0.6 14 0.3 30.1-0.4 90.3-0.5 23.9-2.1-0.8-2.1 0.6-2.1-0.2-2.1 3.8-2.1-1-2.1-0.3-2.1 1.6-2.1 0.1-2.1-5-2.1-41.8-2.1 42.9-1.1-23.8-0.5-30.1 0.2-60.2zM1418.1 1318.9l0.8-18.9 2.1-0.8 2.1 1.9 2.1-0.9 2.1 3 2.1-4.8 2.1-0.5 4.2-2.8 2.1-0.4 2.1 11.6 2.1-11.9 2.1 0.6 0.6 23.9 1.5 26 1.5-26 0.6-21.3 1.3 21.3 0.8 21.8 2-42.4 2.1 35.7 2.1-41.3 4.2 7.2 2.1-4.1 2.1 0.7 2.1-3 4.2 0.2 2.1 2.2 2.1 11.1 1 11.9-1 4.3-1 25.8 0 30.1 3.2 60.2-0.1 30.1-2.1 3.9-2.1 1.6-2.1 0.4-2.1-1.2-2.1 1.9-2.1-18.7-2.1 14.7-2.1 0.9-2.1 4-2.1-24.3-2.1 18.9-2.1-0.3-2 1.8-2.1 0.1-2.1 4.8-2.1-2.9-2.1-12.8-2.1 11.7-2.1 0.2-2.1 1.7-4.2-0.9-2.1-1.8-2.1-3.3-2.1-1.1-2.1 3.5-2.1-1.4-2.1 0.8-0.7-32.3-0.3-90.3zM1562.6 1318.9l0.8-23.6 2.1-2.3 2.1 3.3 2.1-2.7 2.1 4.3 2.1-3.3 4.2 10 2.1-5.2 2.1 0.2 2.1-5.4 2.1 3.8 2.1 14.7 2-13.3 2.1-6.4 2.1 39.3 2.1-32.7 2.1 0.9 1.8 78.6-0.5 30.1-3.4 63-2.1 2.2-2.1 1.6-2.1-4.4-2-1.2-2.1-2.5-2.1 5.2-0.5-3.7-0.7-60.2-0.9-19.2-2.1 45.9-2.1 33.1-4.2 6.3-2.1-20.7-2.1 22.7-2.1-2.6-4.2 0-1-35.4-0.2-30.1 0-60.2zM1588.6 1323.5l-0.8 25.5 0.1 30.1 0.7 17.3 0.6-17.3 0.1-30.1zM1602.8 1318.9l0.4-14 1 14 0.8 30.1-0.3 30.1-1.5 21.9-1.6-21.9zM1606.3 1318.9l1.1-17.4 2.1-1.6 2.1 6.5 0.7 12.5 0.7 30.1 0.3 30.1-0.5 60.2-1.2 28.4-2.1-26.5-2.1 27.9-2.1-10.2-0.6-19.6 2.2-60.2-1.1-30.1zM1615.1 1318.9l0.7-11.9 2.1-4.6 2.1 0.6 4.2 3.8 2-0.8 2.1-1.9 2.1 0.3 2.1 3.1 2.1 0.7 0.9 70.9-0.4 60.2-0.5 20.3-2.1 4.7-2.1 1-2.1 0.2-2.1-23.4-2 20.9-2.1 1.2-2.1 2.6-2.1-0.1-2.1-1-1.1-26.4-0.6-60.2zM1638.8 1318.9l0-1.5 2.1 2.4 2.1 82.4 2.1-82.3 2.1 1.6 0.2-2.6 1.9-8.9 2.1-6.1 4.2 2.7 2.1 0.3 2.1-2.2 1.1 44.3 0.9 20.2 1-20.2 1.1-44.3 2.1 11.8 2.1 2.2 2.1-3 2.1 0.3 2.1 3 0.7 30 1.4 25.1 1.7-25.1 0.4-15.9 0.9-14.2 1.2-8.1 2.1 1.5 2.1 8 0.2-1.4 1.9-4.9 2.1-1.2 2.1 1 2.1 2.3 0.4 63-0.4 34.9-2.1-30.3-0.7 25.5-0.1 30.1-1.3 13-2.1 1.2-1.2-14.2-0.9-23.9-1 23.9-1.1 14.9-2.1 0.7-2.1-17-2.1 9.2-2.1 1.5-2.1 0.4-1-39.8-1.1-19.8-1.1 19.8-1 37.3-2.1 2.4-2.1 17-2.1-3.9-2-1.4-2.1 1.6-2.1-0.8-2.1 7.1-2.1-19.3-2.1 14.7-2.1-14.6-2.1-1.9-2.1-2.8-2.1 4.1-2.1 1.8-0.7-71.4zM1653.5 1355.2l-1 23.9 1 21.7 0.9-21.7zM1286.6 1349l0.4-10 2.1-0.8 2.1 4.1 2.1 8.9 2.1-11.4 4.2-4.7 2.1 9 2.1 3.6-1.2 31.4-0.7 60.2-0.2 3.8-2.1 3.8-4.2-6-2.1 4.2-2.1-31.9-2.1 30.9-2.1-1.5-2.1-2.5-0.1-30.9 1.2-30.1zM1307.2 1349l0.8-17.5 2.1 0.5 4.1 8.9 4.2-3 2.1 9 2.1-12.9 2.1-1.4 2.1 5.8 0.5 10.6-0.1 60.2-1.6 30.1-0.9 3.3-2.1 1.2-2.1-64-2.1 63.1-2.1-0.7-2.1-1.6-2.1 6.6-2 3.9-2.1-3.5-2.2-8.3 0.2-30.1zM1697.1 1349l0.3-24.8 2.1 0.8 2.1-4.1 1.8 118.4-1.8 7.8-2.1-3-2.1-0.3-0.4-34.6zM1705.4 1349l0.4-24 2.1 2 2.1-0.4 2.1 6.7 1.4 15.7 0.7 13.5 0 67.5-1.8 9.3-4.5 2.4-2.1 0-1.3-2.4zM1715.5 1349l0.8-10 2.1-6.4 2.1-1.5 2.1 7.6 2.1 52.2 2.1-59.7 2.1-2.7 2 1.1 2.1-4.2 2.1 5.4 2.1 9.5 4.2-9.8 2.1 0.5 1.8 18 0.3 9.7 0.4-9.7 1.7-12.4 1.7 12.4 0.4 7.9 0.3-7.9 1.8-17.5 2.1 5.8 2.1-2.3 1.9 14-1 30.1-0.9 56.5-2.1-4.3-2.1 6.5-4.2-51.6-2.1-1.6-2.1 56-2.1-0.3-0.7-1-3.5-14.7-1.7 14.7-0.4 1-2.1 1.8-0.4-2.8-1.7-22-2 14.3-2.1 8.4-2.1 0.9-0.7-1.6-1.4-9.7-2.1 8.6-2.1-2.6-0.5-56.5-1.6-28.7zM1764.1 1349l0.4-10.3 2-2.1 2.1 1 0.5 41.5-0.5 48.6-2.1 3.9-2-4-0.8-48.5zM1779.9 1349l1.3-4.4 2.1 1.2 0.4 33.3 1.2 30.1-1.6 10-2.1-2.4-1.1-7.6-1-19.5-0.3-10.6 0.3-15.4zM1787.4 1349l0.1-8 1.3 8 0.4 30.1-0.9 30.1-0.8 14.1-1.7-14.1 1.2-30.1zM1793.6 1349l0.2-4.2 1.5 4.2 0.6 4.5 0.1 25.6-0.1 32.8-2.1 7.3zM1257.8 1379.1l4.1-15.1 2.1 9.2 2.1-4.9 0.3 10.8-0.3 39.7-2.1-7-2.1 4.7-2.1-3.8-1.1-3.5zM1269.9 1379.1l0.4-15.6 2.1 2.6 2.1-15.9 0.9 59-0.9 22.7-2.1-11.1-2.1-4.8zM1278.4 1379.1l0.2-8.8 2.1-7.5 0.3 16.3-0.3 39.7-2.1-0.2-0.5-9.4zM1760.1 1379.1l0.2-1 0.2 1 0.3 30.1-0.5 20.3zM1800 1379.1l0-10.7 2.1 1.1 2.1-13.6 2.1 8.7 2.1-13.7 2.1 21.5 2.1-0.5 2.1-1.8 2.1-15.3 2.1 6.1 2.1-5.5 0.8 53.8-0.8 2.2-1.1-2.2-1-7.1-1.3 7.1-0.8 1.1-0.5-1.1-1.6-14.4-2.1-4.8-2.1-1.7-1.2 20.9-0.9 4.4-1.1-4.4-1-13-1.3 13-0.8 2.2-1-2.2-1.1-10.5-2.1-1.8z"/>
<path fill="#e53222" stroke="#e53222" d="M1358 1318.9l0.2-3.5 2.1 1.6 2.1-6.9 2.1 2 2.1-1 2.1-0.1 2.1 0.7 2.1 0 2.1 2.5 2.1-7.4 4.1 4.6 0.7 7.5 0 60.2 0.2 30.1 0.8 30.1-1.7 19.2-2 1.3-2.1 0.6-2.1-3.6-2.1 2.2-2.1-3.2-0.4-16.5-1.7-28.6-1.6 28.6-0.5 22.1-2.1-3-2.1 1.5-2.1-3.1-2.1-1-0.9-16.5-0.6-60.2 0.3-30.1zM1386.7 1318.9l0.8-11.2 0.6 11.2 0.7 30.1-0.3 90.3-1 24.9-2.1-4-1.6-20.9 0.7-30.1 0.4-60.2 0.5-14zM1391.4 1318.9l0.3-4.4 0.4 4.4 1.7 47.1 2.1-48.2 2.1-2.9 2.1-1.2 2.1 0.8 2.1-2 2.1 34.1 2.1-30.4 2.1 0.2 2.1-0.9 2.1-3.3 0.7 36.8-0.4 90.3-0.3 15.8-2.1-1.9-2.1 1.1-2.1-0.5-2.1 3.8-2.1-0.1-2.1-1-2.1 1.9-2.1-0.1-2.1-5.8-2.1-41.5-2.1 43.9-0.7-15.6-0.6-60.2 0.3-30.1zM1418.4 1318.9l0.5-11.6 2.1-0.9 2.1 2.2 2.1-1 2.1 2.9 2.1-5 2.1-0.2 4.2-2.8 2.1-0.3 2.1 11.7 2.1-12 2.1 0.5 0.4 16.5 1.7 29.2 1.7-29.2 0.4-13.7 2.1 49.1 2-48.1 2.1 40.7 2.1-46.2 2.1 3.1 2.1 4 2.1-4 2.1 1 2.1-3.4 4.2 0.4 2.1 2.3 1.8 14.8-0.9 30.1-0.1 30.1 2.9 60.2-1.6 26.2-2.1 2.7-2.1 0.6-2.1-1.7-2.1 2.6-2.1-21.7-2.1 15.9-2.1 1.3-2.1 5.5-2.1-22.4-2.1 14-2.1 0.4-4.1 3-2.1 6-2.1-3-2.1-12.4-2.1 10.5-2.1 0.5-2.1 2.4-4.2-1.3-2.1-2.3-2.1-4.9-2.1-1.3-2.1 4.7-2.1-2-2.1 1.2-0.5-24.5-0.3-90.3zM1481.3 1318.9l0.5-14.1 2.1 20.8 2-23.1 2.1-3.8 2.1 5.2 2.1-1.8 2.1 3.5 2.1-3.8 2.1 1.6 2.1 0.5 0.6 45.1 1.5 41.4 1.6-41.4 0.5-43.2 2.1-3.4 2.1 1.1 2.1 16.2 2.1-20.3 2.1-2.3 2.1 2.9 0.5 18.9 1.6 22.1 1.5-22.1 0.5-18.3 2.1 4.4 2.1-4.6 2.1-2.3 1.5 20.8 0.6 17.6 1.3-17.6 0.8-5.1 2.1-8.7 2.1-6.7 2.1 2.1 2.1 1.3 2.1-2.5 1.1 49.7 1 14.7 1-14.7 1.1-53.7 2.1 3.1 2.1-4.8 1.2 25.3 0.9 30.6 2.1-48 2-1.4 1.2 18.8 0.8 30.1 0.4 30.1-0.3 32.7-2.1-28.8-0.8 26.2 0.1 30.1-1.2 30.1-0.1 0.5-2.1 0.5-2.1-30.8-2.1 33.1-2.1 2.4-2.1-3.3-2.1-1.7-2.1 0.2-2.1 3-2.1-4.4-2.1 2.3-2.1-0.8-2.1-32.1-2.1 22.7-2.1 9.6-0.6-1.2-1.5-9.7-1.6 9.7-0.5 0.9-2-0.5-2.1-1.1-2.1 4.2-2.1-2.3-2.1-20.6-2.1 22-2.1-6.4-2.1 2.2-2.1-2.5-0.8-26-1.3-16.3-2.1-7.2-1.2 23.5-0.9 27.6-2.1 1-2.1 4.6-2.1-6.2-2.1 5.5-2.1-2.5-4.1 0.9-0.9-30.9-0.1-30.1 0-60.2zM1562.9 1318.9l0.5-14.9 2.1-2.4 2.1 3.2 2.1-2.8 2.1 5.1 2.1-3.8 4.2 10.3 2.1-5.4 2.1-0.2 2.1-5.5 2.1 4 1.5 12.4-0.5 30.1 0.1 30.1 1 24.8 0.9-24.8 0.1-30.1-0.4-30.1 1.4-11.3 2.1-6.3 2.1 36.6 2.1-30.2 2.1 2.4 1.1 69-1.8 60.2-1.4 24.8-2.1 3.3-2.1 2.2-2.1-6.5-2-2.8-2.1-0.2-2.1 5.3-1-56.2-1.1-24.3-2.1 43-2.1 30.9-4.2 9.6-2.1-23.8-2.1 26.4-2.1-3.3-4.2-0.2-0.7-28.2-0.2-30.1 0-60.2zM1603 1318.9l0.2-5.3 0.4 5.3 0.8 30.1-0.4 30.1-0.8 11.9-0.9-11.9zM1606.9 1318.9l0.5-8.8 2.1-1.9 2.1 6.4 1 34.4 0.3 30.1-0.5 60.2-0.8 18.9-2.1-23.4-2.1 24.7-2.1-20.2 0.9-30.1 1.5-30.1-0.9-30.1zM1615.5 1318.9l0.3-4.7 2.1-3.9 2.1 1 4.2 3.7 2-1 2.1-2 2.1 0.3 2.1 3.1 2.1 1.1 0.1 2.4 0.6 60.2-0.7 70.9-2.1 5.1-2.1 0.9-2.1 0.3-2.1-21.1-2 18.3-2.1 1.2-2.1 2.5-2.1 0.3-2.1-1.4-0.7-16.8-0.6-60.2zM1648.6 1318.9l0.7-3.3 2.1-3.9 4.2 2.5 2.1 0.2 2.1-2.2 0.8 36.8 1.2 26.2 1.3-26.2 0.8-37 1.3 6.9 0.8 10.9 2.1 4.5 2.1-4.9 2.1-0.4 2.1 4.6 0.4 15.4 1.7 35.6 4.2-66.6 1.2 0.9 0.9 1.2 2.1 20 2.1-16.6 2.1-3.2 4.2 12.2 0 61.7-2.1-28-1.6 73.1-0.5 5.3-2.1 0.6-2.1-51.9-2.1 52.6-2.1 0.5-0.9-7.1-1.2-23.9-2.1 21-1.2 2.9-0.9 0.8-2.1-0.1-0.6-30.8-1.5-28.1-1.5 28.1-0.6 25.9-1.5 4.2-0.6 0.6-2.1 17.5-2.1-4.1-2-1.4-2.1 1.3-2.1-0.7-2.1 6.5-2.1-18.8-2.1 14.7-2.1-15.3-2.1-4.6-1.4-25.8 1.4-72.2 2.1 0.8zM1653.5 1343.3l-1.3 35.8 1.3 28.5 1.1-28.5zM1287 1349l0-1.6 2.1-0.6 1.1 2.2 1 6.9 2.1 8.9 2.1-16.1 4.2-4.5 1.1 4.8 1 11.3 0.4 18.8-0.4 48.8-2.1 11.7-4.2-15.2-2.1 11.5-2.1-37.2-2.1 33.9-2.1-3.6-1.2-19.8zM1307.6 1349l0.4-8.2 2.1 0.4 2 4.8 1.3 3 0.8 6.9 2.7-6.9 1.5-1.5 0.4 1.5 0.8 30.1-1.2 49.6-2.1-2.9-2.1-5.1-1.9 18.6-2.2 4.4-2.4-4.4-1-30.1zM1321.8 1349l0.8-5 2.1-1 1.7 6 0.4 10.3 0 32.6-0.5 17.3-1.6 24.6-2.1-2.4-1.2-52.3zM1332.2 1349l0.9-29.2 2.1 2.2 2.1 0.8 2.1-3.8 2.1 9.2 2.1 4.6 2.1-7.5 2-0.8 2.1 1.6 2.1-1.9 2.1 2.1 1 22.7 0.4 30.1-0.1 30.1-0.7 30.1-0.6 8.5-2.1 1-2.1-0.3-2.1 1.6-2-2.5-2.1-4-2.1 11.5-2.1-4.1-2.1-0.9-2.1 3.4-2.1 0.1-0.7-14.3-0.4-30.1zM1638.5 1349l0.3-17.1 2.1 4.7 1.4 72.6-1.4 29-0.4 1.1-1.7 1.8-0.5-62zM1697.3 1349l0.1-9.4 2.1 0.2 2.1-4.4 0.8 73.8-0.8 29.4-2.1-8.1-2.1-1.2zM1705.7 1349l0.1-8.8 2.1 1.8 2.1-0.6 2.1 6.1 1.6 31.6-0.2 30.1-1.4 10.5-4.2 5-2.1 0.2-0.5-15.7zM1718.1 1349l0.3-1.7 2.1-1.4 0.9 3.1 1.2 10.7 0.5 19.4-0.5 30.1-2.1 8.7-2.1-2.4zM1726.6 1349l0.2-3.8 2.1-3 2 4.7 2.1-8 2.1 5 1.2 5.1 0.9 13.2 1.7-13.2 2.5-5.3 2.1 0.4 0.5 4.9 1 30.1-1.5 44.4-2.1-0.7-2.1-7.2-1.3-6.4-0.8-10.5-0.5 10.5-1.6 13.5-2.1 4.8-1.3-18.3-0.8-16.9-0.9 16.9-1.1 9.1-2.1 2.8-1.6-11.9zM1751.4 1349l0.5-4.8 1.8 4.8 0.3 2.1 0.9-2.1 1.2-0.9 0.4 31-0.4 37.5-2.1-3-2.1 6.4-0.8-10.8-0.7-30.1zM1747.5 1379.1l0.2-20.2 0.3 20.2-0.3 0.4zM1764.2 1379.1l0.3-21.5 2-8.4 2.1 2 0 61.5-2.1 1.3-2-4.7zM1780.9 1379.1l0.3-5.4 2.1 0.5 0 13.2-2.1-1.9zM1787.3 1379.1l0.2-18.7 0.6 18.7-0.6 25.6zM1793.7 1379.1l0.1-5.5 0.7 5.5-0.7 8.2z"/>
<path fill="#c0281b" stroke="#c0281b" d="M1361.4 1318.9l1-2.7 2.1 2.1 2.1-2.1 2.1 1.2 4.2 0.7 2.1 4.1 0.5-3.3 1.6-5.6 4.1 4.7 0.1 0.9 0.9 120.4-1 11.3-2 1.5-2.1 0.5-2.1-3.6-2.1 2.2-2.1-2.8-2.1-43.7-1.8 34.6-0.3 14.6-2.1-3.1-2.1 1.5-2.1-3.2-2.1-0.9-0.5-8.9-0.7-60.2 0.4-30.1 0.8-24.9 2.1-0.1zM1387.2 1318.9l0.3-4.6 0.3 4.6 0.7 30.1 0.1 30.1-0.4 60.2-0.7 16.9-2.1-4.1-1-12.8 0.7-90.3zM1418.8 1318.9l0.1-4.4 2.1-0.8 2.1 2.4 2.1-1.1 2.1 2.8 2.1-5.2 2.1 0.2 4.2-2.9 2.1-0.2 1.6 9.2 0.5 4.9 0.4-4.9 1.7-9.6 2.1 0.5 2.1 44.9 2.1-41.8 2.1 56.7 2-55.5 2.1 48.8 2.1-54.1 2.1 2.7 2.1 4.3 2.1-3.9 2.1 1.2 2.1-3.7 2.1-0.1 2.1 0.7 2.1 2.2 0.8 6.7-0.2 60.2 2.5 60.2-1 16.1-2.1 3.3-2.1 0.7-2.1-1.4-2.1 2.6-2.1-22.7-2.1 16.7-2.1 1.3-2.1 6.3-2.1-18.2-2.1 7.7-2.1 1.7-2-0.2-2.1 3.5-2.1 6.9-2.1-3.6-2.1-9.6-2.1 7.1-2.1 1-2.1 2.5-2.1-1.1-2.1-0.4-2.1-1.9-2.1-5.2-2.1-1.4-2.1 4.9-2.1-2.1-2.1 1.2-0.6-106zM1423.1 1356l-0.3 23.1 0.3 5.9 0.4-5.9zM1481.6 1318.9l0.2-6 0.7 6 1.4 20.4 2-28.5 2.1-3.6 2.1 4.9 2.1-1.6 2.1 3.6 2.1-3.7 2.1 1.5 2.1 0.6 0.4 36.5 0.8 30.1 0.9 19 0.9-19 0.8-30.1 0.4-34.8 2.1-3.6 2.1 1.4 0.9 6.9 1.2 18.6 0.9-18.6 1.2-11.1 2.1-2.3 2.1 3 0.3 10.4 1.8 25.7 1.8-25.7 0.2-9.8 2.1 6.8 2.1-6.8 2.1-2.3 0.9 12.1 1.2 43.8 0.4-13.7 1.7-23.9 0.5-6.2 1.6-7.7 2.1-4.4 4.2 3.7 2.1-2.8 0.8 41.3 1.3 18.6 1.3-18.6 0.8-45.2 2.1 3.3 2.1-5.2 2.1 62.9 2.1-54.7 2-1.1 0.7 9.9 0.7 30.1-1.7 30.1-0.8 30.1 0 30.1-0.9 21.2-2.1-1.2-2.1-27.3-2.1 32.5-2.1 3.8-2.1-5.1-2.1-2.2-2.1-0.1-2.1 4.8-2.1-6.2-2.1 3.2-2.1-1-1.4-22.4-0.7-37.2-0.9 37.2-1.2 12.1-2.1 10.1-2.1-21.8-2.1 21.5-4.1-2-2.1 6-2.1-3.6-2.1-22.1-2.1 24.2-2.1-7.3-2.1 1.8-2.1-3.7-0.5-15.2-1.6-20.3-2.1-8.9-2.1 47.2-2.1 1-2.1 6.2-2.1-7-2.1 5.9-2.1-3.7-2-0.2-2.1 2.1-0.6-22.3-0.2-30.1 0.1-60.2zM1523.6 1351.2l-0.5 27.9 0 30.1 0.5 29.6 0.6-29.6 0-30.1zM1563.2 1318.9l0.2-6.2 2.1-2.6 2.1 3.2 2.1-2.9 2.1 5.9 2.1-4.4 2.9 7 1.3 6.9 1.4-6.9 0.7-1.9 2.1-0.6 2.1-5.6 2.1 4.2 0.4 3.9 0.4 60.2 1.3 37.1 1.2-37.1 0.5-60.2 0.3-3.1 2.1-6.2 2.1 33.9 2.1-27.7 1.7 3.1 0.4 2.5 0.5 57.7-1.7 60.2-0.9 15.4-2.1 3.2-2.1 2.3-2.1-6.5-2-4.2-4.2 6.5-0.7-46.8-1.4-29.4-2.1 40-2.1 28.8-4.2 10-1.7-19.3-0.4-10.3-0.3 10.3-1.8 22.9-2.1-4.1-4.2-0.4-0.5-18.4-0.3-60.2zM1607.4 1318.9l2.1-2.4 0.8 2.4 1.3 7.3 0.9 52.9-0.5 60.2-0.4 9.3-2.1-22.3-2.1 23.7-1.1-10.7 0.4-30.1 1.5-30.1zM1617.5 1318.9l0.4-0.6 1 0.6 5.3 8.3 2-1.9 2.1-4.5 2.1 0.9 2.1 5.8 2.1 3.3 0.4 48.3-0.4 61.3-2.1 5.4-2.1 0.9-2.1 0.4-2.1-22.2-2 19.1-2.1 1.2-2.1 2.4-2.1 0.7-2.1-1.7-1-67.5 1-54.6zM1332.5 1349l0.6-19.5 2.1 2.6 2.1 1.4 2.1-4.2 4.2 14.7 2.1-7.4 2-0.9 2.1 2.3 2.1-1.8 2.1 2 0.9 40.9-0.1 30.1-0.8 30.7-2.1 1-2.1-0.4-2.1 2-2-1.4-0.9-1.8-1.2-8.9-0.6 8.9-1.5 8.5-2.1-3.9-2.1-1.1-2.1 3.5-2.1 0.4-0.8-37.5zM1391 1349l0.7-25.4 1.9 55.5-0.3 30.1-1.6 37.5-0.8-37.5zM1395.2 1349l0.7-16.6 2.1-7.3 2.1-3.2 2.1 2.5 2.1-4.9 2.1 34.3 2.1-25.5 2.1-0.2 2.1-0.7 2.1-7.4 0.4 59.1-0.4 67.9-2.1-3-2.1 1.6-2.1-0.7-2.1 3.7-2.1 0.7-2.1-1.5-2.1 2-2.1-0.3-2.1-6.4-0.2-3.8-1.2-30.1-0.4-30.1zM1602.9 1349l0.3-21.6 0.6 21.6-0.6 32zM1638.8 1349l0-1.1 0.4 1.1 1.7 9.6 0.3 20.5-0.3 33.2-2.1 7.4zM1647.5 1349l1.8-23.8 2.1-4.8 1.1 28.6-0.6 30.1 0.5 30.1 1.1 12.5 1.4-42.6-0.5-30.1 1.2-24 2.1 0.4 2.1-5.1 0.5 28.7 1.5 35.6 1.6-35.6 0.5-29.6 2.1 26.4 1.6 3.2 0.5 2.6 1.1 27.5-1.1 34.2-2.1 5.6-0.9 20.4-1.2 9.5-2.1-4.3-2-1.3-2.1 1-2.1-0.7-2.1 6-1.2-10.2-0.9-16.4-1.2 16.4-0.9 6.5-0.9-6.5-1.2-24.9-2.1-5.2 0-49.2 2.1-0.7zM1669.1 1349l3.2-3.8 2.1 3 0.9 30.9 1.5 30.1-0.3 2.4-2.1 8.3-2.1-0.8-2.1-67.1zM1679.6 1349l1.1-16.6 2.1 2.7 1.3 13.9 0.4 30.1-1.7 55.7-2.1 1.2-1.4-26.8-0.5-30.1zM1685.8 1349l1.2-10.9 2.1-3.9 1.9 14.8-1.9 84.3-2.1 0.1-1.7-54.3zM1286.9 1379.1l0.1-6.7 2.1-1.7 1.1 8.4-1.1 32.7-2.1-2.8zM1292.9 1379.1l0.4-0.8 2.1 0.6 4.2-16 1.4 16.2 0 30.1-1.4 9.3-2.7-9.3-1.5-29.3-1 29.3-1.1 5zM1307.6 1379.1l0.4-26.1 2.1-0.1 3.3 26.2-0.4 30.1-0.9 8.3-2 12.7-2.1-8.6-0.5-12.4zM1317 1379.1l1.4-4.4 0 24.8zM1322.3 1379.1l0.3-13.4 2.1-3.3 0.9 16.7-0.9 35.2-2.1-3.1zM1697.3 1379.1l0.1-15.6 2.1-1.1 2.1-11.5 0 66.6-2.1-8.1-2.1-4.1zM1705.7 1379.1l0.1-13.1 2.1 3.3 2.1-0.1 1.8 9.9-1.8 12.6-4.2 5.1zM1726.7 1379.1l0.1-3 2.1-8.1 0.7 11.1-0.7 14.3-2.1-9.3zM1732.1 1379.1l0.9-20.1 2.1 12.4 0.6 7.7-0.6 12.4-2.1 15.6zM1740.1 1379.1l1.3-8.1 2.1 0.5 0.3 7.6-0.3 13.3-2.1-0.4zM1751.7 1379.1l0.2-6.3 0.9 6.3-0.9 8.9z"/>
<path fill="#9a1e13" stroke="#9a1e13" d="M1433.6 1318.9l2.1-1.6 2.1-0.2 2.1 20.7 2.1-21.1 2.1 0.4 1.1 31.9 1 13.9 1-13.9 1.1-26.9 2.1 71.6 2-68.5 2.1 55.5 2.1-63.8 2.1 2.7 2.1 8.5 2.1-7 2.1 3.5 1.3-5.7 0.8-1.5 2.1-0.2 2.1 1 2.1 3.6 0.4 57.3 2.1 60.2-0.4 5.9-2.1 4.1-2.1 0.7-2.1-1.1-2.1 2.5-1.2-12.1-0.9-21.1-1.3 21.1-0.8 6-2.1 1.3-2.1 6.5-2.1-13.3-2.1 1.3-2.1 3.1-2-2.2-4.2 12.5-2.1-3.3-2.1-6.6-2.1 3.6-2.1 1.4-2.1 2.6-2.1-1.3-2.1-0.4-2.1-1.5-2.1-5.4-2.1-1.4-2.1 5-2.1-2.1-2.1 1.2-0.3-97.3 0.3-24.3 2.1-1.6 1.5 25.9-0.3 30.1 0.9 16.1 1-16.1-0.2-30.1 1.3-22.9 2.1 4.9 2.1-10.5 2.1 1zM1486.1 1318.9l1.9-3.3 1.5 3.3 0.6 2.8 2.1-2.8 2.1 7 2.1-6.8 2.1 2.8 2.1 1 0.8 56.2 1.3 26.7 1.3-26.7 0.8-53.3 2.1-7 2.1 2.9 1.7 27.3 0.4 12.6 0.3-12.6 1.8-32.7 2.1-2.4 2.1 3.1 2.1 31.2 2-30.6 0.4 1.3 1.1 30.1-0.4 30.1 0.1 60.2-1.2 12.3-4.1-2-2.1 6.1-2.1-3.6-1.2-12.8-0.9-32.2-0.8 32.2-1.3 14.8-2.1-7-2.1 1.6-2.1-5-2.1-28.7-1.3-5.8-0.8-9.2-2.1 47.6-2.1 1-2.1 6.3-2.1-6.2-2.1 5.1-2.1-3.6-2-1.2-2.1 3.6-0.4-13.3-0.2-60.2 0.6-56.5 2.1 32.1zM1525.4 1318.9l0.3-1.2 2.1-2.1 0.3 3.3 1 30.1 0.3 30.1-0.4 30.1-0.9 30.1-2.4 12.5-1.1-12.5 0.1-60.2-0.4-30.1zM1533.8 1318.9l0.3-1.7 2.1-2 4.2 4.1 2.1-3.2 0.5 32.9 1.6 22.4 1.5-22.4 0.6-36.7 2.1 3.5 2.1-5.7 2.1 71.8 2.1-63.2 2-0.9 0.7 31.2-1.6 30.1-0.6 60.2-0.5 11.5-2.1-3.4-2.1-23.2-2.1 30.5-2.1 4-2.1-5.3-2.1-1.8-2.1-0.5-2.1 5-2.1-6-2.1 3.2-2.1-1.5-0.8-12.5-0.8-60.2 1-30.1zM1565.3 1318.9l0.2-0.3 0.2 0.3 1.9 5.4 2.1-5.5 2.1 15.3 2.1-12 2.1 9 2.1 11.6 2.1-10.6 2.1 0.6 2.1-13.4 2.1 8.4 0.5 51.4 1.4 60.2-1.9 5.2-2.1 2.1-0.5-37.4-1.6-45.4-2.1 48-2.5 27.5-3.8 9.5-0.8-9.5-1.3-33-1.1 33-1 13.3-2.1-4.2-2.1 0.1-2.1-0.6-0.4-38.7 0-60.2 0.4-25.3zM1592.4 1318.9l0.3-1.1 2.1 31.3 2.1-20.5 2.1 20.4-0.2 30.1-1.9 66.2-4.2 5.5-3.9-11.5 1.3-60.2 0.5-50.3zM1332.8 1349l0.3-9.7 2.1 2.9 2.1 1.9 2.1-4.5 2.1 4.1 1.1 5.3 1 18.1 2.1-19.2 2-1 1.5 2.1 0.6 2.5 1.1-2.5 1-0.8 0.9 0.8 1.2 3.1 0.4 27-0.4 40.9-2.1 2.6-2.1-1.4-2.1 6.2-2-2.7-2.1-14.6-2.1 30.3-0.7-1.1-1.4-6.1-2.1-4-2.1 9.6-2.1 1-0.5-30.6zM1357.8 1349l0.4-13.1 2.1-1.6 2.1-8.5 2.1 3.9 2.1-4.9 2.1 3.9 2.1 0.3 2.1 1 2.1 4.6 2.1-13.8 4.1 9.3 0.5 79.1-0.5 33.5-2 1.7-2.1 0.3-2.1-3.4-2.1 2-2.1-2.3-1.2-31.8-0.9-13.1-0.9 13.1-1.2 37.2-2.1-3.1-2.1 1.4-2.1-3.4-2.1-0.8-0.6-31.3zM1385.4 1349l2.1-26.2 0.6 26.2 0.1 60.2-0.7 39-2.1-4.1-0.3-4.8zM1391.4 1349l0.3-12 1.2 42.1-0.3 30.1-0.9 28.1-0.6-58.2zM1395.9 1349l2.1-10 2.1-3.4 2.1 3.1 2.1-5.9 2.1 31.6 2.1-21.4 2.1-0.8 2.1 0.7 2.1-8.2 0.3 44.4-0.3 59-2.1-10.5-2.1 5.2-2.1-2.5-2 9-2.2 1.9-1.9-1.9-0.2-0.7-2.1 2.7-2.1-0.5-0.5-1.5-1.6-15.2-0.9-45zM1608.6 1349l0.9-18.5 2.1 11.2 0.5 37.4-0.1 30.1-0.4 29.5-2.1-20.8-2.1 22.5-0.2-31.2 1.4-30.1zM1615.6 1349l0.2-8.8 2.1-6.7 6.3 9.9 2-1.7 2.1-5 2.1 1 4.2 10.1 0 69.2-2.1 14.7-2.1 2.7-2.1 1.1-2.1-20.8-2 12-2.1 3-2.1 6-2.1 3-2.1-5.6-0.6-54zM1648.6 1349l0.7-8.6 2.1-0.9 0.4 9.5-0.4 53.2-2.1 30.6-1.2-23.6-0.5-30.1zM1655.2 1349l0.4-8 2.1 0.3 2.1-5 1.1 42.8 0.9 21.4 2.1-66.3 1.2 14.8 0.9 30.1-0.5 30.1-1.6 31.1-0.4-1-1.7-12.8-4.1 2.5-2.1-1.7-0.7-18.1zM1680.6 1349l0.1-1.2 1.1 1.2 1 2.5 0.7 27.6-0.7 35-2.1 1.3-0.9-36.3zM1688.7 1349l0.4-0.9 0.1 0.9 0.4 30.1-0.5 35.5-2.1-2.1-0.7-33.4 0.7-21.4zM1653.4 1439.3l0.1-1.3 0.2 1.3-0.2 0.7z"/>
</g>
<g fill="#000"><rect x="1173" y="1047" width="2" height="534"/><rect x="1935" y="1047" width="2" height="534"/><rect x="1173" y="1047" width="764" height="2"/><rect x="1191.79" y="1049" width="2" height="3.5"/><rect x="1212.73" y="1049" width="2" height="3.5"/><rect x="1233.67" y="1049" width="2" height="3.5"/><rect x="1254.61" y="1049" width="2" height="3.5"/><rect x="1275.55" y="1049" width="2" height="9.5"/><rect x="1296.49" y="1049" width="2" height="3.5"/><rect x="1317.43" y="1049" width="2" height="3.5"/><rect x="1338.37" y="1049" width="2" height="3.5"/><rect x="1359.31" y="1049" width="2" height="3.5"/><rect x="1380.25" y="1049" width="2" height="9.5"/><rect x="1401.19" y="1049" width="2" height="3.5"/><rect x="1422.13" y="1049" width="2" height="3.5"/><rect x="1443.07" y="1049" width="2" height="3.5"/><rect x="1464.01" y="1049" width="2" height="3.5"/><rect x="1484.95" y="1049" width="2" height="9.5"/><rect x="1505.89" y="1049" width="2" height="3.5"/><rect x="1526.83" y="1049" width="2" height="3.5"/><rect x="1547.77" y="1049" width="2" height="3.5"/><rect x="1568.71" y="1049" width="2" height="3.5"/><rect x="1589.65" y="1049" width="2" height="9.5"/><rect x="1610.59" y="1049" width="2" height="3.5"/><rect x="1631.53" y="1049" width="2" height="3.5"/><rect x="1652.47" y="1049" width="2" height="3.5"/><rect x="1673.41" y="1049" width="2" height="3.5"/><rect x="1694.35" y="1049" width="2" height="9.5"/><rect x="1715.29" y="1049" width="2" height="3.5"/><rect x="1736.23" y="1049" width="2" height="3.5"/><rect x="1757.17" y="1049" width="2" height="3.5"/><rect x="1778.11" y="1049" width="2" height="3.5"/><rect x="1799.05" y="1049" width="2" height="9.5"/><rect x="1819.99" y="1049" width="2" height="3.5"/><rect x="1840.93" y="1049" width="2" height="3.5"/><rect x="1861.87" y="1049" width="2" height="3.5"/><rect x="1882.81" y="1049" width="2" height="3.5"/><rect x="1903.75" y="1049" width="2" height="9.5"/><rect x="1924.69" y="1049" width="2" height="3.5"/><rect x="1175" y="1077.1" width="3.5" height="2"/><rect x="1175" y="1107.2" width="3.5" height="2"/><rect x="1175" y="1137.3" width="3.5" height="2"/><rect x="1175" y="1167.4" width="3.5" height="2"/><rect x="1175" y="1197.5" width="9.5" height="2"/><rect x="1175" y="1227.6" width="3.5" height="2"/><rect x="1175" y="1257.7" width="3.5" height="2"/><rect x="1175" y="1287.8" width="3.5" height="2"/><rect x="1175" y="1317.9" width="3.5" height="2"/><rect x="1175" y="1348" width="9.5" height="2"/><rect x="1175" y="1378.1" width="3.5" height="2"/><rect x="1175" y="1408.2" width="3.5" height="2"/><rect x="1175" y="1438.3" width="3.5" height="2"/><rect x="1175" y="1468.4" width="3.5" height="2"/><rect x="1175" y="1498.5" width="9.5" height="2"/><rect x="1175" y="1528.6" width="3.5" height="2"/><rect x="1175" y="1558.7" width="3.5" height="2"/></g>
<g shape-rendering="crispEdges"><rect x="1957" y="960" width="22" height="5" fill="#79150d"/><rect x="1957" y="965" width="22" height="5" fill="#83180f"/><rect x="1957" y="970" width="22" height="5" fill="#8c1a10"/><rect x="1957" y="975" width="22" height="4" fill="#951d12"/><rect x="1957" y="979" width="22" height="5" fill="#9f1f14"/><rect x="1957" y="984" width="22" height="5" fill="#a82216"/><rect x="1957" y="989" width="22" height="5" fill="#b22418"/><rect x="1957" y="994" width="22" height="5" fill="#bb271a"/><rect x="1957" y="999" width="22" height="5" fill="#c4291c"/><rect x="1957" y="1004" width="22" height="4" fill="#ce2c1d"/><rect x="1957" y="1008" width="22" height="5" fill="#d72e1f"/><rect x="1957" y="1013" width="22" height="5" fill="#e13121"/><rect x="1957" y="1018" width="22" height="5" fill="#ea3323"/><rect x="1957" y="1023" width="22" height="5" fill="#ea3523"/><rect x="1957" y="1028" width="22" height="5" fill="#ea3824"/><rect x="1957" y="1033" width="22" height="4" fill="#ea3c24"/><rect x="1957" y="1037" width="22" height="5" fill="#ea4225"/><rect x="1957" y="1042" width="22" height="5" fill="#eb4826"/><rect x="1957" y="1047" width="22" height="5" fill="#eb4f27"/><rect x="1957" y="1052" width="22" height="5" fill="#eb5628"/><rect x="1957" y="1057" width="22" height="5" fill="#ec5e2a"/><rect x="1957" y="1062" width="22" height="4" fill="#ec672b"/><rect x="1957" y="1066" width="22" height="5" fill="#ed6f2d"/><rect x="1957" y="1071" width="22" height="5" fill="#ee782f"/><rect x="1957" y="1076" width="22" height="5" fill="#ee8131"/><rect x="1957" y="1081" width="22" height="5" fill="#ef8a33"/><rect x="1957" y="1086" width="22" height="5" fill="#f09336"/><rect x="1957" y="1091" width="22" height="5" fill="#f19d38"/><rect x="1957" y="1096" width="22" height="4" fill="#f2a63b"/><rect x="1957" y="1100" width="22" height="5" fill="#f3b03d"/><rect x="1957" y="1105" width="22" height="5" fill="#f4b940"/><rect x="1957" y="1110" width="22" height="5" fill="#f6c343"/><rect x="1957" y="1115" width="22" height="5" fill="#f7cc46"/><rect x="1957" y="1120" width="22" height="5" fill="#f8d648"/><rect x="1957" y="1125" width="22" height="4" fill="#fae04b"/><rect x="1957" y="1129" width="22" height="5" fill="#fcea4e"/><rect x="1957" y="1134" width="22" height="5" fill="#fdf351"/><rect x="1957" y="1139" width="22" height="5" fill="#fffd54"/><rect x="1957" y="1144" width="22" height="5" fill="#f7fd55"/><rect x="1957" y="1149" width="22" height="5" fill="#eefc56"/><rect x="1957" y="1154" width="22" height="4" fill="#e6fc58"/><rect x="1957" y="1158" width="22" height="5" fill="#defc5b"/><rect x="1957" y="1163" width="22" height="5" fill="#d6fc5e"/><rect x="1957" y="1168" width="22" height="5" fill="#cefb63"/><rect x="1957" y="1173" width="22" height="5" fill="#c7fb68"/><rect x="1957" y="1178" width="22" height="5" fill="#bffb6e"/><rect x="1957" y="1183" width="22" height="4" fill="#b8fb74"/><rect x="1957" y="1187" width="22" height="5" fill="#b1fb7b"/><rect x="1957" y="1192" width="22" height="5" fill="#aafb82"/><rect x="1957" y="1197" width="22" height="5" fill="#a4fb8a"/><rect x="1957" y="1202" width="22" height="5" fill="#9dfb92"/><rect x="1957" y="1207" width="22" height="5" fill="#97fa9a"/><rect x="1957" y="1212" width="22" height="5" fill="#92faa3"/><rect x="1957" y="1217" width="22" height="4" fill="#8dfaab"/><rect x="1957" y="1221" width="22" height="5" fill="#88fab4"/><rect x="1957" y="1226" width="22" height="5" fill="#84fabd"/><rect x="1957" y="1231" width="22" height="5" fill="#80fbc6"/><rect x="1957" y="1236" width="22" height="5" fill="#7dfbcf"/><rect x="1957" y="1241" width="22" height="5" fill="#7afbd8"/><rect x="1957" y="1246" width="22" height="4" fill="#78fbe1"/><rect x="1957" y="1250" width="22" height="5" fill="#77fbea"/><rect x="1957" y="1255" width="22" height="5" fill="#76fbf4"/><rect x="1957" y="1260" width="22" height="5" fill="#75fbfd"/><rect x="1957" y="1265" width="22" height="5" fill="#70f1fc"/><rect x="1957" y="1270" width="22" height="5" fill="#6be8fc"/><rect x="1957" y="1275" width="22" height="4" fill="#66defb"/><rect x="1957" y="1279" width="22" height="5" fill="#61d4fa"/><rect x="1957" y="1284" width="22" height="5" fill="#5ccafa"/><rect x="1957" y="1289" width="22" height="5" fill="#57c0f9"/><rect x="1957" y="1294" width="22" height="5" fill="#52b6f9"/><rect x="1957" y="1299" width="22" height="5" fill="#4dadf8"/><rect x="1957" y="1304" width="22" height="4" fill="#48a3f8"/><rect x="1957" y="1308" width="22" height="5" fill="#4399f7"/><rect x="1957" y="1313" width="22" height="5" fill="#3e90f7"/><rect x="1957" y="1318" width="22" height="5" fill="#3986f7"/><rect x="1957" y="1323" width="22" height="5" fill="#347cf6"/><rect x="1957" y="1328" width="22" height="5" fill="#2f73f6"/><rect x="1957" y="1333" width="22" height="5" fill="#2a6af6"/><rect x="1957" y="1338" width="22" height="4" fill="#2560f6"/><rect x="1957" y="1342" width="22" height="5" fill="#2057f5"/><rect x="1957" y="1347" width="22" height="5" fill="#1c4ff5"/><rect x="1957" y="1352" width="22" height="5" fill="#1746f5"/><rect x="1957" y="1357" width="22" height="5" fill="#123ef5"/><rect x="1957" y="1362" width="22" height="5" fill="#0d37f5"/><rect x="1957" y="1367" width="22" height="4" fill="#0830f5"/><rect x="1957" y="1371" width="22" height="5" fill="#042af5"/><rect x="1957" y="1376" width="22" height="5" fill="#0226f5"/><rect x="1957" y="1381" width="22" height="5" fill="#0023f5"/><rect x="1957" y="1386" width="22" height="5" fill="#0021eb"/><rect x="1957" y="1391" width="22" height="5" fill="#001fe1"/><rect x="1957" y="1396" width="22" height="4" fill="#001dd7"/><rect x="1957" y="1400" width="22" height="5" fill="#001ccd"/><rect x="1957" y="1405" width="22" height="5" fill="#001ac4"/><rect x="1957" y="1410" width="22" height="5" fill="#0018ba"/><rect x="1957" y="1415" width="22" height="5" fill="#0016b0"/><rect x="1957" y="1420" width="22" height="5" fill="#0014a6"/><rect x="1957" y="1425" width="22" height="4" fill="#00129c"/><rect x="1957" y="1429" width="22" height="5" fill="#001093"/><rect x="1957" y="1434" width="22" height="5" fill="#000f89"/><rect x="1957" y="1439" width="22" height="5" fill="#000d7f"/></g>
<g><text transform="translate(1359.4 974.2) scale(1.0158 1)" font-size="22.6">Annual AC energy in Year 1 (kW)</text><text transform="translate(1534.68 1007.9) scale(0.9844 1)" font-size="22.6">Day</text><text transform="translate(1262.73 1036) scale(1.0700 1)" font-size="22.6" letter-spacing="0.3">50</text><text transform="translate(1361.2 1036) scale(1.0286 1)" font-size="22.6">100</text><text transform="translate(1465.6 1036) scale(1.0314 1)" font-size="22.6">150</text><text transform="translate(1569.93 1036) scale(1.0700 1)" font-size="22.6" letter-spacing="0.35">200</text><text transform="translate(1674.94 1036) scale(1.0573 1)" font-size="22.6">250</text><text transform="translate(1778.6 1036) scale(1.0700 1)" font-size="22.6" letter-spacing="0.5">300</text><text transform="translate(1883.9 1036) scale(1.0700 1)" font-size="22.6" letter-spacing="0.22">350</text><text transform="translate(1154.75 1055.6)" font-size="22.6">0</text><text transform="translate(1154.75 1206.4)" font-size="22.6">5</text><text transform="translate(1142.25 1356.9)" font-size="22.6">10</text><text transform="translate(1142.25 1507.4)" font-size="22.6">15</text><text transform="translate(1127.2 1421.23) rotate(-90) scale(1.0447 1)" font-size="22.6">Hour</text><text transform="translate(1984.06 968.2) scale(1.0447 1)" font-size="22.6">5.94</text><text transform="translate(1984.03 1016.2) scale(1.0700 1)" font-size="22.6" letter-spacing="0.24">5.34598</text><text transform="translate(1984.59 1064.2) scale(1.0218 1)" font-size="22.6">4.75196</text><text transform="translate(1984.59 1112.2) scale(1.0236 1)" font-size="22.6">4.15794</text><text transform="translate(1984.3 1160.2) scale(1.0700 1)" font-size="22.6" letter-spacing="0.17">3.56392</text><text transform="translate(1984.03 1208.2) scale(1.0700 1)" font-size="22.6" letter-spacing="0.21">2.9699</text><text transform="translate(1984.04 1256.2) scale(1.0608 1)" font-size="22.6">2.37588</text><text transform="translate(1983.37 1304.2) scale(0.9911 1)" font-size="22.6">1.78186</text><text transform="translate(1983.37 1352.2) scale(0.9880 1)" font-size="22.6">1.18784</text><text transform="translate(1984.3 1400.2) scale(1.0627 1)" font-size="22.6">0.593818</text><text transform="translate(1984.03 1448.2) scale(1.0700 1)" font-size="22.6" letter-spacing="0.36">-0.000200001</text></g>
</g>
</svg>
</body>
</html>
